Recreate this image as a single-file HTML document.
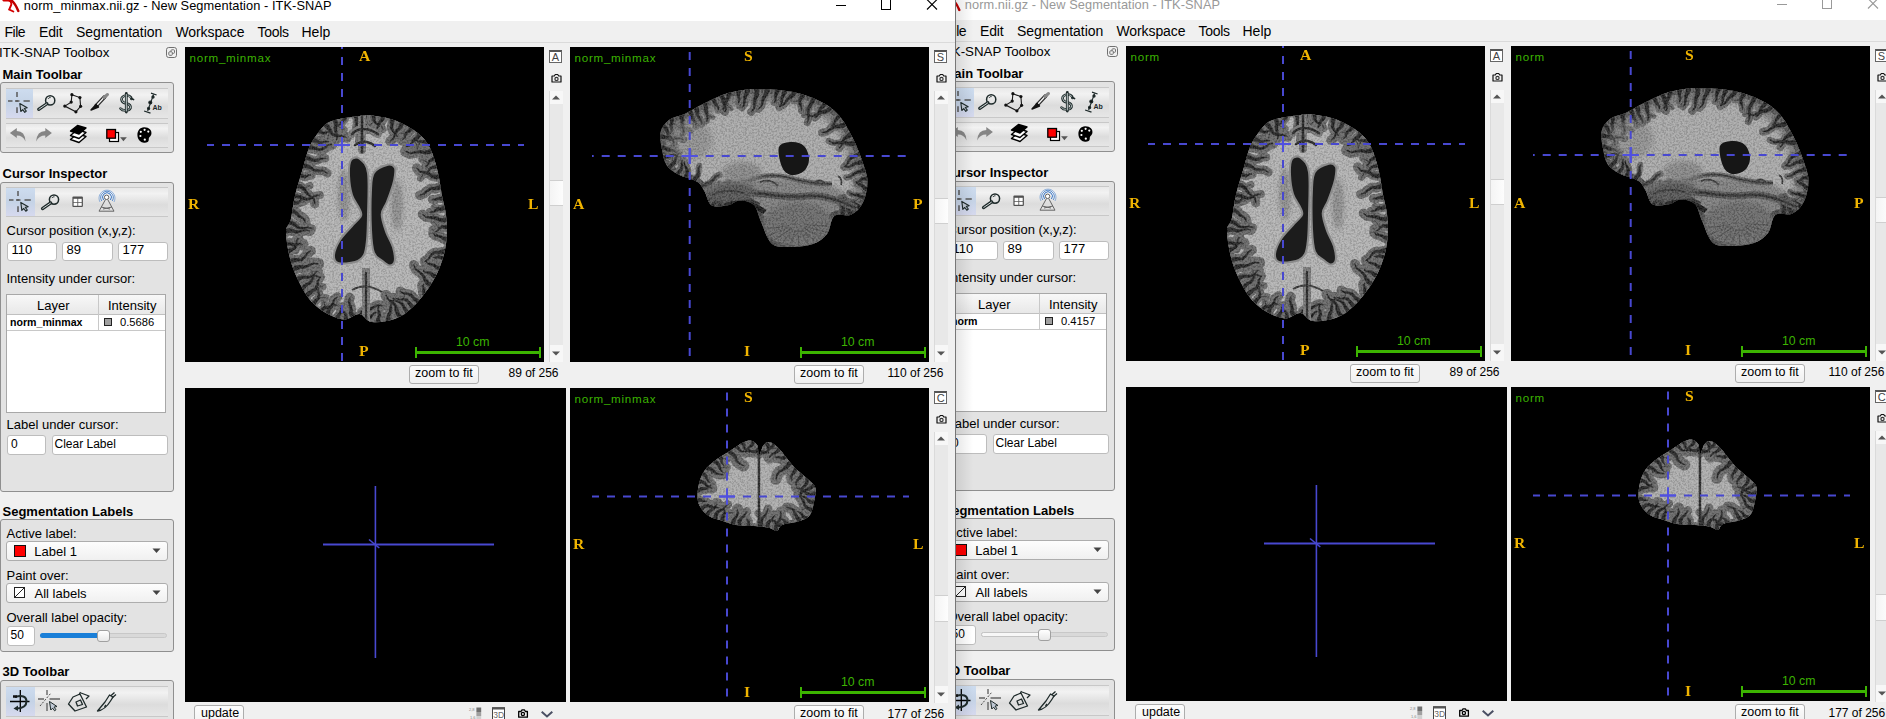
<!DOCTYPE html>
<html><head><meta charset="utf-8"><style>
html,body{margin:0;padding:0}
body{width:1886px;height:719px;overflow:hidden;position:relative;background:#f0f0f0;font-family:'Liberation Sans', sans-serif}
.t{position:absolute;white-space:pre}
.r{position:absolute}
.win{position:absolute;left:0;top:0;width:960px;height:730px}
</style></head><body>
<div style="position:absolute;left:955px;top:0;width:931px;height:719px;overflow:hidden">
<div class="win" style="left:-14px;top:-1px">
<div class="r" style="left:-20px;top:-5px;width:980px;height:26px;background:#fff"></div>
<div class="r" style="left:-20px;top:21px;width:980px;height:21px;background:#f0f0f0"></div>
<div class="r" style="left:-20px;top:42px;width:980px;height:1px;background:#dadada"></div>
<div class="r" style="left:-20px;top:43px;width:980px;height:687px;background:#f0f0f0"></div>
<div class="t" style="left:23.8px;top:0.16px;font-size:12.8px;line-height:12.8px;font-weight:400;color:#999;font-family:'Liberation Sans', sans-serif;letter-spacing:0.07px">norm.nii.gz - New Segmentation - ITK-SNAP</div>
<div class="r" style="left:836px;top:5px;width:10px;height:1px;background:#999"></div>
<div class="r" style="left:881px;top:-1px;width:10px;height:11px;border:1px solid #999;box-sizing:border-box"></div>
<svg class="r" style="left:926px;top:-1px" width="12" height="12" viewBox="0 0 12 12"><path d="M1 0.5L11 10.5M11 0.5L1 10.5" stroke="#999" stroke-width="1.1"/></svg>
<div class="t" style="left:4.5px;top:24.65px;font-size:14px;line-height:14px;font-weight:400;color:#000;font-family:'Liberation Sans', sans-serif;letter-spacing:-0.5px">File</div>
<div class="t" style="left:39px;top:24.65px;font-size:14px;line-height:14px;font-weight:400;color:#000;font-family:'Liberation Sans', sans-serif;letter-spacing:-0.2px">Edit</div>
<div class="t" style="left:76px;top:24.65px;font-size:14px;line-height:14px;font-weight:400;color:#000;font-family:'Liberation Sans', sans-serif;letter-spacing:0px">Segmentation</div>
<div class="t" style="left:175.5px;top:24.65px;font-size:14px;line-height:14px;font-weight:400;color:#000;font-family:'Liberation Sans', sans-serif;letter-spacing:-0.1px">Workspace</div>
<div class="t" style="left:257.5px;top:24.65px;font-size:14px;line-height:14px;font-weight:400;color:#000;font-family:'Liberation Sans', sans-serif;letter-spacing:-0.3px">Tools</div>
<div class="t" style="left:301.5px;top:24.65px;font-size:14px;line-height:14px;font-weight:400;color:#000;font-family:'Liberation Sans', sans-serif;letter-spacing:0px">Help</div>
<div class="t" style="left:-1px;top:45.74px;font-size:13.3px;line-height:13.3px;font-weight:400;color:#000;font-family:'Liberation Sans', sans-serif;">ITK-SNAP Toolbox</div>
<div class="t" style="left:2.5px;top:67.80px;font-size:13px;line-height:13px;font-weight:700;color:#000;font-family:'Liberation Sans', sans-serif;">Main Toolbar</div>
<div class="t" style="left:2.5px;top:166.80px;font-size:13px;line-height:13px;font-weight:700;color:#000;font-family:'Liberation Sans', sans-serif;">Cursor Inspector</div>
<div class="t" style="left:2.5px;top:504.50px;font-size:13px;line-height:13px;font-weight:700;color:#000;font-family:'Liberation Sans', sans-serif;">Segmentation Labels</div>
<div class="t" style="left:2.5px;top:665.20px;font-size:13px;line-height:13px;font-weight:700;color:#000;font-family:'Liberation Sans', sans-serif;">3D Toolbar</div>
<div class="r" style="left:0px;top:82px;width:174px;height:71px;background:#e3e3e3;border:1px solid #8f8f8f;border-radius:3px;box-sizing:border-box"></div>
<div class="r" style="left:0px;top:181.5px;width:174px;height:310.0px;background:#e3e3e3;border:1px solid #8f8f8f;border-radius:3px;box-sizing:border-box"></div>
<div class="r" style="left:0px;top:519px;width:174px;height:133px;background:#e3e3e3;border:1px solid #8f8f8f;border-radius:3px;box-sizing:border-box"></div>
<div class="r" style="left:0px;top:680px;width:174px;height:60px;background:#e3e3e3;border:1px solid #8f8f8f;border-radius:3px;box-sizing:border-box"></div>
<div class="r" style="left:6px;top:88px;width:162px;height:31px;background:linear-gradient(#e8e8e8,#f2f2f2 20%,#dcdcdc 60%,#e6e6e6);border-top:1px solid #c8c8c8;border-bottom:1px solid #c8c8c8;box-sizing:border-box"></div>
<div class="r" style="left:6px;top:123px;width:162px;height:25px;background:linear-gradient(#e8e8e8,#f2f2f2 20%,#dcdcdc 60%,#e6e6e6);border-top:1px solid #c8c8c8;border-bottom:1px solid #c8c8c8;box-sizing:border-box"></div>
<div class="r" style="left:6px;top:187px;width:162px;height:30px;background:linear-gradient(#e8e8e8,#f2f2f2 20%,#dcdcdc 60%,#e6e6e6);border-top:1px solid #c8c8c8;border-bottom:1px solid #c8c8c8;box-sizing:border-box"></div>
<div class="r" style="left:6px;top:686px;width:162px;height:31px;background:linear-gradient(#e8e8e8,#f2f2f2 20%,#dcdcdc 60%,#e6e6e6);border-top:1px solid #c8c8c8;border-bottom:1px solid #c8c8c8;box-sizing:border-box"></div>
<div class="r" style="left:6px;top:89px;width:27px;height:29px;background:linear-gradient(#cddcef,#c5d3e6 50%,#d6d9ee)"></div>
<div class="r" style="left:6px;top:188px;width:29px;height:28px;background:linear-gradient(#cddcef,#c5d3e6 50%,#d6d9ee)"></div>
<div class="r" style="left:6px;top:687px;width:29px;height:29px;background:linear-gradient(#cddcef,#c5d3e6 50%,#d6d9ee)"></div>
<div class="t" style="left:6.5px;top:224.00px;font-size:13px;line-height:13px;font-weight:400;color:#000;font-family:'Liberation Sans', sans-serif;">Cursor position (x,y,z):</div>
<div class="r" style="left:6.5px;top:241.5px;width:50.0px;height:19.5px;background:#fff;border:1px solid #bdbdbd;border-radius:3px;box-sizing:border-box"></div>
<div class="t" style="left:11.5px;top:243.00px;font-size:13px;line-height:13px;font-weight:400;color:#000;font-family:'Liberation Sans', sans-serif;">110</div>
<div class="r" style="left:61.5px;top:241.5px;width:51.0px;height:19.5px;background:#fff;border:1px solid #bdbdbd;border-radius:3px;box-sizing:border-box"></div>
<div class="t" style="left:66.5px;top:243.00px;font-size:13px;line-height:13px;font-weight:400;color:#000;font-family:'Liberation Sans', sans-serif;">89</div>
<div class="r" style="left:117.5px;top:241.5px;width:50.0px;height:19.5px;background:#fff;border:1px solid #bdbdbd;border-radius:3px;box-sizing:border-box"></div>
<div class="t" style="left:122.5px;top:243.00px;font-size:13px;line-height:13px;font-weight:400;color:#000;font-family:'Liberation Sans', sans-serif;">177</div>
<div class="t" style="left:6.5px;top:272.00px;font-size:13px;line-height:13px;font-weight:400;color:#000;font-family:'Liberation Sans', sans-serif;">Intensity under cursor:</div>
<div class="r" style="left:6px;top:294px;width:160px;height:119px;background:#fff;border:1px solid #a8a8a8;box-sizing:border-box"></div>
<div class="r" style="left:7px;top:295px;width:158px;height:20px;background:linear-gradient(#f8f8f8,#e8e8e8);border-bottom:1px solid #c0c0c0;box-sizing:border-box"></div>
<div class="r" style="left:7px;top:315px;width:158px;height:16px;border-bottom:1px solid #c8c8c8;box-sizing:border-box"></div>
<div class="r" style="left:98px;top:295px;width:1px;height:36px;background:#c8c8c8"></div>
<div class="t" style="left:37px;top:299.00px;font-size:13px;line-height:13px;font-weight:400;color:#000;font-family:'Liberation Sans', sans-serif;">Layer</div>
<div class="t" style="left:108px;top:299.00px;font-size:13px;line-height:13px;font-weight:400;color:#000;font-family:'Liberation Sans', sans-serif;">Intensity</div>
<div class="t" style="left:10px;top:316.53px;font-size:10.6px;line-height:10.6px;font-weight:700;color:#000;font-family:'Liberation Sans', sans-serif;">norm</div>
<div class="r" style="left:104px;top:318px;width:8px;height:8px;background:#a0a0a0;border:1px solid #222;box-sizing:border-box"></div>
<div class="t" style="left:120px;top:317.02px;font-size:11.2px;line-height:11.2px;font-weight:400;color:#000;font-family:'Liberation Sans', sans-serif;">0.4157</div>
<div class="t" style="left:6.5px;top:417.60px;font-size:13px;line-height:13px;font-weight:400;color:#000;font-family:'Liberation Sans', sans-serif;">Label under cursor:</div>
<div class="r" style="left:6.5px;top:435px;width:39.5px;height:19.5px;background:#fff;border:1px solid #bdbdbd;border-radius:3px;box-sizing:border-box"></div>
<div class="t" style="left:11px;top:437.84px;font-size:12px;line-height:12px;font-weight:400;color:#000;font-family:'Liberation Sans', sans-serif;">0</div>
<div class="r" style="left:51.5px;top:435px;width:116.0px;height:19.5px;background:#fff;border:1px solid #bdbdbd;border-radius:3px;box-sizing:border-box"></div>
<div class="t" style="left:54.5px;top:437.84px;font-size:12px;line-height:12px;font-weight:400;color:#000;font-family:'Liberation Sans', sans-serif;">Clear Label</div>
<div class="t" style="left:6.5px;top:526.70px;font-size:13px;line-height:13px;font-weight:400;color:#000;font-family:'Liberation Sans', sans-serif;">Active label:</div>
<div class="r" style="left:6px;top:541px;width:162px;height:19.5px;background:linear-gradient(#fdfdfd,#f0f0f0);border:1px solid #adadad;border-radius:3px;box-sizing:border-box"></div>
<div class="r" style="left:14px;top:545px;width:12px;height:12px;background:#f00;border:1px solid #111;box-sizing:border-box"></div>
<div class="t" style="left:34.3px;top:544.50px;font-size:13px;line-height:13px;font-weight:400;color:#000;font-family:'Liberation Sans', sans-serif;">Label 1</div>
<svg class="r" style="left:152px;top:548px" width="9" height="6"><path d="M0.5 0.5H8.5L4.5 5z" fill="#444"/></svg>
<div class="t" style="left:6.5px;top:568.70px;font-size:13px;line-height:13px;font-weight:400;color:#000;font-family:'Liberation Sans', sans-serif;">Paint over:</div>
<div class="r" style="left:6px;top:583px;width:162px;height:19.5px;background:linear-gradient(#fdfdfd,#f0f0f0);border:1px solid #adadad;border-radius:3px;box-sizing:border-box"></div>
<svg class="r" style="left:13px;top:586px" width="13" height="13"><rect x="1.5" y="1.5" width="10" height="10" fill="#fff" stroke="#222"/><path d="M1.5 11.5L11.5 1.5" stroke="#222"/></svg>
<div class="t" style="left:34.5px;top:586.50px;font-size:13px;line-height:13px;font-weight:400;color:#000;font-family:'Liberation Sans', sans-serif;">All labels</div>
<svg class="r" style="left:152px;top:590px" width="9" height="6"><path d="M0.5 0.5H8.5L4.5 5z" fill="#444"/></svg>
<div class="t" style="left:6.5px;top:611.00px;font-size:13px;line-height:13px;font-weight:400;color:#000;font-family:'Liberation Sans', sans-serif;">Overall label opacity:</div>
<div class="r" style="left:6.5px;top:626px;width:28.0px;height:19.5px;background:#fff;border:1px solid #bdbdbd;border-radius:3px;box-sizing:border-box"></div>
<div class="t" style="left:10.5px;top:629.34px;font-size:12px;line-height:12px;font-weight:400;color:#000;font-family:'Liberation Sans', sans-serif;">50</div>
<div class="r" style="left:40px;top:633px;width:127px;height:5px;background:#d9d9d9;border:1px solid #c8c8c8;border-radius:3px;box-sizing:border-box"></div>
<div class="r" style="left:40px;top:633px;width:63px;height:5px;background:#f7f7f7;border:1px solid #c4c4c4;box-sizing:border-box;border-radius:3px"></div>
<div class="r" style="left:97px;top:629.5px;width:12.5px;height:12.0px;background:linear-gradient(#fff,#e8e8e8);border:1px solid #a0a0a0;border-radius:3px;box-sizing:border-box"></div>
<div class="r" style="left:185px;top:47px;width:359px;height:315px;background:#000;overflow:hidden"></div>
<div class="r" style="left:570px;top:47px;width:359px;height:315px;background:#000;overflow:hidden"></div>
<div class="r" style="left:185px;top:388px;width:381px;height:314px;background:#000;overflow:hidden"></div>
<div class="r" style="left:570px;top:388px;width:359px;height:314px;background:#000;overflow:hidden"></div>
<svg class="r" style="left:0;top:0" width="960" height="730" viewBox="0 0 960 730"><defs><filter id="b1b" x="-5%" y="-5%" width="110%" height="110%"><feGaussianBlur stdDeviation="0.6"/></filter><filter id="b2b" x="-50%" y="-50%" width="200%" height="200%"><feGaussianBlur stdDeviation="2.5"/></filter><filter id="b3b" x="-20%" y="-20%" width="140%" height="140%"><feGaussianBlur stdDeviation="4"/></filter><filter id="nzb" x="0" y="0" width="100%" height="100%"><feTurbulence type="fractalNoise" baseFrequency="0.55" numOctaves="2" seed="7"/><feColorMatrix values="0 0 0 2.2 -0.85  0 0 0 2.2 -0.85  0 0 0 2.2 -0.85  0 0 0 0 0.13"/></filter><clipPath id="caxb"><path d="M359.5,116.0C352.1,116.9 337.4,118.7 330.5,121.5C323.6,124.3 321.6,128.6 318.0,133.0C314.4,137.4 311.5,142.2 309.0,148.0C306.5,153.8 305.3,160.1 303.0,168.0C300.7,175.9 297.1,187.0 295.0,195.7C292.9,204.4 292.2,213.9 290.7,220.0C289.2,226.1 286.0,225.2 286.0,232.0C286.0,238.8 288.4,252.4 290.7,261.0C293.0,269.6 296.7,277.2 300.0,283.8C303.3,290.4 306.3,295.8 310.6,300.7C314.9,305.6 320.4,309.9 326.0,313.0C331.6,316.1 338.4,319.3 344.0,319.5C349.6,319.7 354.9,313.6 359.5,314.0C364.1,314.4 365.9,321.2 371.8,322.0C377.7,322.8 387.8,321.5 394.7,319.0C401.6,316.5 406.9,312.7 413.0,306.8C419.1,300.9 426.6,291.4 431.4,283.8C436.2,276.2 439.4,268.6 442.0,261.0C444.6,253.4 446.0,245.7 446.7,238.0C447.4,230.3 446.8,222.1 446.0,215.0C445.2,207.9 443.4,203.0 442.0,195.7C440.6,188.4 439.6,178.9 437.6,171.0C435.6,163.1 433.3,154.3 430.0,148.0C426.7,141.7 423.4,137.6 417.7,133.0C412.0,128.4 403.1,123.5 396.0,120.7C388.9,117.9 381.1,116.8 375.0,116.0C368.9,115.2 366.9,115.1 359.5,116.0Z"/></clipPath><clipPath id="csagb"><path d="M660.6,132.0C661.8,127.2 664.9,123.1 669.0,120.0C673.1,116.9 679.7,116.2 685.5,113.5C691.3,110.8 696.9,107.0 704.0,103.6C711.1,100.2 719.3,95.4 728.0,93.0C736.7,90.6 745.8,89.2 756.4,89.0C767.0,88.8 781.2,89.8 791.8,91.8C802.4,93.8 812.1,97.3 820.0,101.3C827.9,105.2 833.5,109.2 839.0,115.5C844.5,121.8 849.3,131.1 853.3,139.0C857.3,146.9 860.4,155.6 862.8,162.7C865.2,169.8 867.5,175.0 867.5,181.7C867.5,188.4 865.5,197.5 862.8,203.0C860.0,208.5 855.7,212.6 851.0,214.8C846.3,217.0 838.4,212.8 834.4,216.0C830.4,219.2 830.6,229.3 827.0,234.0C823.4,238.7 818.9,241.9 813.0,244.0C807.1,246.1 798.6,246.7 791.8,246.7C785.0,246.7 777.1,248.2 772.0,244.0C766.9,239.8 764.0,228.2 761.0,221.8C758.0,215.4 757.5,208.8 754.0,205.3C750.5,201.8 744.1,200.6 739.8,200.6C735.5,200.6 732.7,204.5 728.0,205.3C723.3,206.1 715.4,207.7 711.5,205.3C707.6,202.9 706.8,194.9 704.4,191.0C702.0,187.1 701.3,184.4 697.0,181.7C692.7,179.0 683.5,177.4 678.4,174.6C673.3,171.8 669.3,169.3 666.5,165.0C663.7,160.7 662.8,154.1 661.8,148.6C660.8,143.1 659.4,136.8 660.6,132.0Z"/></clipPath><clipPath id="ccorb"><path d="M751.2,440.7C753.5,441.2 756.0,442.8 757.3,445.3C758.6,447.9 757.9,456.0 758.9,456.0C759.9,456.0 761.7,447.6 763.5,445.3C765.3,443.0 767.1,441.7 769.6,442.2C772.1,442.7 774.7,444.3 778.8,448.4C782.9,452.5 788.9,461.3 794.0,466.7C799.1,472.1 805.8,476.9 809.4,480.5C813.0,484.1 814.7,484.6 815.5,488.2C816.3,491.8 815.0,497.4 814.0,502.0C813.0,506.6 812.2,512.4 809.4,515.7C806.6,519.0 801.6,520.2 797.0,521.8C792.4,523.3 785.1,523.5 781.8,525.0C778.5,526.5 779.2,530.5 777.2,531.0C775.2,531.5 772.7,528.8 769.6,528.0C766.5,527.2 764.5,526.9 758.9,526.4C753.3,525.9 742.4,526.0 736.0,525.0C729.6,524.0 725.2,521.8 720.6,520.3C716.0,518.8 712.0,518.2 708.4,515.7C704.8,513.2 701.0,509.1 699.2,505.0C697.4,500.9 697.2,496.3 697.7,491.2C698.2,486.1 699.7,479.2 702.2,474.4C704.8,469.5 708.1,466.2 713.0,462.1C717.9,458.0 726.2,453.2 731.3,449.9C736.4,446.6 740.3,443.7 743.6,442.2C746.9,440.7 748.9,440.2 751.2,440.7Z"/></clipPath></defs><g filter="url(#b1b)"><g clip-path="url(#caxb)"><path d="M359.5,116.0C352.1,116.9 337.4,118.7 330.5,121.5C323.6,124.3 321.6,128.6 318.0,133.0C314.4,137.4 311.5,142.2 309.0,148.0C306.5,153.8 305.3,160.1 303.0,168.0C300.7,175.9 297.1,187.0 295.0,195.7C292.9,204.4 292.2,213.9 290.7,220.0C289.2,226.1 286.0,225.2 286.0,232.0C286.0,238.8 288.4,252.4 290.7,261.0C293.0,269.6 296.7,277.2 300.0,283.8C303.3,290.4 306.3,295.8 310.6,300.7C314.9,305.6 320.4,309.9 326.0,313.0C331.6,316.1 338.4,319.3 344.0,319.5C349.6,319.7 354.9,313.6 359.5,314.0C364.1,314.4 365.9,321.2 371.8,322.0C377.7,322.8 387.8,321.5 394.7,319.0C401.6,316.5 406.9,312.7 413.0,306.8C419.1,300.9 426.6,291.4 431.4,283.8C436.2,276.2 439.4,268.6 442.0,261.0C444.6,253.4 446.0,245.7 446.7,238.0C447.4,230.3 446.8,222.1 446.0,215.0C445.2,207.9 443.4,203.0 442.0,195.7C440.6,188.4 439.6,178.9 437.6,171.0C435.6,163.1 433.3,154.3 430.0,148.0C426.7,141.7 423.4,137.6 417.7,133.0C412.0,128.4 403.1,123.5 396.0,120.7C388.9,117.9 381.1,116.8 375.0,116.0C368.9,115.2 366.9,115.1 359.5,116.0Z" fill="#b6b6b6"/><g fill="#8e8e8e" filter="url(#b2b)"><ellipse cx="344" cy="195" rx="6" ry="26"/><ellipse cx="397" cy="205" rx="6" ry="26"/></g><path d="M359.5,116.0C352.1,116.9 337.4,118.7 330.5,121.5C323.6,124.3 321.6,128.6 318.0,133.0C314.4,137.4 311.5,142.2 309.0,148.0C306.5,153.8 305.3,160.1 303.0,168.0C300.7,175.9 297.1,187.0 295.0,195.7C292.9,204.4 292.2,213.9 290.7,220.0C289.2,226.1 286.0,225.2 286.0,232.0C286.0,238.8 288.4,252.4 290.7,261.0C293.0,269.6 296.7,277.2 300.0,283.8C303.3,290.4 306.3,295.8 310.6,300.7C314.9,305.6 320.4,309.9 326.0,313.0C331.6,316.1 338.4,319.3 344.0,319.5C349.6,319.7 354.9,313.6 359.5,314.0C364.1,314.4 365.9,321.2 371.8,322.0C377.7,322.8 387.8,321.5 394.7,319.0C401.6,316.5 406.9,312.7 413.0,306.8C419.1,300.9 426.6,291.4 431.4,283.8C436.2,276.2 439.4,268.6 442.0,261.0C444.6,253.4 446.0,245.7 446.7,238.0C447.4,230.3 446.8,222.1 446.0,215.0C445.2,207.9 443.4,203.0 442.0,195.7C440.6,188.4 439.6,178.9 437.6,171.0C435.6,163.1 433.3,154.3 430.0,148.0C426.7,141.7 423.4,137.6 417.7,133.0C412.0,128.4 403.1,123.5 396.0,120.7C388.9,117.9 381.1,116.8 375.0,116.0C368.9,115.2 366.9,115.1 359.5,116.0Z" fill="none" stroke="#808080" stroke-width="3"/><g stroke="#686868" stroke-linecap="round" stroke-linejoin="round" fill="none"><path d="M354.4,114.1L356.7,118.3L357.1,123.1L356.2,127.7L357.5,132.3L359.5,136.7L359.2,141.4" stroke-width="8.4"/><path d="M344.1,115.6L344.6,117.7L343.9,119.7L342.3,121.1L341.2,122.9L340.0,124.7L338.0,125.4" stroke-width="9.0"/><path d="M342.3,121.1L335.1,126.8" stroke-width="7.0"/><path d="M333.0,118.0L335.3,121.2L336.0,125.0L335.3,128.9L336.2,132.7L337.4,136.4L336.4,140.2" stroke-width="8.9"/><path d="M336.0,125.0L344.0,129.7" stroke-width="7.0"/><path d="M323.4,122.8L327.0,126.1L329.9,130.0L332.4,134.2L337.0,135.9L341.8,135.9L346.5,137.3" stroke-width="11.1"/><path d="M329.9,130.0L327.4,139.6" stroke-width="7.0"/><path d="M316.7,130.7L319.0,131.0L321.2,131.9L323.2,133.1L325.5,132.9L327.7,131.9L330.0,131.7" stroke-width="8.5"/><path d="M310.1,140.1L313.4,140.0L316.5,141.0L319.4,142.6L322.6,142.4L325.7,141.3L329.0,141.6" stroke-width="10.6"/><path d="M316.5,141.0L321.1,138.9" stroke-width="7.0"/><path d="M306.5,147.5L311.0,147.4L315.4,148.3L319.7,149.7L323.9,148.3L327.5,145.5L331.7,144.2" stroke-width="11.3"/><path d="M319.7,149.7L325.3,146.4" stroke-width="7.0"/><path d="M303.2,157.8L307.0,158.0L310.7,159.1L314.1,160.8L317.9,160.3L321.3,158.6L325.2,158.3" stroke-width="8.4"/><path d="M314.1,160.8L320.2,157.5" stroke-width="7.0"/><path d="M300.9,166.2L305.6,165.8L310.1,167.3L313.9,170.1L318.6,170.8L323.3,170.8L327.4,173.2" stroke-width="8.8"/><path d="M298.1,175.6L300.3,175.3L302.5,175.7L304.5,176.6L306.7,176.1L308.7,175.2L310.9,175.1" stroke-width="9.3"/><path d="M294.9,186.3L299.8,186.2L303.9,188.7L306.5,192.8L310.1,195.9L313.8,199.1L314.7,203.8" stroke-width="9.2"/><path d="M303.9,188.7L310.0,185.7" stroke-width="7.0"/><path d="M292.3,196.2L297.1,196.3L301.8,197.5L306.2,199.4L310.9,198.4L315.0,195.9L319.8,195.1" stroke-width="8.1"/><path d="M301.8,197.5L304.0,202.0" stroke-width="7.0"/><path d="M290.9,203.9L292.9,203.0L295.2,202.7L297.5,202.9L299.5,201.8L301.1,200.3L303.2,199.5" stroke-width="10.1"/><path d="M297.5,202.9L301.5,198.2" stroke-width="7.0"/><path d="M289.7,211.7L293.1,211.3L296.3,212.8L298.5,215.5L301.4,217.4L304.3,219.4L305.3,222.7" stroke-width="10.6"/><path d="M296.3,212.8L299.8,218.0" stroke-width="7.0"/><path d="M287.4,221.8L291.7,222.9L295.5,225.1L298.9,227.9L303.3,228.4L307.6,227.5L311.9,228.5" stroke-width="8.2"/><path d="M298.9,227.9L306.2,227.6" stroke-width="7.0"/><path d="M283.5,232.3L287.7,230.6L292.2,230.6L296.4,232.0L300.9,231.4L305.1,230.0L309.5,230.9" stroke-width="10.4"/><path d="M284.8,245.1L287.6,243.9L290.7,243.9L293.6,244.9L296.6,244.5L299.6,243.7L302.5,244.5" stroke-width="11.9"/><path d="M290.7,243.9L295.8,250.6" stroke-width="7.0"/><path d="M286.4,253.5L288.9,251.2L291.8,249.4L294.9,247.9L296.4,244.8L296.7,241.4L298.0,238.2" stroke-width="10.5"/><path d="M288.4,262.2L292.5,260.6L296.8,259.9L301.2,259.8L304.7,257.2L307.1,253.5L310.6,250.9" stroke-width="10.3"/><path d="M291.6,271.5L295.1,268.2L299.8,266.8L304.6,267.1L309.1,265.4L313.4,263.3L318.2,263.8" stroke-width="11.9"/><path d="M296.3,282.0L299.0,278.5L303.1,277.0L307.4,277.5L311.7,276.6L316.0,275.7L319.9,277.7" stroke-width="8.1"/><path d="M301.1,291.3L303.2,287.4L306.5,284.5L310.4,282.4L312.7,278.6L314.0,274.4L317.0,271.2" stroke-width="11.8"/><path d="M312.7,278.6L312.4,271.4" stroke-width="7.0"/><path d="M305.2,297.9L307.9,294.3L311.4,291.5L315.3,289.3L317.3,285.3L318.0,280.8L320.3,277.0" stroke-width="9.2"/><path d="M317.3,285.3L323.1,286.8" stroke-width="7.0"/><path d="M312.4,306.1L314.0,303.0L316.2,300.3L318.7,297.8L319.1,294.3L318.2,290.9L318.5,287.4" stroke-width="8.3"/><path d="M318.7,297.8L326.0,297.4" stroke-width="7.0"/><path d="M320.8,312.7L322.2,309.7L324.9,307.9L328.2,307.4L331.1,306.0L334.1,304.6L337.3,305.3" stroke-width="8.1"/><path d="M324.9,307.9L324.2,301.3" stroke-width="7.0"/><path d="M328.1,316.9L327.6,313.1L329.0,309.5L331.7,306.7L333.1,303.1L334.2,299.4L337.3,297.1" stroke-width="9.7"/><path d="M329.0,309.5L324.0,303.7" stroke-width="7.0"/><path d="M337.2,320.8L337.1,318.1L338.2,315.7L339.9,313.7L340.7,311.2L341.1,308.6L342.8,306.5" stroke-width="8.8"/><path d="M346.6,321.7L345.9,319.6L345.7,317.3L345.9,315.0L344.7,313.0L343.0,311.5L341.9,309.5" stroke-width="10.5"/><path d="M355.2,317.8L352.2,315.5L350.9,312.1L351.0,308.4L349.9,304.8L348.7,301.3L349.8,297.8" stroke-width="9.9"/><path d="M349.9,304.8L350.5,299.0" stroke-width="7.0"/><path d="M360.2,316.8L361.9,312.6L365.5,309.9L370.0,309.1L374.0,307.0L378.0,305.0L382.4,306.0" stroke-width="10.1"/><path d="M374.0,307.0L382.2,305.0" stroke-width="7.0"/><path d="M366.3,322.2L366.9,319.8L368.6,317.9L370.9,316.8L372.6,314.9L374.2,313.0L376.7,312.3" stroke-width="10.8"/><path d="M379.3,324.6L378.2,321.6L378.3,318.4L379.4,315.4L378.9,312.2L378.0,309.1L378.7,306.0" stroke-width="9.6"/><path d="M389.9,323.0L388.2,319.3L388.5,315.2L390.4,311.6L390.9,307.5L391.1,303.5L393.6,300.3" stroke-width="10.6"/><path d="M401.8,318.5L398.5,315.0L396.5,310.6L395.6,305.8L392.3,302.2L388.4,299.5L386.0,295.3" stroke-width="11.0"/><path d="M409.2,313.5L406.2,311.1L404.1,307.9L402.6,304.3L399.5,302.1L395.9,300.8L393.1,298.1" stroke-width="10.2"/><path d="M399.5,302.1L390.6,300.5" stroke-width="7.0"/><path d="M415.1,308.3L411.9,306.1L409.4,303.4L407.1,300.3L403.4,299.3L399.7,299.6L396.0,298.6" stroke-width="11.8"/><path d="M403.4,299.3L405.0,292.6" stroke-width="7.0"/><path d="M420.5,302.5L416.9,300.9L413.9,298.3L411.5,295.2L407.7,293.8L403.8,293.4L400.4,291.4" stroke-width="9.6"/><path d="M426.3,295.4L424.5,294.2L423.7,292.2L423.9,290.0L423.4,287.9L422.9,285.8L423.9,283.9" stroke-width="11.7"/><path d="M433.0,285.9L428.5,284.0L425.2,280.3L423.3,275.7L419.7,272.3L415.7,269.4L413.9,264.9" stroke-width="9.8"/><path d="M438.0,277.2L435.3,276.7L432.9,275.3L430.9,273.3L428.3,272.5L425.5,272.3L423.1,270.8" stroke-width="11.6"/><path d="M442.2,267.8L439.1,268.2L436.2,267.1L433.9,265.1L431.0,264.1L428.0,263.4L425.9,261.2" stroke-width="11.7"/><path d="M445.6,257.7L443.5,258.2L441.3,257.8L439.4,256.9L437.2,257.1L435.1,257.7L432.9,257.3" stroke-width="10.5"/><path d="M439.4,256.9L434.8,252.0" stroke-width="7.0"/><path d="M447.5,250.0L443.4,251.8L438.9,252.5L434.4,252.6L430.8,255.3L428.2,259.1L424.5,261.6" stroke-width="9.5"/><path d="M449.1,238.7L446.2,239.4L443.4,238.6L441.0,236.8L438.2,236.0L435.2,235.4L433.2,233.2" stroke-width="10.3"/><path d="M438.2,236.0L432.2,229.4" stroke-width="7.0"/><path d="M449.4,226.2L446.9,226.9L444.2,227.1L441.6,226.9L439.4,228.4L437.8,230.5L435.6,231.9" stroke-width="9.5"/><path d="M439.4,228.4L433.3,221.0" stroke-width="7.0"/><path d="M448.8,218.1L444.6,220.3L439.9,220.1L435.6,218.0L430.9,217.6L426.2,217.3L422.5,214.3" stroke-width="9.5"/><path d="M435.6,218.0L429.5,211.9" stroke-width="7.0"/><path d="M446.8,205.6L444.6,207.8L441.6,208.9L438.4,209.0L435.6,210.4L433.0,212.2L429.8,212.3" stroke-width="8.6"/><path d="M441.6,208.9L434.0,207.5" stroke-width="7.0"/><path d="M444.7,196.3L443.1,197.9L441.0,198.6L438.7,198.4L436.6,199.1L434.5,199.9L432.3,199.4" stroke-width="8.9"/><path d="M442.8,185.2L439.2,187.5L435.0,188.6L430.7,188.6L427.1,190.8L424.0,193.8L419.9,195.2" stroke-width="9.6"/><path d="M441.1,175.4L436.9,177.0L432.4,176.3L428.6,173.7L424.2,172.6L419.7,171.6L416.8,168.1" stroke-width="9.7"/><path d="M424.2,172.6L420.5,178.4" stroke-width="7.0"/><path d="M438.6,164.8L436.5,166.4L434.1,167.3L431.5,167.6L429.4,169.3L427.9,171.4L425.6,172.7" stroke-width="8.2"/><path d="M429.4,169.3L425.3,166.1" stroke-width="7.0"/><path d="M436.2,156.6L434.5,158.5L432.3,159.9L429.9,160.8L428.4,162.8L427.5,165.2L425.7,167.0" stroke-width="9.2"/><path d="M428.4,162.8L421.7,159.6" stroke-width="7.0"/><path d="M433.1,148.6L429.3,151.7L424.5,152.6L419.8,151.6L415.0,152.3L410.2,153.3L405.8,151.4" stroke-width="11.2"/><path d="M428.2,140.3L426.6,141.7L424.5,142.1L422.4,141.5L420.2,141.6L418.0,141.7L416.3,140.4" stroke-width="11.1"/><path d="M420.2,141.6L416.8,150.9" stroke-width="7.0"/><path d="M419.7,131.4L419.3,135.0L417.1,137.9L414.0,139.8L411.8,142.6L409.8,145.5L406.4,146.8" stroke-width="8.4"/><path d="M414.0,139.8L417.9,146.7" stroke-width="7.0"/><path d="M412.2,126.1L411.1,128.8L409.1,131.0L406.7,132.5L405.3,135.1L404.5,137.9L402.4,140.0" stroke-width="11.3"/><path d="M406.7,132.5L400.3,133.9" stroke-width="7.0"/><path d="M401.6,120.4L401.6,124.6L399.7,128.2L396.6,131.0L394.8,134.7L393.4,138.6L390.0,141.1" stroke-width="9.5"/><path d="M392.2,116.7L392.5,120.4L392.1,124.1L391.3,127.7L392.9,131.0L395.6,133.5L397.4,136.8" stroke-width="9.2"/><path d="M391.3,127.7L393.8,133.1" stroke-width="7.0"/><path d="M383.3,114.7L383.0,117.7L381.6,120.3L379.4,122.3L378.2,125.1L377.5,128.0L375.4,130.1" stroke-width="10.8"/><path d="M379.4,122.3L383.1,129.3" stroke-width="7.0"/><path d="M372.1,113.1L373.3,115.5L373.8,118.2L374.0,120.8L375.7,122.9L378.0,124.3L379.6,126.5" stroke-width="11.3"/><path d="M374.0,120.8L368.1,127.2" stroke-width="7.0"/><path d="M363.6,113.0L364.4,115.9L364.3,118.8L363.6,121.7L364.6,124.5L366.3,126.9L366.9,129.8" stroke-width="8.8"/><path d="M363.6,121.7L367.6,125.9" stroke-width="7.0"/></g><g fill="#222222" stroke="#222222" stroke-width="0.6" stroke-linejoin="round"><path d="M352.1,114.5L354.9,118.6L355.6,123.3L354.9,127.9L356.5,132.5L359.0,136.7L358.9,141.5L359.5,141.4L360.1,136.6L358.5,132.2L357.5,127.6L358.7,122.8L358.4,118.1L356.6,113.8Z"/><path d="M341.8,115.3L342.8,117.1L342.6,119.0L341.4,120.4L340.6,122.2L339.8,124.2L337.9,125.1L338.1,125.6L340.3,125.2L341.8,123.6L343.2,121.8L345.1,120.4L346.4,118.3L346.4,115.9Z"/><path d="M342.3,121.1L335.1,126.8"/><path d="M330.9,118.6L333.6,121.6L334.3,125.3L333.9,129.0L335.2,132.7L336.8,136.4L336.1,140.2L336.7,140.2L338.1,136.4L337.2,132.7L336.7,128.8L337.7,124.8L337.1,120.8L335.1,117.4Z"/><path d="M336.0,125.0L344.0,129.7"/><path d="M321.6,123.8L325.4,127.4L328.9,131.2L331.7,135.4L336.7,136.8L341.8,136.4L346.5,137.6L346.4,137.0L341.9,135.3L337.2,135.1L333.0,133.0L330.9,128.8L328.6,124.8L325.2,121.9Z"/><path d="M329.9,130.0L327.4,139.6"/><path d="M315.7,132.4L318.3,132.9L320.9,133.4L323.2,134.4L325.7,133.8L327.8,132.4L330.1,132.0L329.9,131.4L327.5,131.3L325.4,132.0L323.2,131.9L321.4,130.5L319.7,129.1L317.6,129.0Z"/><path d="M309.3,142.4L312.9,142.0L316.3,142.5L319.3,143.9L322.7,143.2L325.8,141.9L329.0,141.9L328.9,141.3L325.7,140.7L322.6,141.5L319.5,141.2L316.8,139.5L313.9,138.1L311.0,137.7Z"/><path d="M316.5,141.0L321.1,138.9"/><path d="M305.9,149.4L310.7,149.3L315.4,149.6L319.9,150.9L324.3,149.2L327.8,146.0L331.9,144.4L331.6,143.9L327.2,145.0L323.6,147.4L319.4,148.5L315.4,146.9L311.3,145.4L307.2,145.5Z"/><path d="M319.7,149.7L325.3,146.4"/><path d="M302.3,159.9L306.5,159.8L310.5,160.7L314.1,162.0L318.0,161.2L321.5,159.2L325.3,158.6L325.0,158.0L321.2,158.0L317.8,159.4L314.1,159.6L310.9,157.5L307.5,156.1L304.1,155.7Z"/><path d="M314.1,160.8L320.2,157.5"/><path d="M300.3,168.5L305.0,167.8L309.7,168.7L313.6,171.3L318.3,171.8L323.1,171.4L327.3,173.5L327.5,172.9L323.5,170.2L318.9,169.9L314.3,168.9L310.5,165.9L306.2,163.8L301.6,163.8Z"/><path d="M297.6,177.5L300.0,177.1L302.4,177.3L304.6,177.9L306.8,177.0L308.8,175.7L311.0,175.3L310.8,174.8L308.5,174.6L306.5,175.3L304.4,175.2L302.5,174.2L300.6,173.6L298.6,173.7Z"/><path d="M294.2,188.3L298.9,187.8L303.0,189.9L305.6,193.5L309.3,196.4L313.3,199.3L314.4,203.9L315.0,203.8L314.4,198.9L311.0,195.4L307.3,192.0L304.8,187.5L300.6,184.6L295.6,184.2Z"/><path d="M303.9,188.7L310.0,185.7"/><path d="M291.4,198.5L296.7,198.0L301.7,198.9L306.3,200.6L311.1,199.2L315.3,196.5L319.9,195.3L319.6,194.8L314.8,195.3L310.7,197.5L306.1,198.2L301.9,196.1L297.5,194.5L293.2,193.9Z"/><path d="M301.8,197.5L304.0,202.0"/><path d="M291.0,206.1L293.2,204.8L295.7,204.4L297.9,204.1L299.9,202.6L301.4,200.8L303.4,199.7L303.1,199.2L300.8,199.7L299.1,201.0L297.0,201.7L294.7,201.1L292.6,201.2L290.7,201.8Z"/><path d="M297.5,202.9L301.5,198.2"/><path d="M289.2,213.8L292.5,212.8L295.5,214.0L297.6,216.5L300.7,218.0L303.8,219.7L305.0,222.8L305.6,222.6L304.8,219.1L302.1,216.9L299.4,214.5L297.1,211.5L293.8,209.8L290.1,209.7Z"/><path d="M296.3,212.8L299.8,218.0"/><path d="M286.2,223.5L290.9,224.5L294.9,226.7L298.6,229.1L303.2,229.2L307.6,228.1L312.0,228.7L311.9,228.2L307.6,226.9L303.4,227.5L299.1,226.8L296.1,223.5L292.5,221.4L288.5,220.2Z"/><path d="M298.9,227.9L306.2,227.6"/><path d="M283.6,234.6L287.7,232.6L292.2,232.3L296.4,233.3L300.9,232.3L305.1,230.6L309.5,231.2L309.5,230.6L305.1,229.3L300.9,230.5L296.4,230.7L292.1,228.9L287.6,228.6L283.4,230.0Z"/><path d="M285.0,247.4L287.7,245.7L290.7,245.3L293.6,246.2L296.6,245.4L299.5,244.3L302.5,244.8L302.6,244.2L299.6,243.0L296.7,243.6L293.6,243.5L290.7,242.4L287.5,242.0L284.7,242.8Z"/><path d="M290.7,243.9L295.8,250.6"/><path d="M287.2,255.5L290.0,252.8L292.8,250.4L295.9,248.5L297.2,245.2L297.3,241.5L298.3,238.2L297.7,238.2L296.1,241.3L295.5,244.5L293.9,247.2L290.8,248.4L287.8,249.5L285.5,251.5Z"/><path d="M288.5,264.6L292.9,262.5L297.3,261.3L301.8,260.9L305.3,257.9L307.5,253.9L310.8,251.0L310.3,250.7L306.6,253.1L304.1,256.4L300.6,258.8L296.3,258.6L292.1,258.6L288.4,259.8Z"/><path d="M292.4,273.4L295.8,270.1L300.2,268.4L304.9,268.3L309.3,266.4L313.5,263.9L318.3,264.1L318.2,263.5L313.4,262.7L309.0,264.5L304.3,265.8L299.3,265.2L294.5,266.3L290.8,269.6Z"/><path d="M297.6,284.0L299.7,280.2L303.4,278.4L307.5,278.7L311.6,277.5L315.8,276.3L319.8,277.9L320.0,277.4L316.2,275.1L311.8,275.7L307.4,276.3L302.8,275.7L298.3,276.9L295.0,280.0Z"/><path d="M302.6,293.1L304.4,288.7L307.6,285.5L311.4,283.2L313.5,279.2L314.5,274.8L317.2,271.3L316.7,271.1L313.4,274.1L311.9,278.1L309.4,281.6L305.5,283.6L302.1,286.2L299.5,289.5Z"/><path d="M312.7,278.6L312.4,271.4"/><path d="M306.4,299.7L309.2,295.9L312.5,292.5L316.4,290.0L318.2,285.7L318.6,281.0L320.6,277.0L320.0,276.9L317.4,280.6L316.4,284.8L314.2,288.6L310.3,290.5L306.5,292.7L304.0,296.0Z"/><path d="M317.3,285.3L323.1,286.8"/><path d="M314.1,307.9L315.5,304.1L317.6,300.9L319.9,298.1L320.0,294.3L318.8,290.8L318.8,287.3L318.2,287.5L317.6,290.9L318.1,294.2L317.4,297.4L314.8,299.6L312.5,301.9L310.7,304.4Z"/><path d="M318.7,297.8L326.0,297.4"/><path d="M322.3,314.3L323.2,311.2L325.6,309.2L328.6,308.7L331.3,307.0L334.1,305.1L337.3,305.6L337.4,305.0L334.1,304.0L331.0,305.0L327.8,306.2L324.2,306.6L321.1,308.3L319.2,311.2Z"/><path d="M324.9,307.9L324.2,301.3"/><path d="M330.0,317.4L329.4,313.7L330.4,310.1L332.7,307.3L333.9,303.7L334.7,299.8L337.5,297.3L337.1,296.9L333.8,299.1L332.3,302.6L330.7,306.1L327.7,308.9L325.8,312.5L326.1,316.5Z"/><path d="M329.0,309.5L324.0,303.7"/><path d="M339.1,321.4L339.1,318.9L339.7,316.3L341.0,314.2L341.5,311.6L341.6,308.9L343.1,306.7L342.5,306.4L340.5,308.3L339.9,310.8L338.8,313.2L336.7,315.1L335.2,317.4L335.3,320.2Z"/><path d="M348.5,321.8L347.7,319.4L347.2,316.9L347.1,314.5L345.5,312.5L343.4,311.1L342.1,309.3L341.7,309.8L342.5,312.0L343.9,313.5L344.6,315.5L344.2,317.7L344.0,319.8L344.6,321.7Z"/><path d="M357.0,316.7L354.1,314.7L352.4,311.6L352.2,308.2L351.0,304.8L349.3,301.4L350.1,297.9L349.5,297.7L348.0,301.3L348.9,304.9L349.8,308.6L349.3,312.6L350.4,316.4L353.4,318.9Z"/><path d="M349.9,304.8L350.5,299.0"/><path d="M361.7,318.1L362.9,313.9L366.4,311.4L370.4,310.3L374.2,308.0L378.0,305.6L382.4,306.2L382.5,305.7L378.0,304.4L373.8,306.1L369.6,307.9L364.7,308.4L360.8,311.3L358.8,315.5Z"/><path d="M374.0,307.0L382.2,305.0"/><path d="M368.0,323.5L368.2,320.9L369.6,318.9L371.7,317.8L373.1,315.6L374.5,313.5L376.8,312.5L376.6,312.0L373.9,312.4L372.2,314.2L370.1,315.8L367.6,316.9L365.6,318.7L364.5,321.0Z"/><path d="M381.8,324.6L380.2,321.6L379.8,318.4L380.8,315.4L379.9,312.2L378.6,309.1L379.0,306.0L378.4,306.0L377.3,309.1L378.0,312.2L378.0,315.4L376.9,318.4L376.2,321.6L376.9,324.6Z"/><path d="M392.0,322.9L390.2,319.4L389.9,315.4L391.6,311.9L391.8,307.9L391.6,303.7L393.9,300.4L393.4,300.1L390.6,303.2L390.0,307.2L389.3,311.3L387.2,315.0L386.2,319.2L387.7,323.2Z"/><path d="M403.9,317.6L400.2,314.1L397.9,309.8L396.6,305.2L393.2,301.6L388.8,299.1L386.2,295.1L385.8,295.5L387.9,299.9L391.5,302.9L394.6,306.5L395.1,311.4L396.8,315.9L399.7,319.4Z"/><path d="M411.0,312.4L407.5,310.1L405.2,306.9L403.4,303.4L400.0,301.4L396.2,300.3L393.2,297.9L393.0,298.4L395.5,301.3L399.0,302.8L401.8,305.2L403.0,308.8L404.9,312.1L407.3,314.6Z"/><path d="M399.5,302.1L390.6,300.5"/><path d="M417.1,306.9L413.1,304.9L410.2,302.1L407.6,299.3L403.7,298.4L399.7,298.9L396.0,298.3L396.0,298.9L399.6,300.2L403.2,300.2L406.6,301.4L408.5,304.6L410.7,307.4L413.1,309.7Z"/><path d="M403.4,299.3L405.0,292.6"/><path d="M422.1,300.8L418.0,299.5L414.6,297.2L412.0,294.1L408.1,293.0L404.0,292.8L400.5,291.1L400.3,291.7L403.6,293.9L407.4,294.6L410.9,296.2L413.1,299.5L415.8,302.3L418.9,304.2Z"/><path d="M427.9,294.2L426.4,293.3L425.2,291.8L425.1,289.9L424.4,288.0L423.5,286.0L424.2,284.1L423.6,283.8L422.4,285.7L422.4,287.8L422.6,290.1L422.2,292.6L422.7,295.1L424.7,296.5Z"/><path d="M434.4,284.5L429.9,282.6L426.4,279.2L424.2,275.0L420.4,271.8L416.2,269.1L414.1,264.7L413.6,265.0L415.2,269.8L419.1,272.8L422.4,276.4L424.1,281.3L427.1,285.3L431.6,287.4Z"/><path d="M439.2,275.1L436.2,275.0L433.7,273.7L431.5,272.0L428.6,271.6L425.7,271.7L423.2,270.5L423.0,271.1L425.3,272.8L427.9,273.4L430.4,274.6L432.1,276.9L434.4,278.4L436.9,279.2Z"/><path d="M442.7,265.7L439.7,266.4L436.9,265.6L434.5,263.9L431.5,263.4L428.4,262.9L426.1,260.9L425.7,261.4L427.7,263.9L430.6,264.9L433.4,266.3L435.6,268.6L438.5,270.0L441.7,270.0Z"/><path d="M446.0,255.5L443.7,256.5L441.5,256.2L439.4,255.8L437.2,256.2L435.1,257.1L432.9,257.0L433.0,257.6L435.1,258.3L437.2,258.0L439.3,258.0L441.2,259.4L443.3,259.8L445.3,259.9Z"/><path d="M439.4,256.9L434.8,252.0"/><path d="M447.4,247.6L443.0,249.9L438.3,251.0L433.8,251.6L430.2,254.6L427.8,258.7L424.3,261.5L424.8,261.8L428.7,259.5L431.4,256.1L435.0,253.6L439.5,254.1L443.8,253.7L447.6,252.4Z"/><path d="M449.4,236.3L446.6,237.6L443.8,237.2L441.5,235.8L438.6,235.1L435.6,234.9L433.4,233.0L433.0,233.4L434.9,235.9L437.7,236.9L440.6,237.9L442.9,240.1L445.9,241.2L448.9,241.1Z"/><path d="M438.2,236.0L432.2,229.4"/><path d="M449.5,224.1L446.6,225.0L443.8,225.5L441.1,225.9L438.9,227.7L437.4,230.0L435.3,231.7L435.8,232.1L438.2,230.9L439.9,229.1L442.1,228.0L444.7,228.7L447.1,228.9L449.3,228.3Z"/><path d="M439.4,228.4L433.3,221.0"/><path d="M448.6,216.0L444.6,218.5L440.1,218.6L435.9,216.7L431.3,216.6L426.4,216.8L422.7,214.1L422.3,214.6L425.9,217.8L430.6,218.5L435.3,219.4L439.7,221.6L444.6,222.1L449.1,220.1Z"/><path d="M435.6,218.0L429.5,211.9"/><path d="M446.0,203.8L443.9,206.3L441.1,207.5L438.0,207.7L435.3,209.5L432.8,211.6L429.7,212.0L429.9,212.6L433.1,212.8L435.9,211.4L438.9,210.3L442.2,210.4L445.3,209.4L447.7,207.4Z"/><path d="M441.6,208.9L434.0,207.5"/><path d="M443.6,194.1L442.5,196.3L440.5,197.1L438.5,197.3L436.5,198.1L434.5,199.3L432.3,199.1L432.2,199.7L434.5,200.6L436.6,200.1L438.9,199.6L441.4,200.2L443.7,199.5L445.7,198.5Z"/><path d="M442.3,182.8L438.6,185.7L434.5,187.1L430.2,187.4L426.6,190.0L423.7,193.3L419.8,195.0L420.1,195.5L424.3,194.4L427.5,191.7L431.2,189.7L435.6,190.0L439.7,189.4L443.3,187.6Z"/><path d="M441.1,173.0L437.1,175.0L432.8,174.7L429.1,172.6L424.7,171.7L420.1,171.1L417.0,167.9L416.6,168.3L419.3,172.1L423.7,173.4L428.1,174.9L432.0,177.9L436.6,179.1L441.2,177.9Z"/><path d="M424.2,172.6L420.5,178.4"/><path d="M437.8,162.5L435.9,164.9L433.4,165.9L430.9,166.7L428.9,168.5L427.5,170.9L425.4,172.5L425.8,172.9L428.3,171.9L430.0,170.1L432.1,168.6L434.7,168.6L437.2,167.9L439.3,167.2Z"/><path d="M429.4,169.3L425.3,166.1"/><path d="M435.1,154.6L433.4,156.9L431.4,158.7L429.1,160.0L427.7,162.3L427.0,164.9L425.5,166.9L426.0,167.2L428.0,165.5L429.1,163.4L430.7,161.6L433.2,161.0L435.6,160.1L437.3,158.7Z"/><path d="M428.4,162.8L421.7,159.6"/><path d="M432.4,146.7L428.8,149.7L424.4,151.1L419.8,150.4L415.1,151.5L410.4,152.7L405.9,151.1L405.7,151.7L410.1,154.0L414.9,153.2L419.8,152.7L424.7,154.1L429.8,153.7L433.7,150.4Z"/><path d="M427.4,138.1L426.2,139.7L424.4,140.6L422.5,140.3L420.4,140.7L418.3,141.1L416.4,140.1L416.1,140.6L417.8,142.3L420.0,142.5L422.3,142.7L424.6,143.6L427.0,143.8L429.1,142.6Z"/><path d="M420.2,141.6L416.8,150.9"/><path d="M418.0,130.5L417.6,133.9L415.8,136.8L413.1,138.8L411.3,141.9L409.5,145.0L406.2,146.5L406.5,147.0L410.1,146.1L412.3,143.3L415.0,140.7L418.4,139.0L421.0,136.1L421.4,132.3Z"/><path d="M414.0,139.8L417.9,146.7"/><path d="M410.3,124.5L409.8,127.7L407.8,129.9L405.7,131.9L404.5,134.6L403.9,137.6L402.2,139.8L402.7,140.1L405.0,138.2L406.1,135.6L407.6,133.2L410.5,132.0L412.4,129.9L414.0,127.7Z"/><path d="M406.7,132.5L400.3,133.9"/><path d="M399.7,119.7L399.9,123.8L398.3,127.5L395.4,130.2L394.0,134.1L392.9,138.2L389.8,140.9L390.2,141.3L393.9,139.1L395.6,135.4L397.8,131.8L401.0,129.0L403.3,125.3L403.5,121.1Z"/><path d="M389.8,116.1L390.5,120.3L390.6,124.3L390.1,128.1L392.1,131.5L395.2,133.9L397.2,137.0L397.6,136.5L396.1,133.1L393.7,130.6L392.5,127.3L393.5,123.9L394.5,120.6L394.6,117.4Z"/><path d="M391.3,127.7L393.8,133.1"/><path d="M381.2,113.7L381.4,116.9L380.1,119.5L378.4,121.7L377.5,124.6L377.0,127.6L375.2,129.9L375.7,130.3L378.0,128.3L379.0,125.5L380.3,122.9L383.1,121.1L384.6,118.5L385.4,115.7Z"/><path d="M379.4,122.3L383.1,129.3"/><path d="M370.0,113.4L371.7,116.0L372.2,118.8L373.0,121.5L375.0,123.5L377.6,124.8L379.4,126.7L379.7,126.2L378.4,123.9L376.4,122.3L375.1,120.2L375.4,117.5L374.9,115.1L374.3,112.9Z"/><path d="M374.0,120.8L368.1,127.2"/><path d="M361.1,112.8L362.5,115.9L362.8,119.0L362.5,122.0L363.8,124.8L365.8,127.2L366.7,129.9L367.2,129.6L366.9,126.7L365.5,124.2L364.7,121.5L365.7,118.7L366.3,115.9L366.1,113.3Z"/><path d="M363.6,121.7L367.6,125.9"/></g><g stroke="#7a7a7a" stroke-width="8" fill="none" stroke-linecap="round"><path d="M362,114V150"/><path d="M352,134Q362,124 378,134"/></g><g stroke="#262626" stroke-width="2.5" fill="none" stroke-linecap="round"><path d="M362,114V152"/><path d="M352,134Q362,124 378,134"/><path d="M355,145Q365,138 375,146"/></g><path d="M366,268V322" stroke="#7a7a7a" stroke-width="8"/><path d="M366,272V322" stroke="#2a2a2a" stroke-width="2.2"/><path d="M352,290Q366,282 382,292" stroke="#3a3a3a" stroke-width="2" fill="none"/><rect x="280" y="110" width="175" height="220" filter="url(#nzb)"/><path d="M351.0,160.0C352.8,157.3 357.2,156.8 360.0,159.0C362.8,161.2 366.7,163.7 368.0,173.0C369.3,182.3 368.2,203.8 368.0,215.0C367.8,226.2 367.7,233.3 367.0,240.0C366.3,246.7 366.0,251.3 364.0,255.0C362.0,258.7 359.3,260.7 355.0,262.0C350.7,263.3 341.5,264.2 338.0,263.0C334.5,261.8 333.7,258.8 334.0,255.0C334.3,251.2 337.0,244.8 340.0,240.0C343.0,235.2 348.5,230.0 352.0,226.0C355.5,222.0 359.8,219.0 361.0,216.0C362.2,213.0 360.5,211.5 359.0,208.0C357.5,204.5 353.7,200.5 352.0,195.0C350.3,189.5 349.2,180.8 349.0,175.0C348.8,169.2 349.2,162.7 351.0,160.0Z" fill="#1c1c1c" stroke="#8a8a8a" stroke-width="2"/><path d="M374.0,172.6C376.8,168.4 384.4,165.7 387.8,164.8C391.2,163.9 393.5,165.7 394.7,167.4C395.9,169.1 395.3,172.1 395.0,175.0C394.7,177.9 394.4,180.2 393.0,184.7C391.6,189.2 388.8,197.1 386.9,202.0C385.0,206.9 381.8,209.4 381.7,214.3C381.6,219.2 384.1,226.1 386.0,231.6C387.9,237.1 391.6,242.4 393.0,247.3C394.4,252.2 395.3,258.2 394.7,261.2C394.1,264.2 391.5,265.5 389.5,265.5C387.5,265.5 385.1,263.2 382.5,261.0C379.9,258.8 375.8,257.7 373.9,252.5C372.0,247.3 371.5,240.4 371.0,230.0C370.5,219.6 370.5,199.6 371.0,190.0C371.5,180.4 371.2,176.8 374.0,172.6Z" fill="#1c1c1c" stroke="#8a8a8a" stroke-width="2"/></g></g><g filter="url(#b1b)"><g clip-path="url(#csagb)"><path d="M660.6,132.0C661.8,127.2 664.9,123.1 669.0,120.0C673.1,116.9 679.7,116.2 685.5,113.5C691.3,110.8 696.9,107.0 704.0,103.6C711.1,100.2 719.3,95.4 728.0,93.0C736.7,90.6 745.8,89.2 756.4,89.0C767.0,88.8 781.2,89.8 791.8,91.8C802.4,93.8 812.1,97.3 820.0,101.3C827.9,105.2 833.5,109.2 839.0,115.5C844.5,121.8 849.3,131.1 853.3,139.0C857.3,146.9 860.4,155.6 862.8,162.7C865.2,169.8 867.5,175.0 867.5,181.7C867.5,188.4 865.5,197.5 862.8,203.0C860.0,208.5 855.7,212.6 851.0,214.8C846.3,217.0 838.4,212.8 834.4,216.0C830.4,219.2 830.6,229.3 827.0,234.0C823.4,238.7 818.9,241.9 813.0,244.0C807.1,246.1 798.6,246.7 791.8,246.7C785.0,246.7 777.1,248.2 772.0,244.0C766.9,239.8 764.0,228.2 761.0,221.8C758.0,215.4 757.5,208.8 754.0,205.3C750.5,201.8 744.1,200.6 739.8,200.6C735.5,200.6 732.7,204.5 728.0,205.3C723.3,206.1 715.4,207.7 711.5,205.3C707.6,202.9 706.8,194.9 704.4,191.0C702.0,187.1 701.3,184.4 697.0,181.7C692.7,179.0 683.5,177.4 678.4,174.6C673.3,171.8 669.3,169.3 666.5,165.0C663.7,160.7 662.8,154.1 661.8,148.6C660.8,143.1 659.4,136.8 660.6,132.0Z" fill="#acacac"/><path d="M655,150 Q662,118 700,104 Q740,86 790,90 Q835,98 855,135 Q868,165 866,200" stroke="#3c3c3c" stroke-width="26" fill="none" opacity="0.45" filter="url(#b2b)"/><path d="M660.6,132.0C661.8,127.2 664.9,123.1 669.0,120.0C673.1,116.9 679.7,116.2 685.5,113.5C691.3,110.8 696.9,107.0 704.0,103.6C711.1,100.2 719.3,95.4 728.0,93.0C736.7,90.6 745.8,89.2 756.4,89.0C767.0,88.8 781.2,89.8 791.8,91.8C802.4,93.8 812.1,97.3 820.0,101.3C827.9,105.2 833.5,109.2 839.0,115.5C844.5,121.8 849.3,131.1 853.3,139.0C857.3,146.9 860.4,155.6 862.8,162.7C865.2,169.8 867.5,175.0 867.5,181.7C867.5,188.4 865.5,197.5 862.8,203.0C860.0,208.5 855.7,212.6 851.0,214.8C846.3,217.0 838.4,212.8 834.4,216.0C830.4,219.2 830.6,229.3 827.0,234.0C823.4,238.7 818.9,241.9 813.0,244.0C807.1,246.1 798.6,246.7 791.8,246.7C785.0,246.7 777.1,248.2 772.0,244.0C766.9,239.8 764.0,228.2 761.0,221.8C758.0,215.4 757.5,208.8 754.0,205.3C750.5,201.8 744.1,200.6 739.8,200.6C735.5,200.6 732.7,204.5 728.0,205.3C723.3,206.1 715.4,207.7 711.5,205.3C707.6,202.9 706.8,194.9 704.4,191.0C702.0,187.1 701.3,184.4 697.0,181.7C692.7,179.0 683.5,177.4 678.4,174.6C673.3,171.8 669.3,169.3 666.5,165.0C663.7,160.7 662.8,154.1 661.8,148.6C660.8,143.1 659.4,136.8 660.6,132.0Z" fill="none" stroke="#505050" stroke-width="9"/><g stroke="#666666" stroke-linecap="round" stroke-linejoin="round" fill="none"><path d="M661.2,124.6L664.9,127.0L667.2,130.8L668.5,135.1L671.3,138.6L673.9,142.2L674.2,146.7" stroke-width="6.9"/><path d="M671.3,138.6L676.4,138.7" stroke-width="4.9"/><path d="M670.2,116.4L671.7,119.1L671.7,122.1L671.0,125.1L671.4,128.2L671.6,131.3L670.2,134.0" stroke-width="6.2"/><path d="M671.7,122.1L679.6,128.0" stroke-width="4.9"/><path d="M678.6,113.4L681.5,116.4L682.4,120.4L682.1,124.5L683.1,128.6L683.5,132.7L681.6,136.3" stroke-width="5.8"/><path d="M683.1,128.6L691.4,130.7" stroke-width="4.9"/><path d="M687.7,109.6L690.3,111.6L691.6,114.6L692.3,117.9L694.1,120.6L695.9,123.4L696.0,126.7" stroke-width="6.7"/><path d="M694.6,105.7L696.5,108.5L697.2,111.8L697.4,115.1L699.1,118.0L701.0,120.8L701.4,124.1" stroke-width="7.0"/><path d="M702.9,101.4L705.2,104.1L705.9,107.6L705.7,111.2L706.8,114.6L707.7,118.0L706.6,121.4" stroke-width="6.0"/><path d="M706.8,114.6L712.8,117.4" stroke-width="4.9"/><path d="M711.1,97.3L713.1,98.7L714.3,101.0L715.1,103.4L716.6,105.4L718.1,107.4L718.4,110.0" stroke-width="7.3"/><path d="M718.6,93.7L721.5,95.7L722.9,98.9L723.3,102.3L724.8,105.4L725.9,108.7L725.0,112.0" stroke-width="7.8"/><path d="M723.3,102.3L723.4,111.5" stroke-width="4.9"/><path d="M728.3,90.3L729.2,93.8L728.2,97.2L726.4,100.2L725.7,103.7L724.7,107.1L722.0,109.4" stroke-width="6.0"/><path d="M725.7,103.7L731.2,108.8" stroke-width="4.9"/><path d="M736.9,88.4L738.4,90.5L738.6,93.0L738.3,95.6L738.9,98.1L739.3,100.6L738.3,103.0" stroke-width="6.6"/><path d="M746.5,87.0L747.3,90.6L746.4,94.1L744.8,97.4L744.6,101.0L744.2,104.6L742.0,107.5" stroke-width="7.5"/><path d="M744.6,101.0L738.6,106.7" stroke-width="4.9"/><path d="M755.2,86.5L757.0,90.7L756.5,95.2L754.8,99.4L754.7,104.0L754.1,108.5L751.2,112.0" stroke-width="7.9"/><path d="M766.7,86.6L767.2,90.8L765.7,94.7L763.4,98.2L762.5,102.2L761.4,106.3L758.4,109.2" stroke-width="7.4"/><path d="M776.7,87.3L777.3,89.9L776.7,92.6L775.6,95.2L775.6,97.9L775.5,100.7L774.0,103.0" stroke-width="6.0"/><path d="M776.7,92.6L773.3,96.5" stroke-width="4.9"/><path d="M784.5,88.1L784.8,91.4L783.7,94.6L782.0,97.5L781.7,100.8L781.3,104.2L779.4,106.9" stroke-width="7.9"/><path d="M783.7,94.6L777.9,99.8" stroke-width="4.9"/><path d="M794.5,89.8L793.7,93.6L791.2,96.5L788.0,98.8L785.7,101.9L783.2,104.9L779.5,106.1" stroke-width="8.3"/><path d="M803.5,92.1L802.7,95.3L801.2,98.2L799.7,101.1L800.3,104.3L801.4,107.4L801.6,110.7" stroke-width="6.8"/><path d="M799.7,101.1L792.9,101.5" stroke-width="4.9"/><path d="M813.7,95.7L813.0,100.4L810.7,104.6L808.3,108.7L808.2,113.5L808.6,118.2L807.3,122.8" stroke-width="6.9"/><path d="M808.2,113.5L803.5,115.7" stroke-width="4.9"/><path d="M825.1,101.2L824.3,104.5L822.3,107.2L819.9,109.5L818.7,112.7L817.4,115.8L814.9,118.1" stroke-width="7.0"/><path d="M832.1,105.7L829.5,109.5L825.3,111.5L820.8,112.4L816.7,114.6L812.4,116.3L807.8,115.4" stroke-width="6.6"/><path d="M840.1,113.0L839.5,115.6L837.8,117.7L835.8,119.6L834.8,122.0L833.8,124.5L831.7,126.3" stroke-width="7.5"/><path d="M847.1,122.5L843.4,125.2L838.9,126.3L834.3,126.8L830.4,129.3L826.6,131.9L822.0,132.6" stroke-width="7.8"/><path d="M852.6,132.1L850.3,134.9L847.3,136.8L844.3,138.8L842.7,142.0L841.6,145.4L839.4,148.2" stroke-width="7.7"/><path d="M847.3,136.8L846.7,141.9" stroke-width="4.9"/><path d="M857.4,141.7L852.9,143.7L847.9,143.5L843.2,142.2L838.2,142.8L833.3,143.1L828.8,141.0" stroke-width="6.4"/><path d="M861.6,151.9L858.6,154.5L855.0,156.0L851.3,157.5L849.0,160.7L847.1,164.2L844.1,166.9" stroke-width="7.7"/><path d="M864.4,159.8L861.8,162.1L858.5,163.1L855.0,163.5L852.0,165.2L849.0,166.9L845.5,167.0" stroke-width="7.0"/><path d="M867.1,167.5L864.2,170.3L860.4,171.6L856.5,172.3L853.2,174.6L850.0,176.8L846.0,177.4" stroke-width="6.1"/><path d="M869.8,177.9L867.3,178.7L864.8,178.8L862.2,178.9L860.1,180.3L858.3,182.1L856.0,183.3" stroke-width="5.7"/><path d="M869.3,189.7L866.6,189.3L864.4,187.8L862.5,185.8L860.0,184.7L857.5,183.5L856.0,181.2" stroke-width="6.6"/><path d="M862.5,185.8L860.9,179.1" stroke-width="4.9"/><path d="M867.6,197.4L864.3,197.8L861.2,196.7L858.3,195.1L855.1,194.8L851.8,194.4L849.1,192.5" stroke-width="5.7"/><path d="M861.2,196.7L853.4,202.5" stroke-width="4.9"/><path d="M862.6,208.2L859.4,207.3L856.8,205.4L854.3,203.3L851.1,202.6L847.9,202.3L845.0,200.8" stroke-width="8.0"/><path d="M853.9,216.1L850.7,214.2L848.8,210.9L847.7,207.2L845.5,204.1L843.6,200.8L843.7,197.0" stroke-width="5.8"/><path d="M847.7,207.2L848.8,201.5" stroke-width="4.9"/><path d="M843.0,217.6L842.3,214.5L842.7,211.3L843.2,208.1L842.1,205.2L840.6,202.3L840.2,199.1" stroke-width="7.6"/><path d="M731.6,206.8L730.5,204.7L730.6,202.3L731.3,199.9L731.2,197.5L731.4,195.1L732.8,193.1" stroke-width="7.5"/><path d="M722.8,208.7L720.0,205.2L719.3,200.9L719.7,196.5L718.6,192.2L717.8,187.8L719.6,183.8" stroke-width="6.1"/><path d="M719.7,196.5L711.1,191.4" stroke-width="4.9"/><path d="M711.8,208.2L712.3,205.7L713.9,203.7L715.8,202.1L716.9,199.8L718.0,197.5L720.1,196.1" stroke-width="7.7"/><path d="M705.3,200.4L709.4,197.5L714.1,195.9L718.9,194.3L722.0,190.4L724.6,186.1L728.4,182.9" stroke-width="7.6"/><path d="M700.9,189.9L703.3,186.5L706.8,184.4L710.6,182.8L713.3,179.7L715.9,176.5L719.6,174.8" stroke-width="6.7"/><path d="M693.3,182.6L694.4,179.7L696.3,177.3L698.2,174.9L698.6,171.8L698.5,168.7L699.3,165.7" stroke-width="5.9"/><path d="M686.4,180.3L686.1,177.1L686.7,174.0L687.4,170.9L686.2,167.9L684.7,165.1L684.2,161.9" stroke-width="8.3"/><path d="M676.2,176.2L677.6,173.6L679.6,171.3L681.6,169.0L681.9,166.0L681.7,163.0L682.3,160.1" stroke-width="8.4"/><path d="M681.9,166.0L681.5,160.3" stroke-width="4.9"/><path d="M668.0,170.6L669.4,167.4L671.9,164.9L674.5,162.7L675.7,159.4L676.7,156.0L678.8,153.3" stroke-width="6.9"/><path d="M671.9,164.9L672.4,155.7" stroke-width="4.9"/><path d="M661.6,160.0L663.5,157.7L666.2,156.8L669.1,156.6L671.8,155.6L674.6,154.8L677.3,155.8" stroke-width="7.0"/><path d="M659.2,148.5L662.4,147.6L665.7,148.4L668.6,149.9L671.9,150.3L675.1,151.1L677.5,153.4" stroke-width="6.7"/><path d="M668.6,149.9L672.6,144.9" stroke-width="4.9"/><path d="M657.7,137.3L662.1,136.5L666.4,137.6L670.6,139.1L675.0,138.7L679.4,138.2L683.7,139.6" stroke-width="7.3"/></g><g fill="#222222" stroke="#222222" stroke-width="0.6" stroke-linejoin="round"><path d="M659.2,126.4L663.5,128.1L665.8,131.7L667.2,135.8L670.4,139.0L673.2,142.4L673.9,146.7L674.5,146.6L674.5,142.0L672.3,138.2L669.8,134.4L668.6,129.9L666.4,125.9L663.2,122.9Z"/><path d="M671.3,138.6L676.4,138.7"/><path d="M668.1,116.8L669.5,119.3L670.2,122.2L669.6,125.1L670.5,128.1L671.1,131.1L670.0,133.9L670.5,134.1L672.2,131.4L672.4,128.3L672.4,125.2L673.2,122.1L673.9,118.8L672.3,115.9Z"/><path d="M671.7,122.1L679.6,128.0"/><path d="M676.4,114.6L679.3,117.1L680.6,120.7L680.8,124.6L682.1,128.5L682.9,132.5L681.3,136.2L681.8,136.4L684.1,132.8L684.0,128.7L683.4,124.5L684.2,120.0L683.7,115.6L680.9,112.2Z"/><path d="M683.1,128.6L691.4,130.7"/><path d="M685.9,110.8L688.5,112.7L690.2,115.4L691.1,118.4L693.1,120.9L695.2,123.6L695.7,126.7L696.3,126.6L696.5,123.2L695.2,120.2L693.5,117.4L693.0,113.9L692.0,110.6L689.5,108.3Z"/><path d="M692.2,106.5L694.5,109.2L695.4,112.4L696.3,115.5L698.3,118.3L700.3,121.0L701.2,124.2L701.7,123.9L701.6,120.5L700.0,117.6L698.6,114.7L698.9,111.2L698.5,107.8L697.0,105.0Z"/><path d="M700.8,102.3L703.3,104.7L704.2,108.0L704.2,111.4L705.9,114.6L707.0,118.0L706.3,121.4L706.9,121.5L708.3,118.1L707.8,114.5L707.2,111.0L707.5,107.2L707.0,103.5L705.0,100.4Z"/><path d="M706.8,114.6L712.8,117.4"/><path d="M708.9,99.0L711.6,99.8L713.0,101.7L713.7,104.1L715.7,105.8L717.5,107.7L718.2,110.1L718.7,109.9L718.7,107.2L717.6,105.0L716.4,102.7L715.6,100.2L714.7,97.6L713.2,95.6Z"/><path d="M717.0,95.0L719.7,96.7L721.2,99.6L722.1,102.6L723.8,105.5L725.2,108.7L724.7,112.0L725.3,112.1L726.6,108.7L725.8,105.3L724.5,102.0L724.6,98.2L723.2,94.7L720.3,92.4Z"/><path d="M723.3,102.3L723.4,111.5"/><path d="M725.6,90.2L727.2,93.5L726.6,96.7L725.1,99.7L724.9,103.2L724.2,106.7L721.8,109.2L722.2,109.6L725.2,107.5L726.6,104.2L727.7,100.8L729.8,97.6L731.2,94.1L731.0,90.4Z"/><path d="M725.7,103.7L731.2,108.8"/><path d="M734.4,89.2L736.4,90.9L736.8,93.3L736.9,95.7L737.8,98.0L738.6,100.5L738.0,103.0L738.6,103.1L739.9,100.7L739.9,98.2L739.7,95.5L740.4,92.8L740.3,90.1L739.4,87.6Z"/><path d="M744.3,86.9L745.1,90.3L744.7,93.8L743.5,97.0L743.7,100.7L743.6,104.3L741.8,107.4L742.3,107.7L744.8,104.8L745.4,101.3L746.2,97.7L748.1,94.4L749.6,90.9L748.8,87.2Z"/><path d="M744.6,101.0L738.6,106.7"/><path d="M752.6,86.8L754.9,90.7L754.6,95.0L753.4,99.1L753.7,103.7L753.5,108.2L750.9,111.8L751.4,112.1L754.7,108.8L755.6,104.3L756.3,99.8L758.4,95.4L759.2,90.7L757.8,86.2Z"/><path d="M764.5,86.3L765.0,90.2L764.0,94.1L762.1,97.6L761.6,101.8L760.8,105.9L758.1,109.0L758.6,109.4L761.9,106.6L763.3,102.7L764.7,98.7L767.3,95.2L769.3,91.3L768.8,87.0Z"/><path d="M774.5,87.1L775.2,89.7L775.0,92.4L774.4,94.9L774.6,97.7L774.9,100.5L773.8,102.9L774.3,103.1L776.1,100.9L776.5,98.2L776.8,95.4L778.5,92.9L779.5,90.2L778.9,87.4Z"/><path d="M776.7,92.6L773.3,96.5"/><path d="M782.3,87.7L782.6,90.9L782.2,94.2L780.7,97.1L780.8,100.5L780.7,103.9L779.2,106.8L779.7,107.1L781.9,104.4L782.6,101.1L783.3,97.9L785.1,95.0L787.0,91.9L786.7,88.5Z"/><path d="M783.7,94.6L777.9,99.8"/><path d="M792.4,88.7L791.9,92.4L789.8,95.4L787.1,97.8L785.2,101.2L782.9,104.3L779.4,105.8L779.7,106.4L783.6,105.5L786.3,102.7L788.9,99.7L792.5,97.7L795.5,94.8L796.5,90.9Z"/><path d="M801.6,91.0L800.7,94.5L799.5,97.8L798.5,101.1L799.2,104.5L800.7,107.6L801.3,110.8L801.8,110.5L802.0,107.2L801.3,104.2L801.0,101.2L802.9,98.5L804.6,96.0L805.3,93.2Z"/><path d="M799.7,101.1L792.9,101.5"/><path d="M811.3,94.5L811.0,99.7L809.1,104.2L807.0,108.5L807.1,113.4L808.0,118.2L807.0,122.8L807.6,122.8L809.3,118.3L809.3,113.6L809.5,109.0L812.3,105.1L814.9,101.1L816.1,96.9Z"/><path d="M808.2,113.5L803.5,115.7"/><path d="M823.1,100.1L822.6,103.4L821.0,106.4L818.8,108.8L817.8,112.1L816.9,115.4L814.7,117.9L815.2,118.2L818.0,116.2L819.6,113.3L821.0,110.2L823.6,107.9L826.1,105.5L827.0,102.2Z"/><path d="M830.7,104.1L828.5,108.0L824.7,110.1L820.3,111.0L816.5,113.6L812.4,115.6L807.9,115.1L807.8,115.7L812.4,117.0L816.9,115.6L821.2,113.7L826.0,113.0L830.5,111.1L833.4,107.3Z"/><path d="M838.0,111.7L837.9,114.7L836.3,116.8L834.8,118.9L834.0,121.5L833.2,124.1L831.5,126.1L832.0,126.4L834.3,124.9L835.6,122.6L836.9,120.3L839.3,118.7L841.1,116.6L842.3,114.3Z"/><path d="M846.3,120.1L842.7,123.2L838.3,124.6L833.9,125.6L830.0,128.3L826.4,131.3L821.9,132.3L822.2,132.9L826.9,132.5L830.8,130.3L834.8,128.1L839.6,128.1L844.2,127.3L848.0,124.8Z"/><path d="M851.1,130.0L848.8,133.1L845.9,135.5L843.2,137.9L841.8,141.5L841.0,145.1L839.1,148.1L839.6,148.3L842.1,145.7L843.5,142.5L845.3,139.6L848.7,138.1L851.8,136.6L854.0,134.2Z"/><path d="M847.3,136.8L846.7,141.9"/><path d="M857.1,139.6L852.7,141.5L847.9,141.9L843.2,140.8L838.4,141.7L833.4,142.5L828.9,140.7L828.8,141.3L833.2,143.8L838.1,143.9L843.1,143.6L847.9,145.0L853.0,146.0L857.7,143.8Z"/><path d="M860.6,149.6L857.7,152.9L854.0,154.8L850.4,156.6L848.3,160.1L846.6,163.9L843.9,166.7L844.4,167.0L847.6,164.5L849.7,161.3L852.2,158.5L855.9,157.3L859.5,156.0L862.6,154.2Z"/><path d="M863.4,157.6L860.9,160.0L857.9,161.5L854.6,162.3L851.7,164.2L848.8,166.3L845.4,166.7L845.6,167.3L849.2,167.5L852.3,166.2L855.4,164.6L859.1,164.6L862.7,164.2L865.5,161.9Z"/><path d="M866.1,165.5L863.3,168.3L859.7,170.0L856.0,171.2L852.9,173.7L849.7,176.3L845.9,177.1L846.1,177.7L850.2,177.4L853.6,175.4L857.0,173.4L861.2,173.1L865.2,172.2L868.1,169.5Z"/><path d="M869.7,175.8L867.0,176.6L864.3,177.2L861.6,177.5L859.6,179.5L857.9,181.6L855.8,183.1L856.2,183.5L858.7,182.6L860.6,181.2L862.8,180.2L865.2,180.3L867.7,180.8L869.8,180.1Z"/><path d="M870.2,187.7L867.5,187.7L865.4,186.2L863.3,184.7L860.6,183.8L857.9,183.0L856.2,181.0L855.8,181.4L857.1,183.9L859.3,185.5L861.7,186.9L863.4,189.4L865.7,191.0L868.4,191.8Z"/><path d="M862.5,185.8L860.9,179.1"/><path d="M868.0,194.7L864.7,195.9L861.6,195.3L858.8,193.7L855.4,193.9L852.0,193.8L849.3,192.2L849.0,192.7L851.6,194.9L854.8,195.7L857.9,196.6L860.8,198.2L863.9,199.7L867.2,200.0Z"/><path d="M861.2,196.7L853.4,202.5"/><path d="M864.0,206.0L860.6,205.3L857.5,203.9L854.8,202.0L851.4,201.7L848.0,201.7L845.0,200.5L844.9,201.1L847.7,202.9L850.8,203.5L853.8,204.5L856.1,206.8L858.3,209.3L861.1,210.5Z"/><path d="M855.8,214.4L852.4,212.9L850.1,210.1L849.0,206.6L846.4,203.8L844.2,200.7L844.0,197.0L843.4,197.1L842.9,201.0L844.6,204.4L846.4,207.8L847.5,211.6L848.9,215.4L852.1,217.8Z"/><path d="M847.7,207.2L848.8,201.5"/><path d="M845.7,217.8L844.1,214.5L844.5,211.1L844.6,207.9L843.1,204.9L841.2,202.1L840.5,199.0L840.0,199.3L840.0,202.5L841.1,205.4L841.9,208.4L840.9,211.5L840.5,214.5L840.3,217.4Z"/><path d="M734.0,206.4L732.7,204.5L732.4,202.3L732.6,200.1L732.2,197.8L731.9,195.3L733.0,193.3L732.5,193.0L730.8,194.9L730.2,197.2L730.0,199.7L728.8,202.2L728.2,204.8L729.2,207.3Z"/><path d="M725.0,207.7L722.1,204.6L721.1,200.6L721.1,196.4L719.5,192.2L718.5,187.9L719.9,183.8L719.3,183.7L717.2,187.7L717.6,192.2L718.2,196.6L717.5,201.2L718.0,205.8L720.6,209.6Z"/><path d="M719.7,196.5L711.1,191.4"/><path d="M713.8,209.3L714.0,206.7L715.3,204.7L717.0,202.9L717.7,200.4L718.5,197.9L720.3,196.3L719.9,195.8L717.6,197.1L716.1,199.1L714.6,201.2L712.5,202.8L710.6,204.7L709.7,207.0Z"/><path d="M706.1,202.7L710.4,199.5L715.0,197.2L719.7,195.3L722.7,191.0L725.1,186.5L728.7,183.1L728.2,182.8L724.1,185.7L721.3,189.8L718.0,193.3L713.2,194.5L708.4,195.5L704.6,198.2Z"/><path d="M702.2,191.6L704.6,188.2L707.9,185.9L711.5,183.9L713.9,180.5L716.3,177.0L719.8,175.1L719.5,174.6L715.5,176.1L712.6,178.8L709.7,181.6L705.7,183.0L701.9,184.8L699.5,188.1Z"/><path d="M694.9,183.9L696.0,180.7L697.9,178.0L699.6,175.3L699.5,172.0L699.1,168.7L699.6,165.7L699.0,165.8L697.8,168.7L697.7,171.7L696.9,174.5L694.7,176.6L692.8,178.8L691.6,181.3Z"/><path d="M688.8,180.8L688.1,177.3L688.2,173.9L688.7,170.6L687.3,167.6L685.3,164.8L684.4,161.8L683.9,162.1L684.2,165.3L685.2,168.2L686.0,171.1L685.2,174.1L684.2,177.0L684.1,179.8Z"/><path d="M677.9,177.9L679.1,174.6L681.0,172.0L682.8,169.4L682.8,166.1L682.3,163.0L682.6,160.0L682.0,160.1L681.0,163.0L681.0,165.9L680.3,168.7L678.2,170.6L676.1,172.5L674.5,174.5Z"/><path d="M681.9,166.0L681.5,160.3"/><path d="M669.8,172.2L670.9,168.6L673.3,165.9L675.6,163.3L676.5,159.8L677.3,156.3L679.1,153.4L678.6,153.2L676.1,155.7L674.9,159.0L673.4,162.0L670.4,164.0L667.9,166.3L666.2,169.1Z"/><path d="M671.9,164.9L672.4,155.7"/><path d="M662.9,161.8L664.4,159.7L666.7,158.3L669.3,157.9L671.8,156.5L674.5,155.5L677.2,156.1L677.4,155.5L674.6,154.2L671.7,154.6L668.8,155.3L665.7,155.2L662.5,155.8L660.4,158.1Z"/><path d="M659.2,151.0L662.2,149.9L665.3,149.9L668.2,151.2L671.5,151.2L674.8,151.6L677.3,153.6L677.7,153.1L675.4,150.5L672.3,149.5L669.0,148.6L666.0,146.9L662.7,145.4L659.3,146.0Z"/><path d="M668.6,149.9L672.6,144.9"/><path d="M657.4,139.6L661.8,138.6L666.2,139.1L670.4,140.4L674.9,139.8L679.4,138.8L683.6,139.9L683.7,139.3L679.5,137.6L675.1,137.7L670.7,137.9L666.6,136.1L662.3,134.5L657.9,134.9Z"/></g><ellipse cx="798" cy="224" rx="36" ry="22" fill="#8a8a8a" filter="url(#b2b)"/><g stroke="#6a6a6a" stroke-width="1.2" fill="none"><path d="M805.0,224.6L830.8,226.4"/><path d="M804.4,226.2L828.6,232.9"/><path d="M803.3,227.7L823.9,238.7"/><path d="M801.7,228.8L817.1,243.4"/><path d="M799.7,229.6L808.7,246.5"/><path d="M797.6,230.0L799.4,247.9"/><path d="M795.3,229.9L789.9,247.5"/><path d="M793.2,229.3L781.0,245.2"/><path d="M791.4,228.3L773.4,241.2"/><path d="M790.1,227.0L767.5,236.0"/><path d="M789.2,225.4L764.0,229.7"/></g><path d="M702,192 Q720,186 735,190 T765,194 Q790,198 808,196 T856,208" stroke="#6a6a6a" stroke-width="7" fill="none"/><path d="M702,192 Q720,186 735,190 T765,194 Q790,198 808,196 T856,208" stroke="#303030" stroke-width="2.4" fill="none"/><path d="M748,180 Q770,172 790,178 T832,184" stroke="#6e6e6e" stroke-width="5" fill="none"/><path d="M748,180 Q770,172 790,178 T832,184" stroke="#383838" stroke-width="1.8" fill="none"/><ellipse cx="742" cy="172" rx="20" ry="10" fill="#8a8a8a" filter="url(#b2b)"/><ellipse cx="728" cy="192" rx="28" ry="11" fill="#6a6a6a" filter="url(#b2b)"/><ellipse cx="690" cy="140" rx="22" ry="20" fill="#7a7a7a" opacity="0.5" filter="url(#b2b)"/><g stroke="#3a3a3a" stroke-width="1.8" fill="none"><path d="M712,195Q725,188 745,193"/><path d="M760,182Q770,178 778,186"/><path d="M735,202Q750,198 760,204"/><path d="M815,182q6,-4 10,2"/><path d="M838,176q5,3 3,9"/></g><ellipse cx="775" cy="212" rx="85" ry="34" fill="#303030" opacity="0.35" filter="url(#b2b)"/><path d="M725,206 Q745,198 765,212" stroke="#1a1a1a" stroke-width="5" fill="none"/><rect x="655" y="85" width="220" height="170" filter="url(#nzb)"/><path d="M779.0,147.0C780.7,142.8 787.8,142.2 792.0,142.0C796.2,141.8 801.2,143.2 804.0,146.0C806.8,148.8 809.0,154.8 809.0,159.0C809.0,163.2 807.0,168.3 804.0,171.0C801.0,173.7 794.7,175.7 791.0,175.0C787.3,174.3 784.0,171.7 782.0,167.0C780.0,162.3 777.3,151.2 779.0,147.0Z" fill="#141414"/></g></g><g filter="url(#b1b)"><g clip-path="url(#ccorb)"><path d="M751.2,440.7C753.5,441.2 756.0,442.8 757.3,445.3C758.6,447.9 757.9,456.0 758.9,456.0C759.9,456.0 761.7,447.6 763.5,445.3C765.3,443.0 767.1,441.7 769.6,442.2C772.1,442.7 774.7,444.3 778.8,448.4C782.9,452.5 788.9,461.3 794.0,466.7C799.1,472.1 805.8,476.9 809.4,480.5C813.0,484.1 814.7,484.6 815.5,488.2C816.3,491.8 815.0,497.4 814.0,502.0C813.0,506.6 812.2,512.4 809.4,515.7C806.6,519.0 801.6,520.2 797.0,521.8C792.4,523.3 785.1,523.5 781.8,525.0C778.5,526.5 779.2,530.5 777.2,531.0C775.2,531.5 772.7,528.8 769.6,528.0C766.5,527.2 764.5,526.9 758.9,526.4C753.3,525.9 742.4,526.0 736.0,525.0C729.6,524.0 725.2,521.8 720.6,520.3C716.0,518.8 712.0,518.2 708.4,515.7C704.8,513.2 701.0,509.1 699.2,505.0C697.4,500.9 697.2,496.3 697.7,491.2C698.2,486.1 699.7,479.2 702.2,474.4C704.8,469.5 708.1,466.2 713.0,462.1C717.9,458.0 726.2,453.2 731.3,449.9C736.4,446.6 740.3,443.7 743.6,442.2C746.9,440.7 748.9,440.2 751.2,440.7Z" fill="#b0b0b0"/><path d="M751.2,440.7C753.5,441.2 756.0,442.8 757.3,445.3C758.6,447.9 757.9,456.0 758.9,456.0C759.9,456.0 761.7,447.6 763.5,445.3C765.3,443.0 767.1,441.7 769.6,442.2C772.1,442.7 774.7,444.3 778.8,448.4C782.9,452.5 788.9,461.3 794.0,466.7C799.1,472.1 805.8,476.9 809.4,480.5C813.0,484.1 814.7,484.6 815.5,488.2C816.3,491.8 815.0,497.4 814.0,502.0C813.0,506.6 812.2,512.4 809.4,515.7C806.6,519.0 801.6,520.2 797.0,521.8C792.4,523.3 785.1,523.5 781.8,525.0C778.5,526.5 779.2,530.5 777.2,531.0C775.2,531.5 772.7,528.8 769.6,528.0C766.5,527.2 764.5,526.9 758.9,526.4C753.3,525.9 742.4,526.0 736.0,525.0C729.6,524.0 725.2,521.8 720.6,520.3C716.0,518.8 712.0,518.2 708.4,515.7C704.8,513.2 701.0,509.1 699.2,505.0C697.4,500.9 697.2,496.3 697.7,491.2C698.2,486.1 699.7,479.2 702.2,474.4C704.8,469.5 708.1,466.2 713.0,462.1C717.9,458.0 726.2,453.2 731.3,449.9C736.4,446.6 740.3,443.7 743.6,442.2C746.9,440.7 748.9,440.2 751.2,440.7Z" fill="none" stroke="#666666" stroke-width="6"/><g stroke="#686868" stroke-linecap="round" stroke-linejoin="round" fill="none"><path d="M754.7,439.4L753.2,441.5L752.5,444.1L750.8,446.1L748.5,447.5L747.0,449.6L745.7,451.9" stroke-width="11.3"/><path d="M748.5,447.5L749.3,453.2" stroke-width="7.0"/><path d="M760.5,449.0L758.0,449.9L755.8,451.5L753.1,451.8L750.5,451.0L747.8,451.2L745.1,451.6" stroke-width="11.7"/><path d="M753.1,451.8L746.2,448.0" stroke-width="7.0"/><path d="M758.1,452.2L760.0,452.8L761.9,452.3L764.0,452.1L766.0,452.2L767.6,451.1L768.8,449.4" stroke-width="10.3"/><path d="M764.1,441.1L765.6,442.9L767.4,444.3L768.1,446.5L767.9,448.7L768.3,451.0L768.7,453.2" stroke-width="10.3"/><path d="M767.9,448.7L777.8,448.7" stroke-width="7.0"/><path d="M775.0,441.9L773.8,443.5L773.3,445.4L772.0,446.9L770.2,447.9L769.0,449.4L767.9,451.1" stroke-width="8.5"/><path d="M781.1,447.2L779.0,448.9L777.7,451.2L775.5,452.8L773.0,453.6L771.1,455.4L769.4,457.6" stroke-width="11.8"/><path d="M787.8,455.3L785.7,456.5L783.9,458.0L781.6,458.3L779.4,457.5L777.0,457.2L774.7,457.0" stroke-width="11.5"/><path d="M792.9,461.7L789.1,463.6L786.6,467.1L783.2,469.7L779.4,471.5L777.1,475.1L775.9,479.2" stroke-width="11.2"/><path d="M797.7,466.8L795.6,468.6L794.8,471.1L793.3,473.3L791.6,475.3L791.3,478.0L791.9,480.6" stroke-width="10.4"/><path d="M803.7,472.2L801.7,474.0L800.8,476.5L799.2,478.6L797.2,480.3L796.3,482.8L796.1,485.4" stroke-width="8.4"/><path d="M809.0,476.7L807.1,479.7L806.6,483.1L804.8,486.1L802.2,488.4L800.9,491.6L800.2,495.1" stroke-width="11.8"/><path d="M817.1,485.2L813.3,485.7L810.4,488.1L806.9,489.7L803.3,491.0L801.1,494.1L800.1,497.8" stroke-width="9.3"/><path d="M818.0,494.2L814.0,493.9L810.2,494.7L806.4,493.5L803.5,490.7L799.9,489.1L796.2,487.7" stroke-width="10.5"/><path d="M803.5,490.7L797.8,486.5" stroke-width="7.0"/><path d="M816.2,503.5L813.6,502.2L810.7,501.9L808.2,500.4L806.3,498.1L803.7,496.7L800.9,495.7" stroke-width="11.0"/><path d="M814.3,511.7L810.9,509.4L807.1,508.1L804.5,505.0L803.5,501.1L801.3,497.7L798.9,494.4" stroke-width="11.5"/><path d="M807.1,508.1L801.7,509.5" stroke-width="7.0"/><path d="M808.2,520.0L806.5,518.4L804.3,517.6L802.7,516.0L801.6,513.9L799.8,512.5L797.8,511.5" stroke-width="8.2"/><path d="M804.3,517.6L795.4,517.2" stroke-width="7.0"/><path d="M799.3,523.7L799.0,519.9L796.7,516.9L794.9,513.5L793.6,509.9L790.3,508.0L786.5,507.4" stroke-width="9.9"/><path d="M788.0,526.1L787.4,524.4L786.0,523.2L784.9,521.8L784.0,520.2L782.4,519.4L780.6,519.1" stroke-width="9.4"/><path d="M782.8,527.3L780.8,525.5L778.3,524.7L776.2,523.2L774.4,521.3L771.9,520.5L769.3,520.3" stroke-width="10.4"/><path d="M774.3,533.0L776.0,529.6L776.2,525.8L777.7,522.3L780.1,519.4L780.8,515.6L780.7,511.8" stroke-width="10.1"/><path d="M767.0,530.0L767.6,527.2L767.5,524.4L768.9,522.0L771.1,520.4L772.8,518.1L774.4,515.8" stroke-width="11.3"/><path d="M760.2,529.0L761.1,525.4L760.9,521.6L762.4,518.1L765.2,515.6L766.8,512.1L768.1,508.6" stroke-width="8.4"/><path d="M762.4,518.1L757.9,513.1" stroke-width="7.0"/><path d="M749.6,528.5L749.4,526.7L748.5,525.3L748.2,523.6L748.4,521.8L747.8,520.2L746.9,518.7" stroke-width="9.0"/><path d="M739.0,527.9L739.6,524.8L739.3,521.7L740.7,518.8L743.2,516.9L745.0,514.3L746.6,511.6" stroke-width="9.0"/><path d="M731.5,526.6L733.2,524.0L733.6,520.8L735.0,518.0L737.0,515.6L737.7,512.6L737.6,509.4" stroke-width="11.7"/><path d="M720.6,523.0L722.2,520.7L722.4,518.0L723.3,515.4L724.7,513.0L724.4,510.3L723.3,507.8" stroke-width="11.0"/><path d="M724.7,513.0L733.9,512.7" stroke-width="7.0"/><path d="M713.8,520.9L715.5,517.5L716.2,513.9L718.7,511.1L722.2,509.6L725.0,507.1L727.7,504.6" stroke-width="8.8"/><path d="M704.9,516.1L707.3,514.4L708.8,511.9L711.1,510.1L713.8,508.9L715.7,506.6L716.9,503.9" stroke-width="12.0"/><path d="M711.1,510.1L712.0,504.0" stroke-width="7.0"/><path d="M699.1,509.9L702.3,508.3L705.2,506.1L708.7,505.7L712.0,507.1L715.6,507.5L719.2,507.8" stroke-width="11.6"/><path d="M705.2,506.1L710.5,507.0" stroke-width="7.0"/><path d="M695.6,501.8L697.5,501.2L699.2,500.2L701.1,500.2L702.9,501.1L704.8,501.5L706.8,501.8" stroke-width="8.3"/><path d="M695.2,491.0L698.2,490.7L700.7,489.2L703.6,488.5L706.6,488.4L709.1,486.9L711.2,484.8" stroke-width="10.8"/><path d="M697.2,480.5L699.8,481.6L702.7,481.9L705.1,483.4L706.8,485.7L709.3,487.1L712.0,488.3" stroke-width="10.7"/><path d="M700.5,472.3L702.4,473.9L704.6,474.8L706.2,476.7L706.9,479.1L708.4,481.0L710.0,482.8" stroke-width="10.2"/><path d="M705.2,465.9L707.7,468.2L711.0,469.1L713.8,471.0L716.2,473.4L719.5,474.3L722.9,474.2" stroke-width="10.3"/><path d="M711.0,469.1L711.9,474.3" stroke-width="7.0"/><path d="M712.5,459.3L714.5,461.4L717.1,462.8L718.8,465.2L719.5,468.1L721.2,470.5L723.1,472.7" stroke-width="12.0"/><path d="M719.5,468.1L727.3,467.2" stroke-width="7.0"/><path d="M718.6,455.0L719.4,456.8L720.8,458.2L721.5,460.0L721.6,462.0L722.5,463.7L723.7,465.3" stroke-width="10.2"/><path d="M720.8,458.2L727.5,459.3" stroke-width="7.0"/><path d="M728.1,449.0L730.1,452.3L733.4,454.5L735.7,457.7L737.1,461.3L740.1,463.8L743.5,465.7" stroke-width="11.6"/><path d="M734.8,444.6L735.7,446.5L737.6,447.7L739.1,449.2L740.4,451.0L742.5,451.6L744.7,451.6" stroke-width="11.3"/><path d="M740.6,440.9L741.7,442.6L743.3,443.7L744.2,445.5L744.4,447.4L745.3,449.2L746.5,450.8" stroke-width="10.0"/><path d="M744.2,445.5L743.5,452.2" stroke-width="7.0"/></g><g fill="#222222" stroke="#222222" stroke-width="0.6" stroke-linejoin="round"><path d="M753.0,438.3L751.8,440.6L751.2,443.1L749.9,445.4L747.9,446.9L746.5,449.1L745.5,451.7L745.9,452.2L747.4,450.1L749.2,448.1L751.7,446.9L753.9,445.1L754.5,442.5L756.4,440.4Z"/><path d="M748.5,447.5L749.3,453.2"/><path d="M759.8,447.1L757.4,447.8L755.6,450.1L753.0,450.5L750.6,450.0L747.9,450.6L745.2,451.3L745.1,451.9L747.7,451.8L750.5,452.0L753.2,453.1L756.0,452.8L758.6,451.9L761.3,450.8Z"/><path d="M753.1,451.8L746.2,448.0"/><path d="M757.5,454.3L759.8,454.6L762.1,453.9L764.3,453.4L766.4,453.1L768.0,451.6L769.0,449.6L768.6,449.2L767.3,450.6L765.5,451.3L763.6,450.8L761.8,450.6L760.1,451.0L758.6,450.0Z"/><path d="M762.7,442.4L764.0,443.8L765.9,444.9L766.9,446.7L766.9,448.8L767.7,450.9L768.4,453.1L769.0,453.3L768.9,451.0L768.8,448.7L769.4,446.2L768.8,443.7L767.1,442.0L765.6,439.8Z"/><path d="M767.9,448.7L777.8,448.7"/><path d="M773.2,440.7L772.4,442.4L772.2,444.5L771.0,446.0L769.6,447.2L768.6,449.0L767.7,450.9L768.1,451.4L769.4,449.9L770.8,448.5L773.0,447.8L774.4,446.3L775.3,444.6L776.9,443.1Z"/><path d="M779.5,445.4L777.9,447.5L776.8,450.0L774.9,451.9L772.5,452.9L770.7,455.0L769.3,457.3L769.6,457.8L771.4,455.9L773.5,454.3L776.2,453.6L778.6,452.3L780.2,450.2L782.7,449.1Z"/><path d="M786.7,453.5L785.1,454.8L783.7,456.6L781.6,456.9L779.6,456.6L777.3,456.6L774.8,456.8L774.5,457.2L776.8,457.8L779.2,458.3L781.6,459.6L784.2,459.4L786.4,458.2L788.9,457.1Z"/><path d="M791.8,459.7L788.0,462.0L785.5,465.7L782.4,468.8L778.7,470.9L776.6,474.8L775.6,479.0L776.1,479.3L777.6,475.4L780.1,472.1L784.1,470.5L787.7,468.4L790.2,465.2L794.0,463.7Z"/><path d="M796.1,465.2L794.2,467.4L793.5,470.3L792.1,472.8L790.6,475.1L790.7,477.9L791.6,480.6L792.2,480.6L791.9,478.1L792.5,475.6L794.6,473.8L796.1,471.8L797.0,469.7L799.2,468.5Z"/><path d="M802.1,470.6L800.4,472.9L799.6,475.6L798.1,477.9L796.3,479.8L795.7,482.5L795.8,485.3L796.4,485.5L796.8,483.0L798.1,480.7L800.3,479.2L802.0,477.3L803.1,475.1L805.3,473.8Z"/><path d="M807.0,475.6L805.6,478.8L805.3,482.4L803.6,485.5L801.3,487.9L800.4,491.4L799.9,494.9L800.5,495.2L801.4,491.9L803.0,488.9L805.9,486.7L807.9,483.8L808.7,480.5L811.0,477.8Z"/><path d="M816.8,482.9L812.8,484.0L809.6,486.7L806.2,488.8L802.6,490.3L800.6,493.8L799.9,497.7L800.4,497.9L801.6,494.4L804.0,491.6L807.7,490.7L811.1,489.5L813.9,487.3L817.5,487.5Z"/><path d="M818.0,492.2L814.3,492.0L810.6,493.2L806.9,492.3L804.0,489.9L800.3,488.6L796.4,487.5L795.9,487.9L799.5,489.6L803.0,491.5L805.9,494.6L809.7,496.3L813.8,495.9L818.0,496.2Z"/><path d="M803.5,490.7L797.8,486.5"/><path d="M817.1,501.5L814.4,500.5L811.5,500.4L808.9,499.3L806.8,497.4L804.1,496.3L801.1,495.5L800.7,496.0L803.3,497.2L805.8,498.8L807.5,501.5L809.8,503.4L812.8,503.9L815.4,505.5Z"/><path d="M815.6,509.6L812.0,508.1L808.2,507.1L805.5,504.4L804.4,500.6L801.9,497.5L799.2,494.4L798.6,494.5L800.7,497.9L802.6,501.5L803.6,505.6L806.0,509.1L809.9,510.7L813.0,513.8Z"/><path d="M807.1,508.1L801.7,509.5"/><path d="M809.4,518.5L807.9,516.9L805.3,516.5L803.5,515.1L802.4,513.2L800.2,512.1L798.0,511.3L797.5,511.7L799.4,513.0L800.9,514.6L801.9,516.8L803.4,518.6L805.1,520.0L806.9,521.5Z"/><path d="M804.3,517.6L795.4,517.2"/><path d="M801.6,523.4L801.0,519.2L797.9,516.2L795.8,512.7L794.1,509.2L790.5,507.4L786.6,507.1L786.4,507.7L790.0,508.5L793.0,510.6L794.0,514.2L795.5,517.6L797.1,520.5L797.1,523.9Z"/><path d="M789.8,525.3L789.2,523.3L787.3,522.1L785.6,520.9L784.5,519.4L782.7,518.8L780.7,518.8L780.5,519.4L782.1,519.9L783.5,520.9L784.1,522.6L784.7,524.3L785.6,525.4L786.2,526.8Z"/><path d="M784.1,525.8L782.0,523.9L779.2,523.3L776.8,522.2L774.8,520.5L772.1,519.9L769.4,520.0L769.2,520.6L771.7,521.0L774.1,522.0L775.6,524.3L777.4,526.1L779.7,527.0L781.5,528.8Z"/><path d="M776.2,533.9L777.8,530.4L777.7,526.4L778.8,522.8L781.0,519.7L781.3,515.8L781.0,511.9L780.4,511.8L780.2,515.5L779.1,519.1L776.5,521.9L774.6,525.3L774.3,528.9L772.4,532.2Z"/><path d="M769.4,530.4L769.3,527.8L769.0,525.2L769.9,522.7L771.8,521.0L773.2,518.6L774.6,516.1L774.3,515.6L772.4,517.6L770.5,519.7L767.8,521.2L766.0,523.7L765.9,526.7L764.6,529.6Z"/><path d="M762.4,529.5L762.7,525.8L762.3,522.2L763.4,518.7L765.9,516.0L767.3,512.5L768.3,508.8L767.9,508.4L766.3,511.7L764.4,515.1L761.4,517.6L759.4,521.0L759.5,524.9L758.0,528.6Z"/><path d="M762.4,518.1L757.9,513.1"/><path d="M751.9,528.0L751.1,526.4L749.9,525.0L749.3,523.3L749.4,521.6L748.4,520.1L747.2,518.6L746.6,518.8L747.2,520.4L747.4,522.1L747.1,523.8L747.0,525.6L747.6,527.1L747.3,528.9Z"/><path d="M741.0,528.1L741.2,525.2L740.9,522.4L741.8,519.5L743.9,517.5L745.4,514.8L746.8,511.9L746.5,511.4L744.5,513.8L742.5,516.3L739.6,518.2L737.7,520.9L738.0,524.3L737.0,527.6Z"/><path d="M733.2,527.6L735.0,524.9L735.1,521.5L736.3,518.5L737.9,515.9L738.3,512.7L737.9,509.5L737.3,509.3L737.1,512.4L736.2,515.4L733.7,517.5L732.0,520.1L731.3,523.0L729.7,525.6Z"/><path d="M722.5,524.1L723.9,521.5L724.0,518.5L724.7,515.6L725.6,513.0L725.0,510.2L723.6,507.7L723.0,507.9L723.7,510.4L723.7,513.0L722.0,515.2L720.9,517.5L720.5,519.9L718.8,521.8Z"/><path d="M724.7,513.0L733.9,512.7"/><path d="M715.9,521.8L717.1,518.5L717.6,515.0L719.6,512.1L722.7,510.4L725.2,507.7L727.8,504.8L727.6,504.3L724.7,506.6L721.7,508.9L717.8,510.1L714.9,512.8L713.8,516.5L711.8,520.0Z"/><path d="M706.3,517.9L708.5,516.0L709.8,513.0L712.0,511.0L714.5,509.6L716.1,507.0L717.2,504.1L716.7,503.7L715.2,506.1L713.1,508.2L710.3,509.1L707.9,510.8L706.0,512.9L703.5,514.3Z"/><path d="M711.1,510.1L712.0,504.0"/><path d="M700.3,512.0L702.9,510.0L705.3,507.5L708.7,506.9L711.8,507.9L715.3,508.0L719.0,508.1L719.3,507.6L715.9,506.9L712.2,506.2L708.8,504.6L705.0,504.7L701.8,506.6L698.0,507.8Z"/><path d="M705.2,506.1L710.5,507.0"/><path d="M696.2,503.6L697.8,503.0L699.2,501.8L701.0,501.4L702.6,501.9L704.6,502.0L706.6,502.0L707.0,501.6L705.1,500.9L703.1,500.3L701.3,499.0L699.1,498.5L697.1,499.3L694.9,499.9Z"/><path d="M695.5,493.4L698.5,492.4L701.1,490.6L704.0,489.6L707.0,489.3L709.4,487.4L711.3,485.0L711.0,484.5L708.8,486.4L706.2,487.6L703.2,487.3L700.3,487.7L697.8,489.1L694.9,488.6Z"/><path d="M696.3,482.7L698.9,483.5L702.0,483.1L704.3,484.6L706.3,486.4L708.9,487.6L711.7,488.5L712.2,488.1L709.7,486.7L707.4,485.0L705.9,482.3L703.4,480.7L700.7,479.8L698.1,478.2Z"/><path d="M699.1,474.1L701.0,475.3L703.6,475.8L705.2,477.4L706.0,479.6L707.8,481.3L709.8,482.9L710.3,482.7L708.9,480.7L707.8,478.6L707.2,476.0L705.7,473.9L703.7,472.4L701.9,470.5Z"/><path d="M703.9,467.4L706.6,469.7L710.1,470.6L713.3,472.2L715.9,474.2L719.3,474.8L722.8,474.5L723.0,474.0L719.7,473.7L716.5,472.6L714.4,469.8L711.9,467.7L708.8,466.7L706.5,464.4Z"/><path d="M711.0,469.1L711.9,474.3"/><path d="M711.0,460.9L713.0,462.8L715.7,463.9L717.8,465.9L718.6,468.6L720.7,470.7L722.9,472.8L723.4,472.6L721.7,470.2L720.4,467.6L719.8,464.6L718.5,461.8L716.1,460.0L714.0,457.7Z"/><path d="M719.5,468.1L727.3,467.2"/><path d="M716.5,456.0L717.7,457.5L719.2,458.9L720.4,460.4L720.7,462.3L721.9,463.9L723.4,465.4L723.9,465.2L723.1,463.5L722.5,461.6L722.6,459.6L722.4,457.5L721.1,456.0L720.7,453.9Z"/><path d="M720.8,458.2L727.5,459.3"/><path d="M726.1,450.3L728.7,453.4L732.0,455.6L734.8,458.4L736.4,462.0L739.6,464.3L743.3,465.9L743.7,465.4L740.5,463.4L737.8,460.7L736.6,456.9L734.7,453.4L731.5,451.3L730.0,447.7Z"/><path d="M732.7,445.7L734.4,447.6L736.6,448.7L738.4,450.3L740.0,451.8L742.3,452.3L744.6,451.9L744.7,451.3L742.7,451.0L740.8,450.2L739.8,448.2L738.6,446.6L737.1,445.5L736.8,443.5Z"/><path d="M739.0,442.1L740.1,443.6L742.0,444.4L742.9,446.1L743.6,447.8L744.7,449.4L746.2,450.8L746.8,450.7L745.9,449.0L745.1,447.1L745.4,444.9L744.5,443.1L743.3,441.5L742.2,439.7Z"/><path d="M744.2,445.5L743.5,452.2"/></g><path d="M758.9,452 L759,527" stroke="#2a2a2a" stroke-width="2.5"/><rect x="690" y="435" width="130" height="100" filter="url(#nzb)"/></g></g><g stroke="#4848d0" stroke-width="2" fill="none"><path d="M342,144.9H524M342,144.9H207M342,144.9V362M342,144.9V47" stroke-dasharray="8 8"/><path d="M334,144.9H350M342,136.9V152.9" stroke="#5050e0"/><path d="M689.7,155.9H909M689.7,155.9H592M689.7,155.9V362M689.7,155.9V47" stroke-dasharray="8 8"/><path d="M681.7,155.9H697.7M689.7,147.9V163.9" stroke="#5050e0"/><path d="M727,496.4H909M727,496.4H592M727,496.4V702M727,496.4V388" stroke-dasharray="8 8"/><path d="M719,496.4H735M727,488.4V504.4" stroke="#5050e0"/></g><g stroke="#4848d0" stroke-width="1.6"><path d="M375.4,486V658"/><path d="M323,544.6H494" stroke-width="2"/><path d="M369,539.5L379.3,548"/></g></svg>
<div class="t" style="left:189.5px;top:52.18px;font-size:11.6px;line-height:11.6px;font-weight:400;color:#3cb400;font-family:'Liberation Sans', sans-serif;letter-spacing:0.75px">norm</div>
<div class="t" style="left:574.5px;top:52.18px;font-size:11.6px;line-height:11.6px;font-weight:400;color:#3cb400;font-family:'Liberation Sans', sans-serif;letter-spacing:0.75px">norm</div>
<div class="t" style="left:574.5px;top:393.18px;font-size:11.6px;line-height:11.6px;font-weight:400;color:#3cb400;font-family:'Liberation Sans', sans-serif;letter-spacing:0.75px">norm</div>
<div class="t" style="left:358.5px;top:49.87px;font-size:14px;line-height:14px;font-weight:700;color:#f0b400;font-family:'Liberation Serif', serif;transform:scaleX(1.12);transform-origin:0 0">A</div>
<div class="t" style="left:358.5px;top:345.28px;font-size:14px;line-height:14px;font-weight:700;color:#f0b400;font-family:'Liberation Serif', serif;transform:scaleX(1.12);transform-origin:0 0">P</div>
<div class="t" style="left:188.0px;top:197.58px;font-size:14px;line-height:14px;font-weight:700;color:#f0b400;font-family:'Liberation Serif', serif;transform:scaleX(1.12);transform-origin:0 0">R</div>
<div class="t" style="left:528.0px;top:197.58px;font-size:14px;line-height:14px;font-weight:700;color:#f0b400;font-family:'Liberation Serif', serif;transform:scaleX(1.12);transform-origin:0 0">L</div>
<div class="t" style="left:743.5px;top:49.87px;font-size:14px;line-height:14px;font-weight:700;color:#f0b400;font-family:'Liberation Serif', serif;transform:scaleX(1.12);transform-origin:0 0">S</div>
<div class="t" style="left:744.0px;top:345.28px;font-size:14px;line-height:14px;font-weight:700;color:#f0b400;font-family:'Liberation Serif', serif;transform:scaleX(1.12);transform-origin:0 0">I</div>
<div class="t" style="left:573.0px;top:197.58px;font-size:14px;line-height:14px;font-weight:700;color:#f0b400;font-family:'Liberation Serif', serif;transform:scaleX(1.12);transform-origin:0 0">A</div>
<div class="t" style="left:913.0px;top:197.58px;font-size:14px;line-height:14px;font-weight:700;color:#f0b400;font-family:'Liberation Serif', serif;transform:scaleX(1.12);transform-origin:0 0">P</div>
<div class="t" style="left:743.5px;top:390.88px;font-size:14px;line-height:14px;font-weight:700;color:#f0b400;font-family:'Liberation Serif', serif;transform:scaleX(1.12);transform-origin:0 0">S</div>
<div class="t" style="left:744.0px;top:685.57px;font-size:14px;line-height:14px;font-weight:700;color:#f0b400;font-family:'Liberation Serif', serif;transform:scaleX(1.12);transform-origin:0 0">I</div>
<div class="t" style="left:573.0px;top:537.57px;font-size:14px;line-height:14px;font-weight:700;color:#f0b400;font-family:'Liberation Serif', serif;transform:scaleX(1.12);transform-origin:0 0">R</div>
<div class="t" style="left:913.0px;top:537.57px;font-size:14px;line-height:14px;font-weight:700;color:#f0b400;font-family:'Liberation Serif', serif;transform:scaleX(1.12);transform-origin:0 0">L</div>
<div class="r" style="left:415px;top:351.0px;width:125.5px;height:2.6000000000000227px;background:#3cb400"></div>
<div class="r" style="left:415px;top:346.8px;width:2px;height:11.0px;background:#3cb400"></div>
<div class="r" style="left:538.5px;top:346.8px;width:2.0px;height:11.0px;background:#3cb400"></div>
<div class="t" style="left:456px;top:336.39px;font-size:12.3px;line-height:12.3px;font-weight:400;color:#3cb400;font-family:'Liberation Sans', sans-serif;">10 cm</div>
<div class="r" style="left:800px;top:351.0px;width:125.5px;height:2.6000000000000227px;background:#3cb400"></div>
<div class="r" style="left:800px;top:346.8px;width:2px;height:11.0px;background:#3cb400"></div>
<div class="r" style="left:923.5px;top:346.8px;width:2.0px;height:11.0px;background:#3cb400"></div>
<div class="t" style="left:841px;top:336.39px;font-size:12.3px;line-height:12.3px;font-weight:400;color:#3cb400;font-family:'Liberation Sans', sans-serif;">10 cm</div>
<div class="r" style="left:800px;top:691.0px;width:125.5px;height:2.599999999999909px;background:#3cb400"></div>
<div class="r" style="left:800px;top:686.8px;width:2px;height:11.0px;background:#3cb400"></div>
<div class="r" style="left:923.5px;top:686.8px;width:2.0px;height:11.0px;background:#3cb400"></div>
<div class="t" style="left:841px;top:676.39px;font-size:12.3px;line-height:12.3px;font-weight:400;color:#3cb400;font-family:'Liberation Sans', sans-serif;">10 cm</div>
<div class="r" style="left:549px;top:50px;width:13px;height:13px;background:#fff;border:1px solid #666;border-top:2px solid #555;border-right:1.5px solid #666;border-bottom:1.5px solid #666;box-sizing:border-box"></div>
<div class="t" style="left:551.7px;top:51.69px;font-size:11px;line-height:11px;font-weight:400;color:#444;font-family:'Liberation Sans', sans-serif;">A</div>
<svg class="r" style="left:550.5px;top:73px" width="11" height="10" viewBox="0 0 11 10"><path d="M1 3h2.3l1-1.5h2.4l1 1.5H10v6H1z" fill="none" stroke="#111" stroke-width="1.2" stroke-linejoin="round"/><circle cx="5.5" cy="5.9" r="1.6" fill="none" stroke="#333" stroke-width="1.2"/></svg>
<div class="r" style="left:549px;top:91px;width:14px;height:271px;background:#e8e8e8;border-left:1px solid #dadada;box-sizing:border-box"></div>
<div class="r" style="left:550px;top:91px;width:13px;height:13px;background:#f7f7f7"></div>
<svg class="r" style="left:552px;top:95px" width="8" height="5"><path d="M0 4.5L4 0.5L8 4.5z" fill="#555"/></svg>
<div class="r" style="left:550px;top:345px;width:13px;height:17px;background:#f7f7f7"></div>
<svg class="r" style="left:552px;top:351px" width="8" height="5"><path d="M0 0.5L4 4.5L8 0.5z" fill="#555"/></svg>
<div class="r" style="left:550px;top:179.7px;width:13px;height:26.30000000000001px;background:linear-gradient(90deg,#f4f4f4,#fdfdfd);border-top:1px solid #cfcfcf;border-bottom:1px solid #cfcfcf;box-sizing:border-box"></div>
<div class="r" style="left:934px;top:50px;width:13px;height:13px;background:#fff;border:1px solid #666;border-top:2px solid #555;border-right:1.5px solid #666;border-bottom:1.5px solid #666;box-sizing:border-box"></div>
<div class="t" style="left:936.7px;top:51.69px;font-size:11px;line-height:11px;font-weight:400;color:#444;font-family:'Liberation Sans', sans-serif;">S</div>
<svg class="r" style="left:935.5px;top:73px" width="11" height="10" viewBox="0 0 11 10"><path d="M1 3h2.3l1-1.5h2.4l1 1.5H10v6H1z" fill="none" stroke="#111" stroke-width="1.2" stroke-linejoin="round"/><circle cx="5.5" cy="5.9" r="1.6" fill="none" stroke="#333" stroke-width="1.2"/></svg>
<div class="r" style="left:934px;top:91px;width:14px;height:271px;background:#e8e8e8;border-left:1px solid #dadada;box-sizing:border-box"></div>
<div class="r" style="left:935px;top:91px;width:13px;height:13px;background:#f7f7f7"></div>
<svg class="r" style="left:937px;top:95px" width="8" height="5"><path d="M0 4.5L4 0.5L8 4.5z" fill="#555"/></svg>
<div class="r" style="left:935px;top:345px;width:13px;height:17px;background:#f7f7f7"></div>
<svg class="r" style="left:937px;top:351px" width="8" height="5"><path d="M0 0.5L4 4.5L8 0.5z" fill="#555"/></svg>
<div class="r" style="left:935px;top:197.5px;width:13px;height:26.69999999999999px;background:linear-gradient(90deg,#f4f4f4,#fdfdfd);border-top:1px solid #cfcfcf;border-bottom:1px solid #cfcfcf;box-sizing:border-box"></div>
<div class="r" style="left:934px;top:391px;width:13px;height:13px;background:#fff;border:1px solid #666;border-top:2px solid #555;border-right:1.5px solid #666;border-bottom:1.5px solid #666;box-sizing:border-box"></div>
<div class="t" style="left:936.7px;top:392.69px;font-size:11px;line-height:11px;font-weight:400;color:#444;font-family:'Liberation Sans', sans-serif;">C</div>
<svg class="r" style="left:935.5px;top:414px" width="11" height="10" viewBox="0 0 11 10"><path d="M1 3h2.3l1-1.5h2.4l1 1.5H10v6H1z" fill="none" stroke="#111" stroke-width="1.2" stroke-linejoin="round"/><circle cx="5.5" cy="5.9" r="1.6" fill="none" stroke="#333" stroke-width="1.2"/></svg>
<div class="r" style="left:934px;top:432px;width:14px;height:271px;background:#e8e8e8;border-left:1px solid #dadada;box-sizing:border-box"></div>
<div class="r" style="left:935px;top:432px;width:13px;height:13px;background:#f7f7f7"></div>
<svg class="r" style="left:937px;top:436px" width="8" height="5"><path d="M0 4.5L4 0.5L8 4.5z" fill="#555"/></svg>
<div class="r" style="left:935px;top:686px;width:13px;height:17px;background:#f7f7f7"></div>
<svg class="r" style="left:937px;top:692px" width="8" height="5"><path d="M0 0.5L4 4.5L8 0.5z" fill="#555"/></svg>
<div class="r" style="left:935px;top:595.4px;width:13px;height:26.600000000000023px;background:linear-gradient(90deg,#f4f4f4,#fdfdfd);border-top:1px solid #cfcfcf;border-bottom:1px solid #cfcfcf;box-sizing:border-box"></div>
<div class="r" style="left:408.5px;top:364.5px;width:70.0px;height:19.5px;background:linear-gradient(#fdfdfd,#efefef);border:1px solid #adadad;border-radius:3px;box-sizing:border-box"></div>
<div class="t" style="left:415.0px;top:366.92px;font-size:12.5px;line-height:12.5px;font-weight:400;color:#000;font-family:'Liberation Sans', sans-serif;">zoom to fit</div>
<div class="t" style="left:508.5px;top:367.34px;font-size:12px;line-height:12px;font-weight:400;color:#000;font-family:'Liberation Sans', sans-serif;">89 of 256</div>
<div class="r" style="left:793.5px;top:364.5px;width:70.0px;height:19.5px;background:linear-gradient(#fdfdfd,#efefef);border:1px solid #adadad;border-radius:3px;box-sizing:border-box"></div>
<div class="t" style="left:800.0px;top:366.92px;font-size:12.5px;line-height:12.5px;font-weight:400;color:#000;font-family:'Liberation Sans', sans-serif;">zoom to fit</div>
<div class="t" style="left:887.5px;top:367.34px;font-size:12px;line-height:12px;font-weight:400;color:#000;font-family:'Liberation Sans', sans-serif;">110 of 256</div>
<div class="r" style="left:793.5px;top:704.8px;width:70.0px;height:19.5px;background:linear-gradient(#fdfdfd,#efefef);border:1px solid #adadad;border-radius:3px;box-sizing:border-box"></div>
<div class="t" style="left:800.0px;top:707.22px;font-size:12.5px;line-height:12.5px;font-weight:400;color:#000;font-family:'Liberation Sans', sans-serif;">zoom to fit</div>
<div class="t" style="left:887.5px;top:707.64px;font-size:12px;line-height:12px;font-weight:400;color:#000;font-family:'Liberation Sans', sans-serif;">177 of 256</div>
<div class="r" style="left:194px;top:704.5px;width:50px;height:25.5px;background:linear-gradient(#fdfdfd,#efefef);border:1px solid #adadad;border-radius:3px;box-sizing:border-box"></div>
<div class="t" style="left:201px;top:707.42px;font-size:12.5px;line-height:12.5px;font-weight:400;color:#000;font-family:'Liberation Sans', sans-serif;">update</div>
<svg class="r" style="left:0;top:0" width="960" height="730" viewBox="0 0 960 730"><g fill="none" stroke="#d40000" stroke-linecap="round"><path d="M3.5,0.3H11" stroke-width="2.2"/><path d="M9,0.5Q12,2 11.2,5L9.2,9.5L13.3,11.5" stroke-width="1.9"/><path d="M12,0.8Q15.5,4 18.3,11" stroke-width="2.4" stroke="#c00000"/></g><g fill="none" stroke="#707070" stroke-width="1"><rect x="166.5" y="47.5" width="10" height="10" rx="2.2"/><rect x="171" y="49.8" width="3.5" height="3.5" rx="0.8"/><rect x="168.8" y="51.8" width="3.5" height="3.5" rx="0.8" fill="#f0f0f0"/></g><g transform="translate(17,101)"><g stroke="#5a5a5a" stroke-width="1.5"><path d="M-9,0H-4.5M-2,0H2.5M6.5,0H12.8"/><path d="M0,-9V-4M0,6.3V12"/></g><circle cx="0" cy="0" r="1" fill="#5a5a5a"/><path d="M2.8,2.5L3.8,10.5L5.7,8.6L7.8,11.3L9.3,10.1L7.3,7.5L10.2,6.8Z" fill="#bfc8d4" stroke="#1e2a2a" stroke-width="1.1" stroke-linejoin="round"/></g><g transform="translate(50.2,100.4)" fill="none" stroke="#1e2a2a"><circle cx="0" cy="0" r="4.6" stroke-width="1.5"/><path d="M-2.2,-1.5A2.5,2.5 0 0 1 0.5,-2.8" stroke-width="0.9"/><path d="M-3.3,3.3L-11.5,9" stroke-width="3.2" stroke-linecap="round"/><path d="M-3.6,3.6L-11.2,8.8" stroke="#d0d6d6" stroke-width="1.0" stroke-linecap="round"/></g><g stroke="#1a1a1a" fill="none" stroke-width="1.1"><path d="M71.9,94.7L79.9,97.6L80.6,106.3L75.9,111.8L64.8,106.1L71.2,102.1Z"/></g><g fill="#111"><circle cx="71.9" cy="94.7" r="1.6"/><circle cx="79.9" cy="97.6" r="1.6"/><circle cx="80.6" cy="106.3" r="1.6"/><circle cx="75.9" cy="111.8" r="1.6"/><circle cx="64.8" cy="106.1" r="1.6"/><circle cx="71.2" cy="102.1" r="1.6"/></g><g stroke-linecap="round"><path d="M96.5,105.5L104.5,97" stroke="#2a2a2a" stroke-width="4"/><path d="M97.5,104.5L103.5,98" stroke="#f2f2f2" stroke-width="1.4"/><path d="M104,97.5L107.5,94.5" stroke="#888" stroke-width="3"/><path d="M91,110L96,104.5L98.5,107Z" fill="#111" stroke="#111" stroke-width="1.4" stroke-linejoin="round"/></g><g fill="none" stroke-linecap="round"><path d="M131.5,99Q131,95.5 126.5,95.5Q121.5,96 121.5,99.5Q122,103 126.5,103.5Q131,104.5 130.5,108Q129.5,110.5 125.5,110.5Q122,110.5 120.5,108.5" stroke="#1e2a2a" stroke-width="2.6"/><path d="M131.5,99Q131,95.5 126.5,95.5Q121.5,96 121.5,99.5Q122,103 126.5,103.5Q131,104.5 130.5,108Q129.5,110.5 125.5,110.5Q122,110.5 120.5,108.5" stroke="#cfdcdc" stroke-width="0.8"/><path d="M126.3,93.5V112" stroke="#1e2a2a" stroke-width="2.8"/><path d="M126.3,94.5V111" stroke="#d8e2e2" stroke-width="0.9"/><path d="M131,98.5L133.5,99.5" stroke="#1e2a2a" stroke-width="1.8"/></g><g stroke="#1e2a2a" stroke-width="1.1" fill="#111"><path d="M153.6,94.5L147.6,111" fill="none"/><path d="M151,93.2L156.6,95M144.1,111L150.5,113.2" fill="none" stroke-width="1.3"/><circle cx="153" cy="97" r="1.1"/><circle cx="150.3" cy="102.5" r="1.5"/><circle cx="148.6" cy="108.5" r="1.1"/></g><text x="152.5" y="110" font-family="Liberation Sans" font-weight="700" font-size="7" fill="#1e2a2a">Ab</text><g fill="#858585"><path d="M9.9,133.1L16.8,128V131Q25,131 25.5,141.4Q23,135.5 16.8,135.5V138Z"/><path d="M51.9,133.1L45.3,128V131Q37,131 36.1,141.4Q39,135.5 45.3,135.5V138Z"/></g><g stroke="#000" stroke-width="1.4" stroke-linejoin="round"><path d="M70.5,139.5L79,142.5L86,136.5L77.5,133.5Z" fill="#fff"/><path d="M70.5,135.5L79,138.5L86,132.5L77.5,129.5Z" fill="#fff"/><path d="M70.5,131L79,134L86,128L77.5,125.5Z" fill="#000"/></g><rect x="109.5" y="132.5" width="9" height="9" fill="#fff" stroke="#000" stroke-width="1.2"/><rect x="106.8" y="129.5" width="8.7" height="8.7" fill="#f00" stroke="#000" stroke-width="1.3"/><path d="M120.1,137.3H126.8L123.4,141.2Z" fill="#555"/><path d="M144,127.2C149,127 152,130 151.4,134C151,136.5 148.5,137 148.8,139.5C149,142 146,143.3 143,142.6C139.5,141.8 137.4,138.5 137.4,135C137.4,130.5 140,127.3 144,127.2Z" fill="#000"/><g fill="#fff"><circle cx="144.6" cy="129.8" r="1.1"/><circle cx="148.3" cy="131.6" r="1.1"/><circle cx="140.8" cy="131.8" r="1.1"/><circle cx="140.4" cy="136" r="1.1"/><circle cx="144.8" cy="139.7" r="1.1"/></g><g transform="translate(18,199.9)"><g stroke="#5a5a5a" stroke-width="1.5"><path d="M-9,0H-4.5M-2,0H2.5M6.5,0H12.8"/><path d="M0,-9V-4M0,6.3V12"/></g><circle cx="0" cy="0" r="1" fill="#5a5a5a"/><path d="M2.8,2.5L3.8,10.5L5.7,8.6L7.8,11.3L9.3,10.1L7.3,7.5L10.2,6.8Z" fill="#bfc8d4" stroke="#1e2a2a" stroke-width="1.1" stroke-linejoin="round"/></g><g transform="translate(54,199.6)" fill="none" stroke="#1e2a2a"><circle cx="0" cy="0" r="4.6" stroke-width="1.5"/><path d="M-2.2,-1.5A2.5,2.5 0 0 1 0.5,-2.8" stroke-width="0.9"/><path d="M-3.3,3.3L-11.5,9" stroke-width="3.2" stroke-linecap="round"/><path d="M-3.6,3.6L-11.2,8.8" stroke="#d0d6d6" stroke-width="1.0" stroke-linecap="round"/></g><rect x="72.4" y="196.4" width="10.5" height="10.5" rx="1" fill="#505050"/><g fill="#fff"><rect x="73.6" y="198.8" width="3.8" height="3.3"/><rect x="78.2" y="198.8" width="3.5" height="3.3"/><rect x="73.6" y="202.8" width="3.8" height="3"/><rect x="78.2" y="202.8" width="3.5" height="3"/></g><g fill="none" stroke="#3a78c8" stroke-width="1"><path d="M100,202A8,8 0 1 1 114,202" opacity="0.5"/><path d="M101.8,201A6.2,6.2 0 1 1 112.2,201" opacity="0.8"/><path d="M103.6,200A4.4,4.4 0 1 1 110.4,200"/></g><circle cx="106.6" cy="197.3" r="2.2" fill="#fff" stroke="#555" stroke-width="0.9"/><path d="M105.5,199.5L99,211.2H114L107.7,199.5M101,207L110,209M112,207L103,209" fill="none" stroke="#666" stroke-width="1"/><g stroke="#000" stroke-width="1.3"><path d="M20.3,690V712M10,701.5H29.5"/></g><path d="M15,697Q26,694 26.5,701Q26.5,708 17,708.5" fill="none" stroke="#1e2a2a" stroke-width="2"/><path d="M13,696.5h4" stroke="#111" stroke-width="2.5"/><path d="M13.5,708.5L18,705.5V711Z" fill="#1e2a2a"/><g stroke="#666" stroke-width="1.4"><path d="M38,699H44M49.5,699H60M47,690V695M47,703V711"/></g><path d="M40,706L51,693" stroke="#222" stroke-width="0.8" stroke-dasharray="2 1.5"/><path d="M49.5,701.5L50.8,710L52.6,708.2L54.6,710.8L56,709.7L54,707.1L57,706.5Z" fill="#bfc8d4" stroke="#1e2a2a" stroke-width="1" stroke-linejoin="round"/><g fill="none" stroke="#1e2a2a" stroke-width="1.3" stroke-linejoin="round"><path d="M73,697L80,694L86.5,707L75,711L68.5,704Z"/><path d="M76,702L80.5,700L82.5,704.5L77.5,706Z"/><path d="M79,695L80.5,692M81,693L89,696L86,699"/></g><g fill="none" stroke="#1e2a2a" stroke-width="1.3" stroke-linejoin="round"><path d="M97.5,711Q105,710 110.5,701L113,697L109.5,695L105,702Z"/><path d="M110.5,696L114.5,692.5M112,698L116,694.5"/><path d="M104.5,707L106,705"/></g><g><rect x="476.4" y="707.5" width="4.8" height="4.5" fill="#707070"/><rect x="476.4" y="712" width="4.8" height="4" fill="#a0a0a0"/><rect x="476.4" y="716" width="4.8" height="4" fill="#d0d0d0"/><text x="469" y="711" font-family="Liberation Sans" font-size="4" fill="#888">2,8</text><text x="470" y="719" font-family="Liberation Sans" font-size="4" fill="#888">1,6</text></g><rect x="492.5" y="707.7" width="12" height="13" fill="#fff" stroke="#444" stroke-width="1"/><rect x="492.5" y="707.5" width="12" height="2" fill="#555"/><text x="493.3" y="717.5" font-family="Liberation Sans" font-size="8.5" fill="#666">3D</text><g fill="none" stroke="#000" stroke-width="1.3"><path d="M518.7,711.5h2.3l1-1.6h2.4l1,1.6h2v5.7h-8.7z" stroke-linejoin="round"/><circle cx="522.9" cy="714" r="1.6"/></g><path d="M541.7,711.8L547,716.5L552.3,711.8" fill="none" stroke="#4a4f63" stroke-width="2"/></svg>
</div>
<div class="r" style="left:0;top:0;width:18px;height:719px;background:linear-gradient(90deg,rgba(0,0,0,0.10),rgba(0,0,0,0))"></div>
</div>
<div style="position:absolute;left:0;top:0;width:955px;height:719px;overflow:hidden">
<div class="win">
<div class="r" style="left:-20px;top:-5px;width:980px;height:26px;background:#fff"></div>
<div class="r" style="left:-20px;top:21px;width:980px;height:21px;background:#f0f0f0"></div>
<div class="r" style="left:-20px;top:42px;width:980px;height:1px;background:#dadada"></div>
<div class="r" style="left:-20px;top:43px;width:980px;height:687px;background:#f0f0f0"></div>
<div class="t" style="left:23.8px;top:0.16px;font-size:12.8px;line-height:12.8px;font-weight:400;color:#000;font-family:'Liberation Sans', sans-serif;letter-spacing:0.07px">norm_minmax.nii.gz - New Segmentation - ITK-SNAP</div>
<div class="r" style="left:836px;top:5px;width:10px;height:1px;background:#000"></div>
<div class="r" style="left:881px;top:-1px;width:10px;height:11px;border:1px solid #000;box-sizing:border-box"></div>
<svg class="r" style="left:926px;top:-1px" width="12" height="12" viewBox="0 0 12 12"><path d="M1 0.5L11 10.5M11 0.5L1 10.5" stroke="#000" stroke-width="1.1"/></svg>
<div class="t" style="left:4.5px;top:24.65px;font-size:14px;line-height:14px;font-weight:400;color:#000;font-family:'Liberation Sans', sans-serif;letter-spacing:-0.5px">File</div>
<div class="t" style="left:39px;top:24.65px;font-size:14px;line-height:14px;font-weight:400;color:#000;font-family:'Liberation Sans', sans-serif;letter-spacing:-0.2px">Edit</div>
<div class="t" style="left:76px;top:24.65px;font-size:14px;line-height:14px;font-weight:400;color:#000;font-family:'Liberation Sans', sans-serif;letter-spacing:0px">Segmentation</div>
<div class="t" style="left:175.5px;top:24.65px;font-size:14px;line-height:14px;font-weight:400;color:#000;font-family:'Liberation Sans', sans-serif;letter-spacing:-0.1px">Workspace</div>
<div class="t" style="left:257.5px;top:24.65px;font-size:14px;line-height:14px;font-weight:400;color:#000;font-family:'Liberation Sans', sans-serif;letter-spacing:-0.3px">Tools</div>
<div class="t" style="left:301.5px;top:24.65px;font-size:14px;line-height:14px;font-weight:400;color:#000;font-family:'Liberation Sans', sans-serif;letter-spacing:0px">Help</div>
<div class="t" style="left:-1px;top:45.74px;font-size:13.3px;line-height:13.3px;font-weight:400;color:#000;font-family:'Liberation Sans', sans-serif;">ITK-SNAP Toolbox</div>
<div class="t" style="left:2.5px;top:67.80px;font-size:13px;line-height:13px;font-weight:700;color:#000;font-family:'Liberation Sans', sans-serif;">Main Toolbar</div>
<div class="t" style="left:2.5px;top:166.80px;font-size:13px;line-height:13px;font-weight:700;color:#000;font-family:'Liberation Sans', sans-serif;">Cursor Inspector</div>
<div class="t" style="left:2.5px;top:504.50px;font-size:13px;line-height:13px;font-weight:700;color:#000;font-family:'Liberation Sans', sans-serif;">Segmentation Labels</div>
<div class="t" style="left:2.5px;top:665.20px;font-size:13px;line-height:13px;font-weight:700;color:#000;font-family:'Liberation Sans', sans-serif;">3D Toolbar</div>
<div class="r" style="left:0px;top:82px;width:174px;height:71px;background:#e3e3e3;border:1px solid #8f8f8f;border-radius:3px;box-sizing:border-box"></div>
<div class="r" style="left:0px;top:181.5px;width:174px;height:310.0px;background:#e3e3e3;border:1px solid #8f8f8f;border-radius:3px;box-sizing:border-box"></div>
<div class="r" style="left:0px;top:519px;width:174px;height:133px;background:#e3e3e3;border:1px solid #8f8f8f;border-radius:3px;box-sizing:border-box"></div>
<div class="r" style="left:0px;top:680px;width:174px;height:60px;background:#e3e3e3;border:1px solid #8f8f8f;border-radius:3px;box-sizing:border-box"></div>
<div class="r" style="left:6px;top:88px;width:162px;height:31px;background:linear-gradient(#e8e8e8,#f2f2f2 20%,#dcdcdc 60%,#e6e6e6);border-top:1px solid #c8c8c8;border-bottom:1px solid #c8c8c8;box-sizing:border-box"></div>
<div class="r" style="left:6px;top:123px;width:162px;height:25px;background:linear-gradient(#e8e8e8,#f2f2f2 20%,#dcdcdc 60%,#e6e6e6);border-top:1px solid #c8c8c8;border-bottom:1px solid #c8c8c8;box-sizing:border-box"></div>
<div class="r" style="left:6px;top:187px;width:162px;height:30px;background:linear-gradient(#e8e8e8,#f2f2f2 20%,#dcdcdc 60%,#e6e6e6);border-top:1px solid #c8c8c8;border-bottom:1px solid #c8c8c8;box-sizing:border-box"></div>
<div class="r" style="left:6px;top:686px;width:162px;height:31px;background:linear-gradient(#e8e8e8,#f2f2f2 20%,#dcdcdc 60%,#e6e6e6);border-top:1px solid #c8c8c8;border-bottom:1px solid #c8c8c8;box-sizing:border-box"></div>
<div class="r" style="left:6px;top:89px;width:27px;height:29px;background:linear-gradient(#cddcef,#c5d3e6 50%,#d6d9ee)"></div>
<div class="r" style="left:6px;top:188px;width:29px;height:28px;background:linear-gradient(#cddcef,#c5d3e6 50%,#d6d9ee)"></div>
<div class="r" style="left:6px;top:687px;width:29px;height:29px;background:linear-gradient(#cddcef,#c5d3e6 50%,#d6d9ee)"></div>
<div class="t" style="left:6.5px;top:224.00px;font-size:13px;line-height:13px;font-weight:400;color:#000;font-family:'Liberation Sans', sans-serif;">Cursor position (x,y,z):</div>
<div class="r" style="left:6.5px;top:241.5px;width:50.0px;height:19.5px;background:#fff;border:1px solid #bdbdbd;border-radius:3px;box-sizing:border-box"></div>
<div class="t" style="left:11.5px;top:243.00px;font-size:13px;line-height:13px;font-weight:400;color:#000;font-family:'Liberation Sans', sans-serif;">110</div>
<div class="r" style="left:61.5px;top:241.5px;width:51.0px;height:19.5px;background:#fff;border:1px solid #bdbdbd;border-radius:3px;box-sizing:border-box"></div>
<div class="t" style="left:66.5px;top:243.00px;font-size:13px;line-height:13px;font-weight:400;color:#000;font-family:'Liberation Sans', sans-serif;">89</div>
<div class="r" style="left:117.5px;top:241.5px;width:50.0px;height:19.5px;background:#fff;border:1px solid #bdbdbd;border-radius:3px;box-sizing:border-box"></div>
<div class="t" style="left:122.5px;top:243.00px;font-size:13px;line-height:13px;font-weight:400;color:#000;font-family:'Liberation Sans', sans-serif;">177</div>
<div class="t" style="left:6.5px;top:272.00px;font-size:13px;line-height:13px;font-weight:400;color:#000;font-family:'Liberation Sans', sans-serif;">Intensity under cursor:</div>
<div class="r" style="left:6px;top:294px;width:160px;height:119px;background:#fff;border:1px solid #a8a8a8;box-sizing:border-box"></div>
<div class="r" style="left:7px;top:295px;width:158px;height:20px;background:linear-gradient(#f8f8f8,#e8e8e8);border-bottom:1px solid #c0c0c0;box-sizing:border-box"></div>
<div class="r" style="left:7px;top:315px;width:158px;height:16px;border-bottom:1px solid #c8c8c8;box-sizing:border-box"></div>
<div class="r" style="left:98px;top:295px;width:1px;height:36px;background:#c8c8c8"></div>
<div class="t" style="left:37px;top:299.00px;font-size:13px;line-height:13px;font-weight:400;color:#000;font-family:'Liberation Sans', sans-serif;">Layer</div>
<div class="t" style="left:108px;top:299.00px;font-size:13px;line-height:13px;font-weight:400;color:#000;font-family:'Liberation Sans', sans-serif;">Intensity</div>
<div class="t" style="left:10px;top:316.53px;font-size:10.6px;line-height:10.6px;font-weight:700;color:#000;font-family:'Liberation Sans', sans-serif;">norm_minmax</div>
<div class="r" style="left:104px;top:318px;width:8px;height:8px;background:#a0a0a0;border:1px solid #222;box-sizing:border-box"></div>
<div class="t" style="left:120px;top:317.02px;font-size:11.2px;line-height:11.2px;font-weight:400;color:#000;font-family:'Liberation Sans', sans-serif;">0.5686</div>
<div class="t" style="left:6.5px;top:417.60px;font-size:13px;line-height:13px;font-weight:400;color:#000;font-family:'Liberation Sans', sans-serif;">Label under cursor:</div>
<div class="r" style="left:6.5px;top:435px;width:39.5px;height:19.5px;background:#fff;border:1px solid #bdbdbd;border-radius:3px;box-sizing:border-box"></div>
<div class="t" style="left:11px;top:437.84px;font-size:12px;line-height:12px;font-weight:400;color:#000;font-family:'Liberation Sans', sans-serif;">0</div>
<div class="r" style="left:51.5px;top:435px;width:116.0px;height:19.5px;background:#fff;border:1px solid #bdbdbd;border-radius:3px;box-sizing:border-box"></div>
<div class="t" style="left:54.5px;top:437.84px;font-size:12px;line-height:12px;font-weight:400;color:#000;font-family:'Liberation Sans', sans-serif;">Clear Label</div>
<div class="t" style="left:6.5px;top:526.70px;font-size:13px;line-height:13px;font-weight:400;color:#000;font-family:'Liberation Sans', sans-serif;">Active label:</div>
<div class="r" style="left:6px;top:541px;width:162px;height:19.5px;background:linear-gradient(#fdfdfd,#f0f0f0);border:1px solid #adadad;border-radius:3px;box-sizing:border-box"></div>
<div class="r" style="left:14px;top:545px;width:12px;height:12px;background:#f00;border:1px solid #111;box-sizing:border-box"></div>
<div class="t" style="left:34.3px;top:544.50px;font-size:13px;line-height:13px;font-weight:400;color:#000;font-family:'Liberation Sans', sans-serif;">Label 1</div>
<svg class="r" style="left:152px;top:548px" width="9" height="6"><path d="M0.5 0.5H8.5L4.5 5z" fill="#444"/></svg>
<div class="t" style="left:6.5px;top:568.70px;font-size:13px;line-height:13px;font-weight:400;color:#000;font-family:'Liberation Sans', sans-serif;">Paint over:</div>
<div class="r" style="left:6px;top:583px;width:162px;height:19.5px;background:linear-gradient(#fdfdfd,#f0f0f0);border:1px solid #adadad;border-radius:3px;box-sizing:border-box"></div>
<svg class="r" style="left:13px;top:586px" width="13" height="13"><rect x="1.5" y="1.5" width="10" height="10" fill="#fff" stroke="#222"/><path d="M1.5 11.5L11.5 1.5" stroke="#222"/></svg>
<div class="t" style="left:34.5px;top:586.50px;font-size:13px;line-height:13px;font-weight:400;color:#000;font-family:'Liberation Sans', sans-serif;">All labels</div>
<svg class="r" style="left:152px;top:590px" width="9" height="6"><path d="M0.5 0.5H8.5L4.5 5z" fill="#444"/></svg>
<div class="t" style="left:6.5px;top:611.00px;font-size:13px;line-height:13px;font-weight:400;color:#000;font-family:'Liberation Sans', sans-serif;">Overall label opacity:</div>
<div class="r" style="left:6.5px;top:626px;width:28.0px;height:19.5px;background:#fff;border:1px solid #bdbdbd;border-radius:3px;box-sizing:border-box"></div>
<div class="t" style="left:10.5px;top:629.34px;font-size:12px;line-height:12px;font-weight:400;color:#000;font-family:'Liberation Sans', sans-serif;">50</div>
<div class="r" style="left:40px;top:633px;width:127px;height:5px;background:#d9d9d9;border:1px solid #c8c8c8;border-radius:3px;box-sizing:border-box"></div>
<div class="r" style="left:40px;top:633px;width:63px;height:5px;background:#1a7fd8;border-radius:3px"></div>
<div class="r" style="left:97px;top:629.5px;width:12.5px;height:12.0px;background:linear-gradient(#fff,#e8e8e8);border:1px solid #a0a0a0;border-radius:3px;box-sizing:border-box"></div>
<div class="r" style="left:185px;top:47px;width:359px;height:315px;background:#000;overflow:hidden"></div>
<div class="r" style="left:570px;top:47px;width:359px;height:315px;background:#000;overflow:hidden"></div>
<div class="r" style="left:185px;top:388px;width:381px;height:314px;background:#000;overflow:hidden"></div>
<div class="r" style="left:570px;top:388px;width:359px;height:314px;background:#000;overflow:hidden"></div>
<svg class="r" style="left:0;top:0" width="960" height="730" viewBox="0 0 960 730"><defs><filter id="b1a" x="-5%" y="-5%" width="110%" height="110%"><feGaussianBlur stdDeviation="0.6"/></filter><filter id="b2a" x="-50%" y="-50%" width="200%" height="200%"><feGaussianBlur stdDeviation="2.5"/></filter><filter id="b3a" x="-20%" y="-20%" width="140%" height="140%"><feGaussianBlur stdDeviation="4"/></filter><filter id="nza" x="0" y="0" width="100%" height="100%"><feTurbulence type="fractalNoise" baseFrequency="0.55" numOctaves="2" seed="7"/><feColorMatrix values="0 0 0 2.2 -0.85  0 0 0 2.2 -0.85  0 0 0 2.2 -0.85  0 0 0 0 0.13"/></filter><clipPath id="caxa"><path d="M359.5,116.0C352.1,116.9 337.4,118.7 330.5,121.5C323.6,124.3 321.6,128.6 318.0,133.0C314.4,137.4 311.5,142.2 309.0,148.0C306.5,153.8 305.3,160.1 303.0,168.0C300.7,175.9 297.1,187.0 295.0,195.7C292.9,204.4 292.2,213.9 290.7,220.0C289.2,226.1 286.0,225.2 286.0,232.0C286.0,238.8 288.4,252.4 290.7,261.0C293.0,269.6 296.7,277.2 300.0,283.8C303.3,290.4 306.3,295.8 310.6,300.7C314.9,305.6 320.4,309.9 326.0,313.0C331.6,316.1 338.4,319.3 344.0,319.5C349.6,319.7 354.9,313.6 359.5,314.0C364.1,314.4 365.9,321.2 371.8,322.0C377.7,322.8 387.8,321.5 394.7,319.0C401.6,316.5 406.9,312.7 413.0,306.8C419.1,300.9 426.6,291.4 431.4,283.8C436.2,276.2 439.4,268.6 442.0,261.0C444.6,253.4 446.0,245.7 446.7,238.0C447.4,230.3 446.8,222.1 446.0,215.0C445.2,207.9 443.4,203.0 442.0,195.7C440.6,188.4 439.6,178.9 437.6,171.0C435.6,163.1 433.3,154.3 430.0,148.0C426.7,141.7 423.4,137.6 417.7,133.0C412.0,128.4 403.1,123.5 396.0,120.7C388.9,117.9 381.1,116.8 375.0,116.0C368.9,115.2 366.9,115.1 359.5,116.0Z"/></clipPath><clipPath id="csaga"><path d="M660.6,132.0C661.8,127.2 664.9,123.1 669.0,120.0C673.1,116.9 679.7,116.2 685.5,113.5C691.3,110.8 696.9,107.0 704.0,103.6C711.1,100.2 719.3,95.4 728.0,93.0C736.7,90.6 745.8,89.2 756.4,89.0C767.0,88.8 781.2,89.8 791.8,91.8C802.4,93.8 812.1,97.3 820.0,101.3C827.9,105.2 833.5,109.2 839.0,115.5C844.5,121.8 849.3,131.1 853.3,139.0C857.3,146.9 860.4,155.6 862.8,162.7C865.2,169.8 867.5,175.0 867.5,181.7C867.5,188.4 865.5,197.5 862.8,203.0C860.0,208.5 855.7,212.6 851.0,214.8C846.3,217.0 838.4,212.8 834.4,216.0C830.4,219.2 830.6,229.3 827.0,234.0C823.4,238.7 818.9,241.9 813.0,244.0C807.1,246.1 798.6,246.7 791.8,246.7C785.0,246.7 777.1,248.2 772.0,244.0C766.9,239.8 764.0,228.2 761.0,221.8C758.0,215.4 757.5,208.8 754.0,205.3C750.5,201.8 744.1,200.6 739.8,200.6C735.5,200.6 732.7,204.5 728.0,205.3C723.3,206.1 715.4,207.7 711.5,205.3C707.6,202.9 706.8,194.9 704.4,191.0C702.0,187.1 701.3,184.4 697.0,181.7C692.7,179.0 683.5,177.4 678.4,174.6C673.3,171.8 669.3,169.3 666.5,165.0C663.7,160.7 662.8,154.1 661.8,148.6C660.8,143.1 659.4,136.8 660.6,132.0Z"/></clipPath><clipPath id="ccora"><path d="M751.2,440.7C753.5,441.2 756.0,442.8 757.3,445.3C758.6,447.9 757.9,456.0 758.9,456.0C759.9,456.0 761.7,447.6 763.5,445.3C765.3,443.0 767.1,441.7 769.6,442.2C772.1,442.7 774.7,444.3 778.8,448.4C782.9,452.5 788.9,461.3 794.0,466.7C799.1,472.1 805.8,476.9 809.4,480.5C813.0,484.1 814.7,484.6 815.5,488.2C816.3,491.8 815.0,497.4 814.0,502.0C813.0,506.6 812.2,512.4 809.4,515.7C806.6,519.0 801.6,520.2 797.0,521.8C792.4,523.3 785.1,523.5 781.8,525.0C778.5,526.5 779.2,530.5 777.2,531.0C775.2,531.5 772.7,528.8 769.6,528.0C766.5,527.2 764.5,526.9 758.9,526.4C753.3,525.9 742.4,526.0 736.0,525.0C729.6,524.0 725.2,521.8 720.6,520.3C716.0,518.8 712.0,518.2 708.4,515.7C704.8,513.2 701.0,509.1 699.2,505.0C697.4,500.9 697.2,496.3 697.7,491.2C698.2,486.1 699.7,479.2 702.2,474.4C704.8,469.5 708.1,466.2 713.0,462.1C717.9,458.0 726.2,453.2 731.3,449.9C736.4,446.6 740.3,443.7 743.6,442.2C746.9,440.7 748.9,440.2 751.2,440.7Z"/></clipPath></defs><g filter="url(#b1a)"><g clip-path="url(#caxa)"><path d="M359.5,116.0C352.1,116.9 337.4,118.7 330.5,121.5C323.6,124.3 321.6,128.6 318.0,133.0C314.4,137.4 311.5,142.2 309.0,148.0C306.5,153.8 305.3,160.1 303.0,168.0C300.7,175.9 297.1,187.0 295.0,195.7C292.9,204.4 292.2,213.9 290.7,220.0C289.2,226.1 286.0,225.2 286.0,232.0C286.0,238.8 288.4,252.4 290.7,261.0C293.0,269.6 296.7,277.2 300.0,283.8C303.3,290.4 306.3,295.8 310.6,300.7C314.9,305.6 320.4,309.9 326.0,313.0C331.6,316.1 338.4,319.3 344.0,319.5C349.6,319.7 354.9,313.6 359.5,314.0C364.1,314.4 365.9,321.2 371.8,322.0C377.7,322.8 387.8,321.5 394.7,319.0C401.6,316.5 406.9,312.7 413.0,306.8C419.1,300.9 426.6,291.4 431.4,283.8C436.2,276.2 439.4,268.6 442.0,261.0C444.6,253.4 446.0,245.7 446.7,238.0C447.4,230.3 446.8,222.1 446.0,215.0C445.2,207.9 443.4,203.0 442.0,195.7C440.6,188.4 439.6,178.9 437.6,171.0C435.6,163.1 433.3,154.3 430.0,148.0C426.7,141.7 423.4,137.6 417.7,133.0C412.0,128.4 403.1,123.5 396.0,120.7C388.9,117.9 381.1,116.8 375.0,116.0C368.9,115.2 366.9,115.1 359.5,116.0Z" fill="#b6b6b6"/><g fill="#8e8e8e" filter="url(#b2a)"><ellipse cx="344" cy="195" rx="6" ry="26"/><ellipse cx="397" cy="205" rx="6" ry="26"/></g><path d="M359.5,116.0C352.1,116.9 337.4,118.7 330.5,121.5C323.6,124.3 321.6,128.6 318.0,133.0C314.4,137.4 311.5,142.2 309.0,148.0C306.5,153.8 305.3,160.1 303.0,168.0C300.7,175.9 297.1,187.0 295.0,195.7C292.9,204.4 292.2,213.9 290.7,220.0C289.2,226.1 286.0,225.2 286.0,232.0C286.0,238.8 288.4,252.4 290.7,261.0C293.0,269.6 296.7,277.2 300.0,283.8C303.3,290.4 306.3,295.8 310.6,300.7C314.9,305.6 320.4,309.9 326.0,313.0C331.6,316.1 338.4,319.3 344.0,319.5C349.6,319.7 354.9,313.6 359.5,314.0C364.1,314.4 365.9,321.2 371.8,322.0C377.7,322.8 387.8,321.5 394.7,319.0C401.6,316.5 406.9,312.7 413.0,306.8C419.1,300.9 426.6,291.4 431.4,283.8C436.2,276.2 439.4,268.6 442.0,261.0C444.6,253.4 446.0,245.7 446.7,238.0C447.4,230.3 446.8,222.1 446.0,215.0C445.2,207.9 443.4,203.0 442.0,195.7C440.6,188.4 439.6,178.9 437.6,171.0C435.6,163.1 433.3,154.3 430.0,148.0C426.7,141.7 423.4,137.6 417.7,133.0C412.0,128.4 403.1,123.5 396.0,120.7C388.9,117.9 381.1,116.8 375.0,116.0C368.9,115.2 366.9,115.1 359.5,116.0Z" fill="none" stroke="#808080" stroke-width="3"/><g stroke="#686868" stroke-linecap="round" stroke-linejoin="round" fill="none"><path d="M354.4,114.1L356.7,118.3L357.1,123.1L356.2,127.7L357.5,132.3L359.5,136.7L359.2,141.4" stroke-width="8.4"/><path d="M344.1,115.6L344.6,117.7L343.9,119.7L342.3,121.1L341.2,122.9L340.0,124.7L338.0,125.4" stroke-width="9.0"/><path d="M342.3,121.1L335.1,126.8" stroke-width="7.0"/><path d="M333.0,118.0L335.3,121.2L336.0,125.0L335.3,128.9L336.2,132.7L337.4,136.4L336.4,140.2" stroke-width="8.9"/><path d="M336.0,125.0L344.0,129.7" stroke-width="7.0"/><path d="M323.4,122.8L327.0,126.1L329.9,130.0L332.4,134.2L337.0,135.9L341.8,135.9L346.5,137.3" stroke-width="11.1"/><path d="M329.9,130.0L327.4,139.6" stroke-width="7.0"/><path d="M316.7,130.7L319.0,131.0L321.2,131.9L323.2,133.1L325.5,132.9L327.7,131.9L330.0,131.7" stroke-width="8.5"/><path d="M310.1,140.1L313.4,140.0L316.5,141.0L319.4,142.6L322.6,142.4L325.7,141.3L329.0,141.6" stroke-width="10.6"/><path d="M316.5,141.0L321.1,138.9" stroke-width="7.0"/><path d="M306.5,147.5L311.0,147.4L315.4,148.3L319.7,149.7L323.9,148.3L327.5,145.5L331.7,144.2" stroke-width="11.3"/><path d="M319.7,149.7L325.3,146.4" stroke-width="7.0"/><path d="M303.2,157.8L307.0,158.0L310.7,159.1L314.1,160.8L317.9,160.3L321.3,158.6L325.2,158.3" stroke-width="8.4"/><path d="M314.1,160.8L320.2,157.5" stroke-width="7.0"/><path d="M300.9,166.2L305.6,165.8L310.1,167.3L313.9,170.1L318.6,170.8L323.3,170.8L327.4,173.2" stroke-width="8.8"/><path d="M298.1,175.6L300.3,175.3L302.5,175.7L304.5,176.6L306.7,176.1L308.7,175.2L310.9,175.1" stroke-width="9.3"/><path d="M294.9,186.3L299.8,186.2L303.9,188.7L306.5,192.8L310.1,195.9L313.8,199.1L314.7,203.8" stroke-width="9.2"/><path d="M303.9,188.7L310.0,185.7" stroke-width="7.0"/><path d="M292.3,196.2L297.1,196.3L301.8,197.5L306.2,199.4L310.9,198.4L315.0,195.9L319.8,195.1" stroke-width="8.1"/><path d="M301.8,197.5L304.0,202.0" stroke-width="7.0"/><path d="M290.9,203.9L292.9,203.0L295.2,202.7L297.5,202.9L299.5,201.8L301.1,200.3L303.2,199.5" stroke-width="10.1"/><path d="M297.5,202.9L301.5,198.2" stroke-width="7.0"/><path d="M289.7,211.7L293.1,211.3L296.3,212.8L298.5,215.5L301.4,217.4L304.3,219.4L305.3,222.7" stroke-width="10.6"/><path d="M296.3,212.8L299.8,218.0" stroke-width="7.0"/><path d="M287.4,221.8L291.7,222.9L295.5,225.1L298.9,227.9L303.3,228.4L307.6,227.5L311.9,228.5" stroke-width="8.2"/><path d="M298.9,227.9L306.2,227.6" stroke-width="7.0"/><path d="M283.5,232.3L287.7,230.6L292.2,230.6L296.4,232.0L300.9,231.4L305.1,230.0L309.5,230.9" stroke-width="10.4"/><path d="M284.8,245.1L287.6,243.9L290.7,243.9L293.6,244.9L296.6,244.5L299.6,243.7L302.5,244.5" stroke-width="11.9"/><path d="M290.7,243.9L295.8,250.6" stroke-width="7.0"/><path d="M286.4,253.5L288.9,251.2L291.8,249.4L294.9,247.9L296.4,244.8L296.7,241.4L298.0,238.2" stroke-width="10.5"/><path d="M288.4,262.2L292.5,260.6L296.8,259.9L301.2,259.8L304.7,257.2L307.1,253.5L310.6,250.9" stroke-width="10.3"/><path d="M291.6,271.5L295.1,268.2L299.8,266.8L304.6,267.1L309.1,265.4L313.4,263.3L318.2,263.8" stroke-width="11.9"/><path d="M296.3,282.0L299.0,278.5L303.1,277.0L307.4,277.5L311.7,276.6L316.0,275.7L319.9,277.7" stroke-width="8.1"/><path d="M301.1,291.3L303.2,287.4L306.5,284.5L310.4,282.4L312.7,278.6L314.0,274.4L317.0,271.2" stroke-width="11.8"/><path d="M312.7,278.6L312.4,271.4" stroke-width="7.0"/><path d="M305.2,297.9L307.9,294.3L311.4,291.5L315.3,289.3L317.3,285.3L318.0,280.8L320.3,277.0" stroke-width="9.2"/><path d="M317.3,285.3L323.1,286.8" stroke-width="7.0"/><path d="M312.4,306.1L314.0,303.0L316.2,300.3L318.7,297.8L319.1,294.3L318.2,290.9L318.5,287.4" stroke-width="8.3"/><path d="M318.7,297.8L326.0,297.4" stroke-width="7.0"/><path d="M320.8,312.7L322.2,309.7L324.9,307.9L328.2,307.4L331.1,306.0L334.1,304.6L337.3,305.3" stroke-width="8.1"/><path d="M324.9,307.9L324.2,301.3" stroke-width="7.0"/><path d="M328.1,316.9L327.6,313.1L329.0,309.5L331.7,306.7L333.1,303.1L334.2,299.4L337.3,297.1" stroke-width="9.7"/><path d="M329.0,309.5L324.0,303.7" stroke-width="7.0"/><path d="M337.2,320.8L337.1,318.1L338.2,315.7L339.9,313.7L340.7,311.2L341.1,308.6L342.8,306.5" stroke-width="8.8"/><path d="M346.6,321.7L345.9,319.6L345.7,317.3L345.9,315.0L344.7,313.0L343.0,311.5L341.9,309.5" stroke-width="10.5"/><path d="M355.2,317.8L352.2,315.5L350.9,312.1L351.0,308.4L349.9,304.8L348.7,301.3L349.8,297.8" stroke-width="9.9"/><path d="M349.9,304.8L350.5,299.0" stroke-width="7.0"/><path d="M360.2,316.8L361.9,312.6L365.5,309.9L370.0,309.1L374.0,307.0L378.0,305.0L382.4,306.0" stroke-width="10.1"/><path d="M374.0,307.0L382.2,305.0" stroke-width="7.0"/><path d="M366.3,322.2L366.9,319.8L368.6,317.9L370.9,316.8L372.6,314.9L374.2,313.0L376.7,312.3" stroke-width="10.8"/><path d="M379.3,324.6L378.2,321.6L378.3,318.4L379.4,315.4L378.9,312.2L378.0,309.1L378.7,306.0" stroke-width="9.6"/><path d="M389.9,323.0L388.2,319.3L388.5,315.2L390.4,311.6L390.9,307.5L391.1,303.5L393.6,300.3" stroke-width="10.6"/><path d="M401.8,318.5L398.5,315.0L396.5,310.6L395.6,305.8L392.3,302.2L388.4,299.5L386.0,295.3" stroke-width="11.0"/><path d="M409.2,313.5L406.2,311.1L404.1,307.9L402.6,304.3L399.5,302.1L395.9,300.8L393.1,298.1" stroke-width="10.2"/><path d="M399.5,302.1L390.6,300.5" stroke-width="7.0"/><path d="M415.1,308.3L411.9,306.1L409.4,303.4L407.1,300.3L403.4,299.3L399.7,299.6L396.0,298.6" stroke-width="11.8"/><path d="M403.4,299.3L405.0,292.6" stroke-width="7.0"/><path d="M420.5,302.5L416.9,300.9L413.9,298.3L411.5,295.2L407.7,293.8L403.8,293.4L400.4,291.4" stroke-width="9.6"/><path d="M426.3,295.4L424.5,294.2L423.7,292.2L423.9,290.0L423.4,287.9L422.9,285.8L423.9,283.9" stroke-width="11.7"/><path d="M433.0,285.9L428.5,284.0L425.2,280.3L423.3,275.7L419.7,272.3L415.7,269.4L413.9,264.9" stroke-width="9.8"/><path d="M438.0,277.2L435.3,276.7L432.9,275.3L430.9,273.3L428.3,272.5L425.5,272.3L423.1,270.8" stroke-width="11.6"/><path d="M442.2,267.8L439.1,268.2L436.2,267.1L433.9,265.1L431.0,264.1L428.0,263.4L425.9,261.2" stroke-width="11.7"/><path d="M445.6,257.7L443.5,258.2L441.3,257.8L439.4,256.9L437.2,257.1L435.1,257.7L432.9,257.3" stroke-width="10.5"/><path d="M439.4,256.9L434.8,252.0" stroke-width="7.0"/><path d="M447.5,250.0L443.4,251.8L438.9,252.5L434.4,252.6L430.8,255.3L428.2,259.1L424.5,261.6" stroke-width="9.5"/><path d="M449.1,238.7L446.2,239.4L443.4,238.6L441.0,236.8L438.2,236.0L435.2,235.4L433.2,233.2" stroke-width="10.3"/><path d="M438.2,236.0L432.2,229.4" stroke-width="7.0"/><path d="M449.4,226.2L446.9,226.9L444.2,227.1L441.6,226.9L439.4,228.4L437.8,230.5L435.6,231.9" stroke-width="9.5"/><path d="M439.4,228.4L433.3,221.0" stroke-width="7.0"/><path d="M448.8,218.1L444.6,220.3L439.9,220.1L435.6,218.0L430.9,217.6L426.2,217.3L422.5,214.3" stroke-width="9.5"/><path d="M435.6,218.0L429.5,211.9" stroke-width="7.0"/><path d="M446.8,205.6L444.6,207.8L441.6,208.9L438.4,209.0L435.6,210.4L433.0,212.2L429.8,212.3" stroke-width="8.6"/><path d="M441.6,208.9L434.0,207.5" stroke-width="7.0"/><path d="M444.7,196.3L443.1,197.9L441.0,198.6L438.7,198.4L436.6,199.1L434.5,199.9L432.3,199.4" stroke-width="8.9"/><path d="M442.8,185.2L439.2,187.5L435.0,188.6L430.7,188.6L427.1,190.8L424.0,193.8L419.9,195.2" stroke-width="9.6"/><path d="M441.1,175.4L436.9,177.0L432.4,176.3L428.6,173.7L424.2,172.6L419.7,171.6L416.8,168.1" stroke-width="9.7"/><path d="M424.2,172.6L420.5,178.4" stroke-width="7.0"/><path d="M438.6,164.8L436.5,166.4L434.1,167.3L431.5,167.6L429.4,169.3L427.9,171.4L425.6,172.7" stroke-width="8.2"/><path d="M429.4,169.3L425.3,166.1" stroke-width="7.0"/><path d="M436.2,156.6L434.5,158.5L432.3,159.9L429.9,160.8L428.4,162.8L427.5,165.2L425.7,167.0" stroke-width="9.2"/><path d="M428.4,162.8L421.7,159.6" stroke-width="7.0"/><path d="M433.1,148.6L429.3,151.7L424.5,152.6L419.8,151.6L415.0,152.3L410.2,153.3L405.8,151.4" stroke-width="11.2"/><path d="M428.2,140.3L426.6,141.7L424.5,142.1L422.4,141.5L420.2,141.6L418.0,141.7L416.3,140.4" stroke-width="11.1"/><path d="M420.2,141.6L416.8,150.9" stroke-width="7.0"/><path d="M419.7,131.4L419.3,135.0L417.1,137.9L414.0,139.8L411.8,142.6L409.8,145.5L406.4,146.8" stroke-width="8.4"/><path d="M414.0,139.8L417.9,146.7" stroke-width="7.0"/><path d="M412.2,126.1L411.1,128.8L409.1,131.0L406.7,132.5L405.3,135.1L404.5,137.9L402.4,140.0" stroke-width="11.3"/><path d="M406.7,132.5L400.3,133.9" stroke-width="7.0"/><path d="M401.6,120.4L401.6,124.6L399.7,128.2L396.6,131.0L394.8,134.7L393.4,138.6L390.0,141.1" stroke-width="9.5"/><path d="M392.2,116.7L392.5,120.4L392.1,124.1L391.3,127.7L392.9,131.0L395.6,133.5L397.4,136.8" stroke-width="9.2"/><path d="M391.3,127.7L393.8,133.1" stroke-width="7.0"/><path d="M383.3,114.7L383.0,117.7L381.6,120.3L379.4,122.3L378.2,125.1L377.5,128.0L375.4,130.1" stroke-width="10.8"/><path d="M379.4,122.3L383.1,129.3" stroke-width="7.0"/><path d="M372.1,113.1L373.3,115.5L373.8,118.2L374.0,120.8L375.7,122.9L378.0,124.3L379.6,126.5" stroke-width="11.3"/><path d="M374.0,120.8L368.1,127.2" stroke-width="7.0"/><path d="M363.6,113.0L364.4,115.9L364.3,118.8L363.6,121.7L364.6,124.5L366.3,126.9L366.9,129.8" stroke-width="8.8"/><path d="M363.6,121.7L367.6,125.9" stroke-width="7.0"/></g><g fill="#222222" stroke="#222222" stroke-width="0.6" stroke-linejoin="round"><path d="M352.1,114.5L354.9,118.6L355.6,123.3L354.9,127.9L356.5,132.5L359.0,136.7L358.9,141.5L359.5,141.4L360.1,136.6L358.5,132.2L357.5,127.6L358.7,122.8L358.4,118.1L356.6,113.8Z"/><path d="M341.8,115.3L342.8,117.1L342.6,119.0L341.4,120.4L340.6,122.2L339.8,124.2L337.9,125.1L338.1,125.6L340.3,125.2L341.8,123.6L343.2,121.8L345.1,120.4L346.4,118.3L346.4,115.9Z"/><path d="M342.3,121.1L335.1,126.8"/><path d="M330.9,118.6L333.6,121.6L334.3,125.3L333.9,129.0L335.2,132.7L336.8,136.4L336.1,140.2L336.7,140.2L338.1,136.4L337.2,132.7L336.7,128.8L337.7,124.8L337.1,120.8L335.1,117.4Z"/><path d="M336.0,125.0L344.0,129.7"/><path d="M321.6,123.8L325.4,127.4L328.9,131.2L331.7,135.4L336.7,136.8L341.8,136.4L346.5,137.6L346.4,137.0L341.9,135.3L337.2,135.1L333.0,133.0L330.9,128.8L328.6,124.8L325.2,121.9Z"/><path d="M329.9,130.0L327.4,139.6"/><path d="M315.7,132.4L318.3,132.9L320.9,133.4L323.2,134.4L325.7,133.8L327.8,132.4L330.1,132.0L329.9,131.4L327.5,131.3L325.4,132.0L323.2,131.9L321.4,130.5L319.7,129.1L317.6,129.0Z"/><path d="M309.3,142.4L312.9,142.0L316.3,142.5L319.3,143.9L322.7,143.2L325.8,141.9L329.0,141.9L328.9,141.3L325.7,140.7L322.6,141.5L319.5,141.2L316.8,139.5L313.9,138.1L311.0,137.7Z"/><path d="M316.5,141.0L321.1,138.9"/><path d="M305.9,149.4L310.7,149.3L315.4,149.6L319.9,150.9L324.3,149.2L327.8,146.0L331.9,144.4L331.6,143.9L327.2,145.0L323.6,147.4L319.4,148.5L315.4,146.9L311.3,145.4L307.2,145.5Z"/><path d="M319.7,149.7L325.3,146.4"/><path d="M302.3,159.9L306.5,159.8L310.5,160.7L314.1,162.0L318.0,161.2L321.5,159.2L325.3,158.6L325.0,158.0L321.2,158.0L317.8,159.4L314.1,159.6L310.9,157.5L307.5,156.1L304.1,155.7Z"/><path d="M314.1,160.8L320.2,157.5"/><path d="M300.3,168.5L305.0,167.8L309.7,168.7L313.6,171.3L318.3,171.8L323.1,171.4L327.3,173.5L327.5,172.9L323.5,170.2L318.9,169.9L314.3,168.9L310.5,165.9L306.2,163.8L301.6,163.8Z"/><path d="M297.6,177.5L300.0,177.1L302.4,177.3L304.6,177.9L306.8,177.0L308.8,175.7L311.0,175.3L310.8,174.8L308.5,174.6L306.5,175.3L304.4,175.2L302.5,174.2L300.6,173.6L298.6,173.7Z"/><path d="M294.2,188.3L298.9,187.8L303.0,189.9L305.6,193.5L309.3,196.4L313.3,199.3L314.4,203.9L315.0,203.8L314.4,198.9L311.0,195.4L307.3,192.0L304.8,187.5L300.6,184.6L295.6,184.2Z"/><path d="M303.9,188.7L310.0,185.7"/><path d="M291.4,198.5L296.7,198.0L301.7,198.9L306.3,200.6L311.1,199.2L315.3,196.5L319.9,195.3L319.6,194.8L314.8,195.3L310.7,197.5L306.1,198.2L301.9,196.1L297.5,194.5L293.2,193.9Z"/><path d="M301.8,197.5L304.0,202.0"/><path d="M291.0,206.1L293.2,204.8L295.7,204.4L297.9,204.1L299.9,202.6L301.4,200.8L303.4,199.7L303.1,199.2L300.8,199.7L299.1,201.0L297.0,201.7L294.7,201.1L292.6,201.2L290.7,201.8Z"/><path d="M297.5,202.9L301.5,198.2"/><path d="M289.2,213.8L292.5,212.8L295.5,214.0L297.6,216.5L300.7,218.0L303.8,219.7L305.0,222.8L305.6,222.6L304.8,219.1L302.1,216.9L299.4,214.5L297.1,211.5L293.8,209.8L290.1,209.7Z"/><path d="M296.3,212.8L299.8,218.0"/><path d="M286.2,223.5L290.9,224.5L294.9,226.7L298.6,229.1L303.2,229.2L307.6,228.1L312.0,228.7L311.9,228.2L307.6,226.9L303.4,227.5L299.1,226.8L296.1,223.5L292.5,221.4L288.5,220.2Z"/><path d="M298.9,227.9L306.2,227.6"/><path d="M283.6,234.6L287.7,232.6L292.2,232.3L296.4,233.3L300.9,232.3L305.1,230.6L309.5,231.2L309.5,230.6L305.1,229.3L300.9,230.5L296.4,230.7L292.1,228.9L287.6,228.6L283.4,230.0Z"/><path d="M285.0,247.4L287.7,245.7L290.7,245.3L293.6,246.2L296.6,245.4L299.5,244.3L302.5,244.8L302.6,244.2L299.6,243.0L296.7,243.6L293.6,243.5L290.7,242.4L287.5,242.0L284.7,242.8Z"/><path d="M290.7,243.9L295.8,250.6"/><path d="M287.2,255.5L290.0,252.8L292.8,250.4L295.9,248.5L297.2,245.2L297.3,241.5L298.3,238.2L297.7,238.2L296.1,241.3L295.5,244.5L293.9,247.2L290.8,248.4L287.8,249.5L285.5,251.5Z"/><path d="M288.5,264.6L292.9,262.5L297.3,261.3L301.8,260.9L305.3,257.9L307.5,253.9L310.8,251.0L310.3,250.7L306.6,253.1L304.1,256.4L300.6,258.8L296.3,258.6L292.1,258.6L288.4,259.8Z"/><path d="M292.4,273.4L295.8,270.1L300.2,268.4L304.9,268.3L309.3,266.4L313.5,263.9L318.3,264.1L318.2,263.5L313.4,262.7L309.0,264.5L304.3,265.8L299.3,265.2L294.5,266.3L290.8,269.6Z"/><path d="M297.6,284.0L299.7,280.2L303.4,278.4L307.5,278.7L311.6,277.5L315.8,276.3L319.8,277.9L320.0,277.4L316.2,275.1L311.8,275.7L307.4,276.3L302.8,275.7L298.3,276.9L295.0,280.0Z"/><path d="M302.6,293.1L304.4,288.7L307.6,285.5L311.4,283.2L313.5,279.2L314.5,274.8L317.2,271.3L316.7,271.1L313.4,274.1L311.9,278.1L309.4,281.6L305.5,283.6L302.1,286.2L299.5,289.5Z"/><path d="M312.7,278.6L312.4,271.4"/><path d="M306.4,299.7L309.2,295.9L312.5,292.5L316.4,290.0L318.2,285.7L318.6,281.0L320.6,277.0L320.0,276.9L317.4,280.6L316.4,284.8L314.2,288.6L310.3,290.5L306.5,292.7L304.0,296.0Z"/><path d="M317.3,285.3L323.1,286.8"/><path d="M314.1,307.9L315.5,304.1L317.6,300.9L319.9,298.1L320.0,294.3L318.8,290.8L318.8,287.3L318.2,287.5L317.6,290.9L318.1,294.2L317.4,297.4L314.8,299.6L312.5,301.9L310.7,304.4Z"/><path d="M318.7,297.8L326.0,297.4"/><path d="M322.3,314.3L323.2,311.2L325.6,309.2L328.6,308.7L331.3,307.0L334.1,305.1L337.3,305.6L337.4,305.0L334.1,304.0L331.0,305.0L327.8,306.2L324.2,306.6L321.1,308.3L319.2,311.2Z"/><path d="M324.9,307.9L324.2,301.3"/><path d="M330.0,317.4L329.4,313.7L330.4,310.1L332.7,307.3L333.9,303.7L334.7,299.8L337.5,297.3L337.1,296.9L333.8,299.1L332.3,302.6L330.7,306.1L327.7,308.9L325.8,312.5L326.1,316.5Z"/><path d="M329.0,309.5L324.0,303.7"/><path d="M339.1,321.4L339.1,318.9L339.7,316.3L341.0,314.2L341.5,311.6L341.6,308.9L343.1,306.7L342.5,306.4L340.5,308.3L339.9,310.8L338.8,313.2L336.7,315.1L335.2,317.4L335.3,320.2Z"/><path d="M348.5,321.8L347.7,319.4L347.2,316.9L347.1,314.5L345.5,312.5L343.4,311.1L342.1,309.3L341.7,309.8L342.5,312.0L343.9,313.5L344.6,315.5L344.2,317.7L344.0,319.8L344.6,321.7Z"/><path d="M357.0,316.7L354.1,314.7L352.4,311.6L352.2,308.2L351.0,304.8L349.3,301.4L350.1,297.9L349.5,297.7L348.0,301.3L348.9,304.9L349.8,308.6L349.3,312.6L350.4,316.4L353.4,318.9Z"/><path d="M349.9,304.8L350.5,299.0"/><path d="M361.7,318.1L362.9,313.9L366.4,311.4L370.4,310.3L374.2,308.0L378.0,305.6L382.4,306.2L382.5,305.7L378.0,304.4L373.8,306.1L369.6,307.9L364.7,308.4L360.8,311.3L358.8,315.5Z"/><path d="M374.0,307.0L382.2,305.0"/><path d="M368.0,323.5L368.2,320.9L369.6,318.9L371.7,317.8L373.1,315.6L374.5,313.5L376.8,312.5L376.6,312.0L373.9,312.4L372.2,314.2L370.1,315.8L367.6,316.9L365.6,318.7L364.5,321.0Z"/><path d="M381.8,324.6L380.2,321.6L379.8,318.4L380.8,315.4L379.9,312.2L378.6,309.1L379.0,306.0L378.4,306.0L377.3,309.1L378.0,312.2L378.0,315.4L376.9,318.4L376.2,321.6L376.9,324.6Z"/><path d="M392.0,322.9L390.2,319.4L389.9,315.4L391.6,311.9L391.8,307.9L391.6,303.7L393.9,300.4L393.4,300.1L390.6,303.2L390.0,307.2L389.3,311.3L387.2,315.0L386.2,319.2L387.7,323.2Z"/><path d="M403.9,317.6L400.2,314.1L397.9,309.8L396.6,305.2L393.2,301.6L388.8,299.1L386.2,295.1L385.8,295.5L387.9,299.9L391.5,302.9L394.6,306.5L395.1,311.4L396.8,315.9L399.7,319.4Z"/><path d="M411.0,312.4L407.5,310.1L405.2,306.9L403.4,303.4L400.0,301.4L396.2,300.3L393.2,297.9L393.0,298.4L395.5,301.3L399.0,302.8L401.8,305.2L403.0,308.8L404.9,312.1L407.3,314.6Z"/><path d="M399.5,302.1L390.6,300.5"/><path d="M417.1,306.9L413.1,304.9L410.2,302.1L407.6,299.3L403.7,298.4L399.7,298.9L396.0,298.3L396.0,298.9L399.6,300.2L403.2,300.2L406.6,301.4L408.5,304.6L410.7,307.4L413.1,309.7Z"/><path d="M403.4,299.3L405.0,292.6"/><path d="M422.1,300.8L418.0,299.5L414.6,297.2L412.0,294.1L408.1,293.0L404.0,292.8L400.5,291.1L400.3,291.7L403.6,293.9L407.4,294.6L410.9,296.2L413.1,299.5L415.8,302.3L418.9,304.2Z"/><path d="M427.9,294.2L426.4,293.3L425.2,291.8L425.1,289.9L424.4,288.0L423.5,286.0L424.2,284.1L423.6,283.8L422.4,285.7L422.4,287.8L422.6,290.1L422.2,292.6L422.7,295.1L424.7,296.5Z"/><path d="M434.4,284.5L429.9,282.6L426.4,279.2L424.2,275.0L420.4,271.8L416.2,269.1L414.1,264.7L413.6,265.0L415.2,269.8L419.1,272.8L422.4,276.4L424.1,281.3L427.1,285.3L431.6,287.4Z"/><path d="M439.2,275.1L436.2,275.0L433.7,273.7L431.5,272.0L428.6,271.6L425.7,271.7L423.2,270.5L423.0,271.1L425.3,272.8L427.9,273.4L430.4,274.6L432.1,276.9L434.4,278.4L436.9,279.2Z"/><path d="M442.7,265.7L439.7,266.4L436.9,265.6L434.5,263.9L431.5,263.4L428.4,262.9L426.1,260.9L425.7,261.4L427.7,263.9L430.6,264.9L433.4,266.3L435.6,268.6L438.5,270.0L441.7,270.0Z"/><path d="M446.0,255.5L443.7,256.5L441.5,256.2L439.4,255.8L437.2,256.2L435.1,257.1L432.9,257.0L433.0,257.6L435.1,258.3L437.2,258.0L439.3,258.0L441.2,259.4L443.3,259.8L445.3,259.9Z"/><path d="M439.4,256.9L434.8,252.0"/><path d="M447.4,247.6L443.0,249.9L438.3,251.0L433.8,251.6L430.2,254.6L427.8,258.7L424.3,261.5L424.8,261.8L428.7,259.5L431.4,256.1L435.0,253.6L439.5,254.1L443.8,253.7L447.6,252.4Z"/><path d="M449.4,236.3L446.6,237.6L443.8,237.2L441.5,235.8L438.6,235.1L435.6,234.9L433.4,233.0L433.0,233.4L434.9,235.9L437.7,236.9L440.6,237.9L442.9,240.1L445.9,241.2L448.9,241.1Z"/><path d="M438.2,236.0L432.2,229.4"/><path d="M449.5,224.1L446.6,225.0L443.8,225.5L441.1,225.9L438.9,227.7L437.4,230.0L435.3,231.7L435.8,232.1L438.2,230.9L439.9,229.1L442.1,228.0L444.7,228.7L447.1,228.9L449.3,228.3Z"/><path d="M439.4,228.4L433.3,221.0"/><path d="M448.6,216.0L444.6,218.5L440.1,218.6L435.9,216.7L431.3,216.6L426.4,216.8L422.7,214.1L422.3,214.6L425.9,217.8L430.6,218.5L435.3,219.4L439.7,221.6L444.6,222.1L449.1,220.1Z"/><path d="M435.6,218.0L429.5,211.9"/><path d="M446.0,203.8L443.9,206.3L441.1,207.5L438.0,207.7L435.3,209.5L432.8,211.6L429.7,212.0L429.9,212.6L433.1,212.8L435.9,211.4L438.9,210.3L442.2,210.4L445.3,209.4L447.7,207.4Z"/><path d="M441.6,208.9L434.0,207.5"/><path d="M443.6,194.1L442.5,196.3L440.5,197.1L438.5,197.3L436.5,198.1L434.5,199.3L432.3,199.1L432.2,199.7L434.5,200.6L436.6,200.1L438.9,199.6L441.4,200.2L443.7,199.5L445.7,198.5Z"/><path d="M442.3,182.8L438.6,185.7L434.5,187.1L430.2,187.4L426.6,190.0L423.7,193.3L419.8,195.0L420.1,195.5L424.3,194.4L427.5,191.7L431.2,189.7L435.6,190.0L439.7,189.4L443.3,187.6Z"/><path d="M441.1,173.0L437.1,175.0L432.8,174.7L429.1,172.6L424.7,171.7L420.1,171.1L417.0,167.9L416.6,168.3L419.3,172.1L423.7,173.4L428.1,174.9L432.0,177.9L436.6,179.1L441.2,177.9Z"/><path d="M424.2,172.6L420.5,178.4"/><path d="M437.8,162.5L435.9,164.9L433.4,165.9L430.9,166.7L428.9,168.5L427.5,170.9L425.4,172.5L425.8,172.9L428.3,171.9L430.0,170.1L432.1,168.6L434.7,168.6L437.2,167.9L439.3,167.2Z"/><path d="M429.4,169.3L425.3,166.1"/><path d="M435.1,154.6L433.4,156.9L431.4,158.7L429.1,160.0L427.7,162.3L427.0,164.9L425.5,166.9L426.0,167.2L428.0,165.5L429.1,163.4L430.7,161.6L433.2,161.0L435.6,160.1L437.3,158.7Z"/><path d="M428.4,162.8L421.7,159.6"/><path d="M432.4,146.7L428.8,149.7L424.4,151.1L419.8,150.4L415.1,151.5L410.4,152.7L405.9,151.1L405.7,151.7L410.1,154.0L414.9,153.2L419.8,152.7L424.7,154.1L429.8,153.7L433.7,150.4Z"/><path d="M427.4,138.1L426.2,139.7L424.4,140.6L422.5,140.3L420.4,140.7L418.3,141.1L416.4,140.1L416.1,140.6L417.8,142.3L420.0,142.5L422.3,142.7L424.6,143.6L427.0,143.8L429.1,142.6Z"/><path d="M420.2,141.6L416.8,150.9"/><path d="M418.0,130.5L417.6,133.9L415.8,136.8L413.1,138.8L411.3,141.9L409.5,145.0L406.2,146.5L406.5,147.0L410.1,146.1L412.3,143.3L415.0,140.7L418.4,139.0L421.0,136.1L421.4,132.3Z"/><path d="M414.0,139.8L417.9,146.7"/><path d="M410.3,124.5L409.8,127.7L407.8,129.9L405.7,131.9L404.5,134.6L403.9,137.6L402.2,139.8L402.7,140.1L405.0,138.2L406.1,135.6L407.6,133.2L410.5,132.0L412.4,129.9L414.0,127.7Z"/><path d="M406.7,132.5L400.3,133.9"/><path d="M399.7,119.7L399.9,123.8L398.3,127.5L395.4,130.2L394.0,134.1L392.9,138.2L389.8,140.9L390.2,141.3L393.9,139.1L395.6,135.4L397.8,131.8L401.0,129.0L403.3,125.3L403.5,121.1Z"/><path d="M389.8,116.1L390.5,120.3L390.6,124.3L390.1,128.1L392.1,131.5L395.2,133.9L397.2,137.0L397.6,136.5L396.1,133.1L393.7,130.6L392.5,127.3L393.5,123.9L394.5,120.6L394.6,117.4Z"/><path d="M391.3,127.7L393.8,133.1"/><path d="M381.2,113.7L381.4,116.9L380.1,119.5L378.4,121.7L377.5,124.6L377.0,127.6L375.2,129.9L375.7,130.3L378.0,128.3L379.0,125.5L380.3,122.9L383.1,121.1L384.6,118.5L385.4,115.7Z"/><path d="M379.4,122.3L383.1,129.3"/><path d="M370.0,113.4L371.7,116.0L372.2,118.8L373.0,121.5L375.0,123.5L377.6,124.8L379.4,126.7L379.7,126.2L378.4,123.9L376.4,122.3L375.1,120.2L375.4,117.5L374.9,115.1L374.3,112.9Z"/><path d="M374.0,120.8L368.1,127.2"/><path d="M361.1,112.8L362.5,115.9L362.8,119.0L362.5,122.0L363.8,124.8L365.8,127.2L366.7,129.9L367.2,129.6L366.9,126.7L365.5,124.2L364.7,121.5L365.7,118.7L366.3,115.9L366.1,113.3Z"/><path d="M363.6,121.7L367.6,125.9"/></g><g stroke="#7a7a7a" stroke-width="8" fill="none" stroke-linecap="round"><path d="M362,114V150"/><path d="M352,134Q362,124 378,134"/></g><g stroke="#262626" stroke-width="2.5" fill="none" stroke-linecap="round"><path d="M362,114V152"/><path d="M352,134Q362,124 378,134"/><path d="M355,145Q365,138 375,146"/></g><path d="M366,268V322" stroke="#7a7a7a" stroke-width="8"/><path d="M366,272V322" stroke="#2a2a2a" stroke-width="2.2"/><path d="M352,290Q366,282 382,292" stroke="#3a3a3a" stroke-width="2" fill="none"/><rect x="280" y="110" width="175" height="220" filter="url(#nza)"/><path d="M351.0,160.0C352.8,157.3 357.2,156.8 360.0,159.0C362.8,161.2 366.7,163.7 368.0,173.0C369.3,182.3 368.2,203.8 368.0,215.0C367.8,226.2 367.7,233.3 367.0,240.0C366.3,246.7 366.0,251.3 364.0,255.0C362.0,258.7 359.3,260.7 355.0,262.0C350.7,263.3 341.5,264.2 338.0,263.0C334.5,261.8 333.7,258.8 334.0,255.0C334.3,251.2 337.0,244.8 340.0,240.0C343.0,235.2 348.5,230.0 352.0,226.0C355.5,222.0 359.8,219.0 361.0,216.0C362.2,213.0 360.5,211.5 359.0,208.0C357.5,204.5 353.7,200.5 352.0,195.0C350.3,189.5 349.2,180.8 349.0,175.0C348.8,169.2 349.2,162.7 351.0,160.0Z" fill="#1c1c1c" stroke="#8a8a8a" stroke-width="2"/><path d="M374.0,172.6C376.8,168.4 384.4,165.7 387.8,164.8C391.2,163.9 393.5,165.7 394.7,167.4C395.9,169.1 395.3,172.1 395.0,175.0C394.7,177.9 394.4,180.2 393.0,184.7C391.6,189.2 388.8,197.1 386.9,202.0C385.0,206.9 381.8,209.4 381.7,214.3C381.6,219.2 384.1,226.1 386.0,231.6C387.9,237.1 391.6,242.4 393.0,247.3C394.4,252.2 395.3,258.2 394.7,261.2C394.1,264.2 391.5,265.5 389.5,265.5C387.5,265.5 385.1,263.2 382.5,261.0C379.9,258.8 375.8,257.7 373.9,252.5C372.0,247.3 371.5,240.4 371.0,230.0C370.5,219.6 370.5,199.6 371.0,190.0C371.5,180.4 371.2,176.8 374.0,172.6Z" fill="#1c1c1c" stroke="#8a8a8a" stroke-width="2"/></g></g><g filter="url(#b1a)"><g clip-path="url(#csaga)"><path d="M660.6,132.0C661.8,127.2 664.9,123.1 669.0,120.0C673.1,116.9 679.7,116.2 685.5,113.5C691.3,110.8 696.9,107.0 704.0,103.6C711.1,100.2 719.3,95.4 728.0,93.0C736.7,90.6 745.8,89.2 756.4,89.0C767.0,88.8 781.2,89.8 791.8,91.8C802.4,93.8 812.1,97.3 820.0,101.3C827.9,105.2 833.5,109.2 839.0,115.5C844.5,121.8 849.3,131.1 853.3,139.0C857.3,146.9 860.4,155.6 862.8,162.7C865.2,169.8 867.5,175.0 867.5,181.7C867.5,188.4 865.5,197.5 862.8,203.0C860.0,208.5 855.7,212.6 851.0,214.8C846.3,217.0 838.4,212.8 834.4,216.0C830.4,219.2 830.6,229.3 827.0,234.0C823.4,238.7 818.9,241.9 813.0,244.0C807.1,246.1 798.6,246.7 791.8,246.7C785.0,246.7 777.1,248.2 772.0,244.0C766.9,239.8 764.0,228.2 761.0,221.8C758.0,215.4 757.5,208.8 754.0,205.3C750.5,201.8 744.1,200.6 739.8,200.6C735.5,200.6 732.7,204.5 728.0,205.3C723.3,206.1 715.4,207.7 711.5,205.3C707.6,202.9 706.8,194.9 704.4,191.0C702.0,187.1 701.3,184.4 697.0,181.7C692.7,179.0 683.5,177.4 678.4,174.6C673.3,171.8 669.3,169.3 666.5,165.0C663.7,160.7 662.8,154.1 661.8,148.6C660.8,143.1 659.4,136.8 660.6,132.0Z" fill="#acacac"/><path d="M655,150 Q662,118 700,104 Q740,86 790,90 Q835,98 855,135 Q868,165 866,200" stroke="#3c3c3c" stroke-width="26" fill="none" opacity="0.45" filter="url(#b2a)"/><path d="M660.6,132.0C661.8,127.2 664.9,123.1 669.0,120.0C673.1,116.9 679.7,116.2 685.5,113.5C691.3,110.8 696.9,107.0 704.0,103.6C711.1,100.2 719.3,95.4 728.0,93.0C736.7,90.6 745.8,89.2 756.4,89.0C767.0,88.8 781.2,89.8 791.8,91.8C802.4,93.8 812.1,97.3 820.0,101.3C827.9,105.2 833.5,109.2 839.0,115.5C844.5,121.8 849.3,131.1 853.3,139.0C857.3,146.9 860.4,155.6 862.8,162.7C865.2,169.8 867.5,175.0 867.5,181.7C867.5,188.4 865.5,197.5 862.8,203.0C860.0,208.5 855.7,212.6 851.0,214.8C846.3,217.0 838.4,212.8 834.4,216.0C830.4,219.2 830.6,229.3 827.0,234.0C823.4,238.7 818.9,241.9 813.0,244.0C807.1,246.1 798.6,246.7 791.8,246.7C785.0,246.7 777.1,248.2 772.0,244.0C766.9,239.8 764.0,228.2 761.0,221.8C758.0,215.4 757.5,208.8 754.0,205.3C750.5,201.8 744.1,200.6 739.8,200.6C735.5,200.6 732.7,204.5 728.0,205.3C723.3,206.1 715.4,207.7 711.5,205.3C707.6,202.9 706.8,194.9 704.4,191.0C702.0,187.1 701.3,184.4 697.0,181.7C692.7,179.0 683.5,177.4 678.4,174.6C673.3,171.8 669.3,169.3 666.5,165.0C663.7,160.7 662.8,154.1 661.8,148.6C660.8,143.1 659.4,136.8 660.6,132.0Z" fill="none" stroke="#505050" stroke-width="9"/><g stroke="#666666" stroke-linecap="round" stroke-linejoin="round" fill="none"><path d="M661.2,124.6L664.9,127.0L667.2,130.8L668.5,135.1L671.3,138.6L673.9,142.2L674.2,146.7" stroke-width="6.9"/><path d="M671.3,138.6L676.4,138.7" stroke-width="4.9"/><path d="M670.2,116.4L671.7,119.1L671.7,122.1L671.0,125.1L671.4,128.2L671.6,131.3L670.2,134.0" stroke-width="6.2"/><path d="M671.7,122.1L679.6,128.0" stroke-width="4.9"/><path d="M678.6,113.4L681.5,116.4L682.4,120.4L682.1,124.5L683.1,128.6L683.5,132.7L681.6,136.3" stroke-width="5.8"/><path d="M683.1,128.6L691.4,130.7" stroke-width="4.9"/><path d="M687.7,109.6L690.3,111.6L691.6,114.6L692.3,117.9L694.1,120.6L695.9,123.4L696.0,126.7" stroke-width="6.7"/><path d="M694.6,105.7L696.5,108.5L697.2,111.8L697.4,115.1L699.1,118.0L701.0,120.8L701.4,124.1" stroke-width="7.0"/><path d="M702.9,101.4L705.2,104.1L705.9,107.6L705.7,111.2L706.8,114.6L707.7,118.0L706.6,121.4" stroke-width="6.0"/><path d="M706.8,114.6L712.8,117.4" stroke-width="4.9"/><path d="M711.1,97.3L713.1,98.7L714.3,101.0L715.1,103.4L716.6,105.4L718.1,107.4L718.4,110.0" stroke-width="7.3"/><path d="M718.6,93.7L721.5,95.7L722.9,98.9L723.3,102.3L724.8,105.4L725.9,108.7L725.0,112.0" stroke-width="7.8"/><path d="M723.3,102.3L723.4,111.5" stroke-width="4.9"/><path d="M728.3,90.3L729.2,93.8L728.2,97.2L726.4,100.2L725.7,103.7L724.7,107.1L722.0,109.4" stroke-width="6.0"/><path d="M725.7,103.7L731.2,108.8" stroke-width="4.9"/><path d="M736.9,88.4L738.4,90.5L738.6,93.0L738.3,95.6L738.9,98.1L739.3,100.6L738.3,103.0" stroke-width="6.6"/><path d="M746.5,87.0L747.3,90.6L746.4,94.1L744.8,97.4L744.6,101.0L744.2,104.6L742.0,107.5" stroke-width="7.5"/><path d="M744.6,101.0L738.6,106.7" stroke-width="4.9"/><path d="M755.2,86.5L757.0,90.7L756.5,95.2L754.8,99.4L754.7,104.0L754.1,108.5L751.2,112.0" stroke-width="7.9"/><path d="M766.7,86.6L767.2,90.8L765.7,94.7L763.4,98.2L762.5,102.2L761.4,106.3L758.4,109.2" stroke-width="7.4"/><path d="M776.7,87.3L777.3,89.9L776.7,92.6L775.6,95.2L775.6,97.9L775.5,100.7L774.0,103.0" stroke-width="6.0"/><path d="M776.7,92.6L773.3,96.5" stroke-width="4.9"/><path d="M784.5,88.1L784.8,91.4L783.7,94.6L782.0,97.5L781.7,100.8L781.3,104.2L779.4,106.9" stroke-width="7.9"/><path d="M783.7,94.6L777.9,99.8" stroke-width="4.9"/><path d="M794.5,89.8L793.7,93.6L791.2,96.5L788.0,98.8L785.7,101.9L783.2,104.9L779.5,106.1" stroke-width="8.3"/><path d="M803.5,92.1L802.7,95.3L801.2,98.2L799.7,101.1L800.3,104.3L801.4,107.4L801.6,110.7" stroke-width="6.8"/><path d="M799.7,101.1L792.9,101.5" stroke-width="4.9"/><path d="M813.7,95.7L813.0,100.4L810.7,104.6L808.3,108.7L808.2,113.5L808.6,118.2L807.3,122.8" stroke-width="6.9"/><path d="M808.2,113.5L803.5,115.7" stroke-width="4.9"/><path d="M825.1,101.2L824.3,104.5L822.3,107.2L819.9,109.5L818.7,112.7L817.4,115.8L814.9,118.1" stroke-width="7.0"/><path d="M832.1,105.7L829.5,109.5L825.3,111.5L820.8,112.4L816.7,114.6L812.4,116.3L807.8,115.4" stroke-width="6.6"/><path d="M840.1,113.0L839.5,115.6L837.8,117.7L835.8,119.6L834.8,122.0L833.8,124.5L831.7,126.3" stroke-width="7.5"/><path d="M847.1,122.5L843.4,125.2L838.9,126.3L834.3,126.8L830.4,129.3L826.6,131.9L822.0,132.6" stroke-width="7.8"/><path d="M852.6,132.1L850.3,134.9L847.3,136.8L844.3,138.8L842.7,142.0L841.6,145.4L839.4,148.2" stroke-width="7.7"/><path d="M847.3,136.8L846.7,141.9" stroke-width="4.9"/><path d="M857.4,141.7L852.9,143.7L847.9,143.5L843.2,142.2L838.2,142.8L833.3,143.1L828.8,141.0" stroke-width="6.4"/><path d="M861.6,151.9L858.6,154.5L855.0,156.0L851.3,157.5L849.0,160.7L847.1,164.2L844.1,166.9" stroke-width="7.7"/><path d="M864.4,159.8L861.8,162.1L858.5,163.1L855.0,163.5L852.0,165.2L849.0,166.9L845.5,167.0" stroke-width="7.0"/><path d="M867.1,167.5L864.2,170.3L860.4,171.6L856.5,172.3L853.2,174.6L850.0,176.8L846.0,177.4" stroke-width="6.1"/><path d="M869.8,177.9L867.3,178.7L864.8,178.8L862.2,178.9L860.1,180.3L858.3,182.1L856.0,183.3" stroke-width="5.7"/><path d="M869.3,189.7L866.6,189.3L864.4,187.8L862.5,185.8L860.0,184.7L857.5,183.5L856.0,181.2" stroke-width="6.6"/><path d="M862.5,185.8L860.9,179.1" stroke-width="4.9"/><path d="M867.6,197.4L864.3,197.8L861.2,196.7L858.3,195.1L855.1,194.8L851.8,194.4L849.1,192.5" stroke-width="5.7"/><path d="M861.2,196.7L853.4,202.5" stroke-width="4.9"/><path d="M862.6,208.2L859.4,207.3L856.8,205.4L854.3,203.3L851.1,202.6L847.9,202.3L845.0,200.8" stroke-width="8.0"/><path d="M853.9,216.1L850.7,214.2L848.8,210.9L847.7,207.2L845.5,204.1L843.6,200.8L843.7,197.0" stroke-width="5.8"/><path d="M847.7,207.2L848.8,201.5" stroke-width="4.9"/><path d="M843.0,217.6L842.3,214.5L842.7,211.3L843.2,208.1L842.1,205.2L840.6,202.3L840.2,199.1" stroke-width="7.6"/><path d="M731.6,206.8L730.5,204.7L730.6,202.3L731.3,199.9L731.2,197.5L731.4,195.1L732.8,193.1" stroke-width="7.5"/><path d="M722.8,208.7L720.0,205.2L719.3,200.9L719.7,196.5L718.6,192.2L717.8,187.8L719.6,183.8" stroke-width="6.1"/><path d="M719.7,196.5L711.1,191.4" stroke-width="4.9"/><path d="M711.8,208.2L712.3,205.7L713.9,203.7L715.8,202.1L716.9,199.8L718.0,197.5L720.1,196.1" stroke-width="7.7"/><path d="M705.3,200.4L709.4,197.5L714.1,195.9L718.9,194.3L722.0,190.4L724.6,186.1L728.4,182.9" stroke-width="7.6"/><path d="M700.9,189.9L703.3,186.5L706.8,184.4L710.6,182.8L713.3,179.7L715.9,176.5L719.6,174.8" stroke-width="6.7"/><path d="M693.3,182.6L694.4,179.7L696.3,177.3L698.2,174.9L698.6,171.8L698.5,168.7L699.3,165.7" stroke-width="5.9"/><path d="M686.4,180.3L686.1,177.1L686.7,174.0L687.4,170.9L686.2,167.9L684.7,165.1L684.2,161.9" stroke-width="8.3"/><path d="M676.2,176.2L677.6,173.6L679.6,171.3L681.6,169.0L681.9,166.0L681.7,163.0L682.3,160.1" stroke-width="8.4"/><path d="M681.9,166.0L681.5,160.3" stroke-width="4.9"/><path d="M668.0,170.6L669.4,167.4L671.9,164.9L674.5,162.7L675.7,159.4L676.7,156.0L678.8,153.3" stroke-width="6.9"/><path d="M671.9,164.9L672.4,155.7" stroke-width="4.9"/><path d="M661.6,160.0L663.5,157.7L666.2,156.8L669.1,156.6L671.8,155.6L674.6,154.8L677.3,155.8" stroke-width="7.0"/><path d="M659.2,148.5L662.4,147.6L665.7,148.4L668.6,149.9L671.9,150.3L675.1,151.1L677.5,153.4" stroke-width="6.7"/><path d="M668.6,149.9L672.6,144.9" stroke-width="4.9"/><path d="M657.7,137.3L662.1,136.5L666.4,137.6L670.6,139.1L675.0,138.7L679.4,138.2L683.7,139.6" stroke-width="7.3"/></g><g fill="#222222" stroke="#222222" stroke-width="0.6" stroke-linejoin="round"><path d="M659.2,126.4L663.5,128.1L665.8,131.7L667.2,135.8L670.4,139.0L673.2,142.4L673.9,146.7L674.5,146.6L674.5,142.0L672.3,138.2L669.8,134.4L668.6,129.9L666.4,125.9L663.2,122.9Z"/><path d="M671.3,138.6L676.4,138.7"/><path d="M668.1,116.8L669.5,119.3L670.2,122.2L669.6,125.1L670.5,128.1L671.1,131.1L670.0,133.9L670.5,134.1L672.2,131.4L672.4,128.3L672.4,125.2L673.2,122.1L673.9,118.8L672.3,115.9Z"/><path d="M671.7,122.1L679.6,128.0"/><path d="M676.4,114.6L679.3,117.1L680.6,120.7L680.8,124.6L682.1,128.5L682.9,132.5L681.3,136.2L681.8,136.4L684.1,132.8L684.0,128.7L683.4,124.5L684.2,120.0L683.7,115.6L680.9,112.2Z"/><path d="M683.1,128.6L691.4,130.7"/><path d="M685.9,110.8L688.5,112.7L690.2,115.4L691.1,118.4L693.1,120.9L695.2,123.6L695.7,126.7L696.3,126.6L696.5,123.2L695.2,120.2L693.5,117.4L693.0,113.9L692.0,110.6L689.5,108.3Z"/><path d="M692.2,106.5L694.5,109.2L695.4,112.4L696.3,115.5L698.3,118.3L700.3,121.0L701.2,124.2L701.7,123.9L701.6,120.5L700.0,117.6L698.6,114.7L698.9,111.2L698.5,107.8L697.0,105.0Z"/><path d="M700.8,102.3L703.3,104.7L704.2,108.0L704.2,111.4L705.9,114.6L707.0,118.0L706.3,121.4L706.9,121.5L708.3,118.1L707.8,114.5L707.2,111.0L707.5,107.2L707.0,103.5L705.0,100.4Z"/><path d="M706.8,114.6L712.8,117.4"/><path d="M708.9,99.0L711.6,99.8L713.0,101.7L713.7,104.1L715.7,105.8L717.5,107.7L718.2,110.1L718.7,109.9L718.7,107.2L717.6,105.0L716.4,102.7L715.6,100.2L714.7,97.6L713.2,95.6Z"/><path d="M717.0,95.0L719.7,96.7L721.2,99.6L722.1,102.6L723.8,105.5L725.2,108.7L724.7,112.0L725.3,112.1L726.6,108.7L725.8,105.3L724.5,102.0L724.6,98.2L723.2,94.7L720.3,92.4Z"/><path d="M723.3,102.3L723.4,111.5"/><path d="M725.6,90.2L727.2,93.5L726.6,96.7L725.1,99.7L724.9,103.2L724.2,106.7L721.8,109.2L722.2,109.6L725.2,107.5L726.6,104.2L727.7,100.8L729.8,97.6L731.2,94.1L731.0,90.4Z"/><path d="M725.7,103.7L731.2,108.8"/><path d="M734.4,89.2L736.4,90.9L736.8,93.3L736.9,95.7L737.8,98.0L738.6,100.5L738.0,103.0L738.6,103.1L739.9,100.7L739.9,98.2L739.7,95.5L740.4,92.8L740.3,90.1L739.4,87.6Z"/><path d="M744.3,86.9L745.1,90.3L744.7,93.8L743.5,97.0L743.7,100.7L743.6,104.3L741.8,107.4L742.3,107.7L744.8,104.8L745.4,101.3L746.2,97.7L748.1,94.4L749.6,90.9L748.8,87.2Z"/><path d="M744.6,101.0L738.6,106.7"/><path d="M752.6,86.8L754.9,90.7L754.6,95.0L753.4,99.1L753.7,103.7L753.5,108.2L750.9,111.8L751.4,112.1L754.7,108.8L755.6,104.3L756.3,99.8L758.4,95.4L759.2,90.7L757.8,86.2Z"/><path d="M764.5,86.3L765.0,90.2L764.0,94.1L762.1,97.6L761.6,101.8L760.8,105.9L758.1,109.0L758.6,109.4L761.9,106.6L763.3,102.7L764.7,98.7L767.3,95.2L769.3,91.3L768.8,87.0Z"/><path d="M774.5,87.1L775.2,89.7L775.0,92.4L774.4,94.9L774.6,97.7L774.9,100.5L773.8,102.9L774.3,103.1L776.1,100.9L776.5,98.2L776.8,95.4L778.5,92.9L779.5,90.2L778.9,87.4Z"/><path d="M776.7,92.6L773.3,96.5"/><path d="M782.3,87.7L782.6,90.9L782.2,94.2L780.7,97.1L780.8,100.5L780.7,103.9L779.2,106.8L779.7,107.1L781.9,104.4L782.6,101.1L783.3,97.9L785.1,95.0L787.0,91.9L786.7,88.5Z"/><path d="M783.7,94.6L777.9,99.8"/><path d="M792.4,88.7L791.9,92.4L789.8,95.4L787.1,97.8L785.2,101.2L782.9,104.3L779.4,105.8L779.7,106.4L783.6,105.5L786.3,102.7L788.9,99.7L792.5,97.7L795.5,94.8L796.5,90.9Z"/><path d="M801.6,91.0L800.7,94.5L799.5,97.8L798.5,101.1L799.2,104.5L800.7,107.6L801.3,110.8L801.8,110.5L802.0,107.2L801.3,104.2L801.0,101.2L802.9,98.5L804.6,96.0L805.3,93.2Z"/><path d="M799.7,101.1L792.9,101.5"/><path d="M811.3,94.5L811.0,99.7L809.1,104.2L807.0,108.5L807.1,113.4L808.0,118.2L807.0,122.8L807.6,122.8L809.3,118.3L809.3,113.6L809.5,109.0L812.3,105.1L814.9,101.1L816.1,96.9Z"/><path d="M808.2,113.5L803.5,115.7"/><path d="M823.1,100.1L822.6,103.4L821.0,106.4L818.8,108.8L817.8,112.1L816.9,115.4L814.7,117.9L815.2,118.2L818.0,116.2L819.6,113.3L821.0,110.2L823.6,107.9L826.1,105.5L827.0,102.2Z"/><path d="M830.7,104.1L828.5,108.0L824.7,110.1L820.3,111.0L816.5,113.6L812.4,115.6L807.9,115.1L807.8,115.7L812.4,117.0L816.9,115.6L821.2,113.7L826.0,113.0L830.5,111.1L833.4,107.3Z"/><path d="M838.0,111.7L837.9,114.7L836.3,116.8L834.8,118.9L834.0,121.5L833.2,124.1L831.5,126.1L832.0,126.4L834.3,124.9L835.6,122.6L836.9,120.3L839.3,118.7L841.1,116.6L842.3,114.3Z"/><path d="M846.3,120.1L842.7,123.2L838.3,124.6L833.9,125.6L830.0,128.3L826.4,131.3L821.9,132.3L822.2,132.9L826.9,132.5L830.8,130.3L834.8,128.1L839.6,128.1L844.2,127.3L848.0,124.8Z"/><path d="M851.1,130.0L848.8,133.1L845.9,135.5L843.2,137.9L841.8,141.5L841.0,145.1L839.1,148.1L839.6,148.3L842.1,145.7L843.5,142.5L845.3,139.6L848.7,138.1L851.8,136.6L854.0,134.2Z"/><path d="M847.3,136.8L846.7,141.9"/><path d="M857.1,139.6L852.7,141.5L847.9,141.9L843.2,140.8L838.4,141.7L833.4,142.5L828.9,140.7L828.8,141.3L833.2,143.8L838.1,143.9L843.1,143.6L847.9,145.0L853.0,146.0L857.7,143.8Z"/><path d="M860.6,149.6L857.7,152.9L854.0,154.8L850.4,156.6L848.3,160.1L846.6,163.9L843.9,166.7L844.4,167.0L847.6,164.5L849.7,161.3L852.2,158.5L855.9,157.3L859.5,156.0L862.6,154.2Z"/><path d="M863.4,157.6L860.9,160.0L857.9,161.5L854.6,162.3L851.7,164.2L848.8,166.3L845.4,166.7L845.6,167.3L849.2,167.5L852.3,166.2L855.4,164.6L859.1,164.6L862.7,164.2L865.5,161.9Z"/><path d="M866.1,165.5L863.3,168.3L859.7,170.0L856.0,171.2L852.9,173.7L849.7,176.3L845.9,177.1L846.1,177.7L850.2,177.4L853.6,175.4L857.0,173.4L861.2,173.1L865.2,172.2L868.1,169.5Z"/><path d="M869.7,175.8L867.0,176.6L864.3,177.2L861.6,177.5L859.6,179.5L857.9,181.6L855.8,183.1L856.2,183.5L858.7,182.6L860.6,181.2L862.8,180.2L865.2,180.3L867.7,180.8L869.8,180.1Z"/><path d="M870.2,187.7L867.5,187.7L865.4,186.2L863.3,184.7L860.6,183.8L857.9,183.0L856.2,181.0L855.8,181.4L857.1,183.9L859.3,185.5L861.7,186.9L863.4,189.4L865.7,191.0L868.4,191.8Z"/><path d="M862.5,185.8L860.9,179.1"/><path d="M868.0,194.7L864.7,195.9L861.6,195.3L858.8,193.7L855.4,193.9L852.0,193.8L849.3,192.2L849.0,192.7L851.6,194.9L854.8,195.7L857.9,196.6L860.8,198.2L863.9,199.7L867.2,200.0Z"/><path d="M861.2,196.7L853.4,202.5"/><path d="M864.0,206.0L860.6,205.3L857.5,203.9L854.8,202.0L851.4,201.7L848.0,201.7L845.0,200.5L844.9,201.1L847.7,202.9L850.8,203.5L853.8,204.5L856.1,206.8L858.3,209.3L861.1,210.5Z"/><path d="M855.8,214.4L852.4,212.9L850.1,210.1L849.0,206.6L846.4,203.8L844.2,200.7L844.0,197.0L843.4,197.1L842.9,201.0L844.6,204.4L846.4,207.8L847.5,211.6L848.9,215.4L852.1,217.8Z"/><path d="M847.7,207.2L848.8,201.5"/><path d="M845.7,217.8L844.1,214.5L844.5,211.1L844.6,207.9L843.1,204.9L841.2,202.1L840.5,199.0L840.0,199.3L840.0,202.5L841.1,205.4L841.9,208.4L840.9,211.5L840.5,214.5L840.3,217.4Z"/><path d="M734.0,206.4L732.7,204.5L732.4,202.3L732.6,200.1L732.2,197.8L731.9,195.3L733.0,193.3L732.5,193.0L730.8,194.9L730.2,197.2L730.0,199.7L728.8,202.2L728.2,204.8L729.2,207.3Z"/><path d="M725.0,207.7L722.1,204.6L721.1,200.6L721.1,196.4L719.5,192.2L718.5,187.9L719.9,183.8L719.3,183.7L717.2,187.7L717.6,192.2L718.2,196.6L717.5,201.2L718.0,205.8L720.6,209.6Z"/><path d="M719.7,196.5L711.1,191.4"/><path d="M713.8,209.3L714.0,206.7L715.3,204.7L717.0,202.9L717.7,200.4L718.5,197.9L720.3,196.3L719.9,195.8L717.6,197.1L716.1,199.1L714.6,201.2L712.5,202.8L710.6,204.7L709.7,207.0Z"/><path d="M706.1,202.7L710.4,199.5L715.0,197.2L719.7,195.3L722.7,191.0L725.1,186.5L728.7,183.1L728.2,182.8L724.1,185.7L721.3,189.8L718.0,193.3L713.2,194.5L708.4,195.5L704.6,198.2Z"/><path d="M702.2,191.6L704.6,188.2L707.9,185.9L711.5,183.9L713.9,180.5L716.3,177.0L719.8,175.1L719.5,174.6L715.5,176.1L712.6,178.8L709.7,181.6L705.7,183.0L701.9,184.8L699.5,188.1Z"/><path d="M694.9,183.9L696.0,180.7L697.9,178.0L699.6,175.3L699.5,172.0L699.1,168.7L699.6,165.7L699.0,165.8L697.8,168.7L697.7,171.7L696.9,174.5L694.7,176.6L692.8,178.8L691.6,181.3Z"/><path d="M688.8,180.8L688.1,177.3L688.2,173.9L688.7,170.6L687.3,167.6L685.3,164.8L684.4,161.8L683.9,162.1L684.2,165.3L685.2,168.2L686.0,171.1L685.2,174.1L684.2,177.0L684.1,179.8Z"/><path d="M677.9,177.9L679.1,174.6L681.0,172.0L682.8,169.4L682.8,166.1L682.3,163.0L682.6,160.0L682.0,160.1L681.0,163.0L681.0,165.9L680.3,168.7L678.2,170.6L676.1,172.5L674.5,174.5Z"/><path d="M681.9,166.0L681.5,160.3"/><path d="M669.8,172.2L670.9,168.6L673.3,165.9L675.6,163.3L676.5,159.8L677.3,156.3L679.1,153.4L678.6,153.2L676.1,155.7L674.9,159.0L673.4,162.0L670.4,164.0L667.9,166.3L666.2,169.1Z"/><path d="M671.9,164.9L672.4,155.7"/><path d="M662.9,161.8L664.4,159.7L666.7,158.3L669.3,157.9L671.8,156.5L674.5,155.5L677.2,156.1L677.4,155.5L674.6,154.2L671.7,154.6L668.8,155.3L665.7,155.2L662.5,155.8L660.4,158.1Z"/><path d="M659.2,151.0L662.2,149.9L665.3,149.9L668.2,151.2L671.5,151.2L674.8,151.6L677.3,153.6L677.7,153.1L675.4,150.5L672.3,149.5L669.0,148.6L666.0,146.9L662.7,145.4L659.3,146.0Z"/><path d="M668.6,149.9L672.6,144.9"/><path d="M657.4,139.6L661.8,138.6L666.2,139.1L670.4,140.4L674.9,139.8L679.4,138.8L683.6,139.9L683.7,139.3L679.5,137.6L675.1,137.7L670.7,137.9L666.6,136.1L662.3,134.5L657.9,134.9Z"/></g><ellipse cx="798" cy="224" rx="36" ry="22" fill="#8a8a8a" filter="url(#b2a)"/><g stroke="#6a6a6a" stroke-width="1.2" fill="none"><path d="M805.0,224.6L830.8,226.4"/><path d="M804.4,226.2L828.6,232.9"/><path d="M803.3,227.7L823.9,238.7"/><path d="M801.7,228.8L817.1,243.4"/><path d="M799.7,229.6L808.7,246.5"/><path d="M797.6,230.0L799.4,247.9"/><path d="M795.3,229.9L789.9,247.5"/><path d="M793.2,229.3L781.0,245.2"/><path d="M791.4,228.3L773.4,241.2"/><path d="M790.1,227.0L767.5,236.0"/><path d="M789.2,225.4L764.0,229.7"/></g><path d="M702,192 Q720,186 735,190 T765,194 Q790,198 808,196 T856,208" stroke="#6a6a6a" stroke-width="7" fill="none"/><path d="M702,192 Q720,186 735,190 T765,194 Q790,198 808,196 T856,208" stroke="#303030" stroke-width="2.4" fill="none"/><path d="M748,180 Q770,172 790,178 T832,184" stroke="#6e6e6e" stroke-width="5" fill="none"/><path d="M748,180 Q770,172 790,178 T832,184" stroke="#383838" stroke-width="1.8" fill="none"/><ellipse cx="742" cy="172" rx="20" ry="10" fill="#8a8a8a" filter="url(#b2a)"/><ellipse cx="728" cy="192" rx="28" ry="11" fill="#6a6a6a" filter="url(#b2a)"/><ellipse cx="690" cy="140" rx="22" ry="20" fill="#7a7a7a" opacity="0.5" filter="url(#b2a)"/><g stroke="#3a3a3a" stroke-width="1.8" fill="none"><path d="M712,195Q725,188 745,193"/><path d="M760,182Q770,178 778,186"/><path d="M735,202Q750,198 760,204"/><path d="M815,182q6,-4 10,2"/><path d="M838,176q5,3 3,9"/></g><ellipse cx="775" cy="212" rx="85" ry="34" fill="#303030" opacity="0.35" filter="url(#b2a)"/><path d="M725,206 Q745,198 765,212" stroke="#1a1a1a" stroke-width="5" fill="none"/><rect x="655" y="85" width="220" height="170" filter="url(#nza)"/><path d="M779.0,147.0C780.7,142.8 787.8,142.2 792.0,142.0C796.2,141.8 801.2,143.2 804.0,146.0C806.8,148.8 809.0,154.8 809.0,159.0C809.0,163.2 807.0,168.3 804.0,171.0C801.0,173.7 794.7,175.7 791.0,175.0C787.3,174.3 784.0,171.7 782.0,167.0C780.0,162.3 777.3,151.2 779.0,147.0Z" fill="#141414"/></g></g><g filter="url(#b1a)"><g clip-path="url(#ccora)"><path d="M751.2,440.7C753.5,441.2 756.0,442.8 757.3,445.3C758.6,447.9 757.9,456.0 758.9,456.0C759.9,456.0 761.7,447.6 763.5,445.3C765.3,443.0 767.1,441.7 769.6,442.2C772.1,442.7 774.7,444.3 778.8,448.4C782.9,452.5 788.9,461.3 794.0,466.7C799.1,472.1 805.8,476.9 809.4,480.5C813.0,484.1 814.7,484.6 815.5,488.2C816.3,491.8 815.0,497.4 814.0,502.0C813.0,506.6 812.2,512.4 809.4,515.7C806.6,519.0 801.6,520.2 797.0,521.8C792.4,523.3 785.1,523.5 781.8,525.0C778.5,526.5 779.2,530.5 777.2,531.0C775.2,531.5 772.7,528.8 769.6,528.0C766.5,527.2 764.5,526.9 758.9,526.4C753.3,525.9 742.4,526.0 736.0,525.0C729.6,524.0 725.2,521.8 720.6,520.3C716.0,518.8 712.0,518.2 708.4,515.7C704.8,513.2 701.0,509.1 699.2,505.0C697.4,500.9 697.2,496.3 697.7,491.2C698.2,486.1 699.7,479.2 702.2,474.4C704.8,469.5 708.1,466.2 713.0,462.1C717.9,458.0 726.2,453.2 731.3,449.9C736.4,446.6 740.3,443.7 743.6,442.2C746.9,440.7 748.9,440.2 751.2,440.7Z" fill="#b0b0b0"/><path d="M751.2,440.7C753.5,441.2 756.0,442.8 757.3,445.3C758.6,447.9 757.9,456.0 758.9,456.0C759.9,456.0 761.7,447.6 763.5,445.3C765.3,443.0 767.1,441.7 769.6,442.2C772.1,442.7 774.7,444.3 778.8,448.4C782.9,452.5 788.9,461.3 794.0,466.7C799.1,472.1 805.8,476.9 809.4,480.5C813.0,484.1 814.7,484.6 815.5,488.2C816.3,491.8 815.0,497.4 814.0,502.0C813.0,506.6 812.2,512.4 809.4,515.7C806.6,519.0 801.6,520.2 797.0,521.8C792.4,523.3 785.1,523.5 781.8,525.0C778.5,526.5 779.2,530.5 777.2,531.0C775.2,531.5 772.7,528.8 769.6,528.0C766.5,527.2 764.5,526.9 758.9,526.4C753.3,525.9 742.4,526.0 736.0,525.0C729.6,524.0 725.2,521.8 720.6,520.3C716.0,518.8 712.0,518.2 708.4,515.7C704.8,513.2 701.0,509.1 699.2,505.0C697.4,500.9 697.2,496.3 697.7,491.2C698.2,486.1 699.7,479.2 702.2,474.4C704.8,469.5 708.1,466.2 713.0,462.1C717.9,458.0 726.2,453.2 731.3,449.9C736.4,446.6 740.3,443.7 743.6,442.2C746.9,440.7 748.9,440.2 751.2,440.7Z" fill="none" stroke="#666666" stroke-width="6"/><g stroke="#686868" stroke-linecap="round" stroke-linejoin="round" fill="none"><path d="M754.7,439.4L753.2,441.5L752.5,444.1L750.8,446.1L748.5,447.5L747.0,449.6L745.7,451.9" stroke-width="11.3"/><path d="M748.5,447.5L749.3,453.2" stroke-width="7.0"/><path d="M760.5,449.0L758.0,449.9L755.8,451.5L753.1,451.8L750.5,451.0L747.8,451.2L745.1,451.6" stroke-width="11.7"/><path d="M753.1,451.8L746.2,448.0" stroke-width="7.0"/><path d="M758.1,452.2L760.0,452.8L761.9,452.3L764.0,452.1L766.0,452.2L767.6,451.1L768.8,449.4" stroke-width="10.3"/><path d="M764.1,441.1L765.6,442.9L767.4,444.3L768.1,446.5L767.9,448.7L768.3,451.0L768.7,453.2" stroke-width="10.3"/><path d="M767.9,448.7L777.8,448.7" stroke-width="7.0"/><path d="M775.0,441.9L773.8,443.5L773.3,445.4L772.0,446.9L770.2,447.9L769.0,449.4L767.9,451.1" stroke-width="8.5"/><path d="M781.1,447.2L779.0,448.9L777.7,451.2L775.5,452.8L773.0,453.6L771.1,455.4L769.4,457.6" stroke-width="11.8"/><path d="M787.8,455.3L785.7,456.5L783.9,458.0L781.6,458.3L779.4,457.5L777.0,457.2L774.7,457.0" stroke-width="11.5"/><path d="M792.9,461.7L789.1,463.6L786.6,467.1L783.2,469.7L779.4,471.5L777.1,475.1L775.9,479.2" stroke-width="11.2"/><path d="M797.7,466.8L795.6,468.6L794.8,471.1L793.3,473.3L791.6,475.3L791.3,478.0L791.9,480.6" stroke-width="10.4"/><path d="M803.7,472.2L801.7,474.0L800.8,476.5L799.2,478.6L797.2,480.3L796.3,482.8L796.1,485.4" stroke-width="8.4"/><path d="M809.0,476.7L807.1,479.7L806.6,483.1L804.8,486.1L802.2,488.4L800.9,491.6L800.2,495.1" stroke-width="11.8"/><path d="M817.1,485.2L813.3,485.7L810.4,488.1L806.9,489.7L803.3,491.0L801.1,494.1L800.1,497.8" stroke-width="9.3"/><path d="M818.0,494.2L814.0,493.9L810.2,494.7L806.4,493.5L803.5,490.7L799.9,489.1L796.2,487.7" stroke-width="10.5"/><path d="M803.5,490.7L797.8,486.5" stroke-width="7.0"/><path d="M816.2,503.5L813.6,502.2L810.7,501.9L808.2,500.4L806.3,498.1L803.7,496.7L800.9,495.7" stroke-width="11.0"/><path d="M814.3,511.7L810.9,509.4L807.1,508.1L804.5,505.0L803.5,501.1L801.3,497.7L798.9,494.4" stroke-width="11.5"/><path d="M807.1,508.1L801.7,509.5" stroke-width="7.0"/><path d="M808.2,520.0L806.5,518.4L804.3,517.6L802.7,516.0L801.6,513.9L799.8,512.5L797.8,511.5" stroke-width="8.2"/><path d="M804.3,517.6L795.4,517.2" stroke-width="7.0"/><path d="M799.3,523.7L799.0,519.9L796.7,516.9L794.9,513.5L793.6,509.9L790.3,508.0L786.5,507.4" stroke-width="9.9"/><path d="M788.0,526.1L787.4,524.4L786.0,523.2L784.9,521.8L784.0,520.2L782.4,519.4L780.6,519.1" stroke-width="9.4"/><path d="M782.8,527.3L780.8,525.5L778.3,524.7L776.2,523.2L774.4,521.3L771.9,520.5L769.3,520.3" stroke-width="10.4"/><path d="M774.3,533.0L776.0,529.6L776.2,525.8L777.7,522.3L780.1,519.4L780.8,515.6L780.7,511.8" stroke-width="10.1"/><path d="M767.0,530.0L767.6,527.2L767.5,524.4L768.9,522.0L771.1,520.4L772.8,518.1L774.4,515.8" stroke-width="11.3"/><path d="M760.2,529.0L761.1,525.4L760.9,521.6L762.4,518.1L765.2,515.6L766.8,512.1L768.1,508.6" stroke-width="8.4"/><path d="M762.4,518.1L757.9,513.1" stroke-width="7.0"/><path d="M749.6,528.5L749.4,526.7L748.5,525.3L748.2,523.6L748.4,521.8L747.8,520.2L746.9,518.7" stroke-width="9.0"/><path d="M739.0,527.9L739.6,524.8L739.3,521.7L740.7,518.8L743.2,516.9L745.0,514.3L746.6,511.6" stroke-width="9.0"/><path d="M731.5,526.6L733.2,524.0L733.6,520.8L735.0,518.0L737.0,515.6L737.7,512.6L737.6,509.4" stroke-width="11.7"/><path d="M720.6,523.0L722.2,520.7L722.4,518.0L723.3,515.4L724.7,513.0L724.4,510.3L723.3,507.8" stroke-width="11.0"/><path d="M724.7,513.0L733.9,512.7" stroke-width="7.0"/><path d="M713.8,520.9L715.5,517.5L716.2,513.9L718.7,511.1L722.2,509.6L725.0,507.1L727.7,504.6" stroke-width="8.8"/><path d="M704.9,516.1L707.3,514.4L708.8,511.9L711.1,510.1L713.8,508.9L715.7,506.6L716.9,503.9" stroke-width="12.0"/><path d="M711.1,510.1L712.0,504.0" stroke-width="7.0"/><path d="M699.1,509.9L702.3,508.3L705.2,506.1L708.7,505.7L712.0,507.1L715.6,507.5L719.2,507.8" stroke-width="11.6"/><path d="M705.2,506.1L710.5,507.0" stroke-width="7.0"/><path d="M695.6,501.8L697.5,501.2L699.2,500.2L701.1,500.2L702.9,501.1L704.8,501.5L706.8,501.8" stroke-width="8.3"/><path d="M695.2,491.0L698.2,490.7L700.7,489.2L703.6,488.5L706.6,488.4L709.1,486.9L711.2,484.8" stroke-width="10.8"/><path d="M697.2,480.5L699.8,481.6L702.7,481.9L705.1,483.4L706.8,485.7L709.3,487.1L712.0,488.3" stroke-width="10.7"/><path d="M700.5,472.3L702.4,473.9L704.6,474.8L706.2,476.7L706.9,479.1L708.4,481.0L710.0,482.8" stroke-width="10.2"/><path d="M705.2,465.9L707.7,468.2L711.0,469.1L713.8,471.0L716.2,473.4L719.5,474.3L722.9,474.2" stroke-width="10.3"/><path d="M711.0,469.1L711.9,474.3" stroke-width="7.0"/><path d="M712.5,459.3L714.5,461.4L717.1,462.8L718.8,465.2L719.5,468.1L721.2,470.5L723.1,472.7" stroke-width="12.0"/><path d="M719.5,468.1L727.3,467.2" stroke-width="7.0"/><path d="M718.6,455.0L719.4,456.8L720.8,458.2L721.5,460.0L721.6,462.0L722.5,463.7L723.7,465.3" stroke-width="10.2"/><path d="M720.8,458.2L727.5,459.3" stroke-width="7.0"/><path d="M728.1,449.0L730.1,452.3L733.4,454.5L735.7,457.7L737.1,461.3L740.1,463.8L743.5,465.7" stroke-width="11.6"/><path d="M734.8,444.6L735.7,446.5L737.6,447.7L739.1,449.2L740.4,451.0L742.5,451.6L744.7,451.6" stroke-width="11.3"/><path d="M740.6,440.9L741.7,442.6L743.3,443.7L744.2,445.5L744.4,447.4L745.3,449.2L746.5,450.8" stroke-width="10.0"/><path d="M744.2,445.5L743.5,452.2" stroke-width="7.0"/></g><g fill="#222222" stroke="#222222" stroke-width="0.6" stroke-linejoin="round"><path d="M753.0,438.3L751.8,440.6L751.2,443.1L749.9,445.4L747.9,446.9L746.5,449.1L745.5,451.7L745.9,452.2L747.4,450.1L749.2,448.1L751.7,446.9L753.9,445.1L754.5,442.5L756.4,440.4Z"/><path d="M748.5,447.5L749.3,453.2"/><path d="M759.8,447.1L757.4,447.8L755.6,450.1L753.0,450.5L750.6,450.0L747.9,450.6L745.2,451.3L745.1,451.9L747.7,451.8L750.5,452.0L753.2,453.1L756.0,452.8L758.6,451.9L761.3,450.8Z"/><path d="M753.1,451.8L746.2,448.0"/><path d="M757.5,454.3L759.8,454.6L762.1,453.9L764.3,453.4L766.4,453.1L768.0,451.6L769.0,449.6L768.6,449.2L767.3,450.6L765.5,451.3L763.6,450.8L761.8,450.6L760.1,451.0L758.6,450.0Z"/><path d="M762.7,442.4L764.0,443.8L765.9,444.9L766.9,446.7L766.9,448.8L767.7,450.9L768.4,453.1L769.0,453.3L768.9,451.0L768.8,448.7L769.4,446.2L768.8,443.7L767.1,442.0L765.6,439.8Z"/><path d="M767.9,448.7L777.8,448.7"/><path d="M773.2,440.7L772.4,442.4L772.2,444.5L771.0,446.0L769.6,447.2L768.6,449.0L767.7,450.9L768.1,451.4L769.4,449.9L770.8,448.5L773.0,447.8L774.4,446.3L775.3,444.6L776.9,443.1Z"/><path d="M779.5,445.4L777.9,447.5L776.8,450.0L774.9,451.9L772.5,452.9L770.7,455.0L769.3,457.3L769.6,457.8L771.4,455.9L773.5,454.3L776.2,453.6L778.6,452.3L780.2,450.2L782.7,449.1Z"/><path d="M786.7,453.5L785.1,454.8L783.7,456.6L781.6,456.9L779.6,456.6L777.3,456.6L774.8,456.8L774.5,457.2L776.8,457.8L779.2,458.3L781.6,459.6L784.2,459.4L786.4,458.2L788.9,457.1Z"/><path d="M791.8,459.7L788.0,462.0L785.5,465.7L782.4,468.8L778.7,470.9L776.6,474.8L775.6,479.0L776.1,479.3L777.6,475.4L780.1,472.1L784.1,470.5L787.7,468.4L790.2,465.2L794.0,463.7Z"/><path d="M796.1,465.2L794.2,467.4L793.5,470.3L792.1,472.8L790.6,475.1L790.7,477.9L791.6,480.6L792.2,480.6L791.9,478.1L792.5,475.6L794.6,473.8L796.1,471.8L797.0,469.7L799.2,468.5Z"/><path d="M802.1,470.6L800.4,472.9L799.6,475.6L798.1,477.9L796.3,479.8L795.7,482.5L795.8,485.3L796.4,485.5L796.8,483.0L798.1,480.7L800.3,479.2L802.0,477.3L803.1,475.1L805.3,473.8Z"/><path d="M807.0,475.6L805.6,478.8L805.3,482.4L803.6,485.5L801.3,487.9L800.4,491.4L799.9,494.9L800.5,495.2L801.4,491.9L803.0,488.9L805.9,486.7L807.9,483.8L808.7,480.5L811.0,477.8Z"/><path d="M816.8,482.9L812.8,484.0L809.6,486.7L806.2,488.8L802.6,490.3L800.6,493.8L799.9,497.7L800.4,497.9L801.6,494.4L804.0,491.6L807.7,490.7L811.1,489.5L813.9,487.3L817.5,487.5Z"/><path d="M818.0,492.2L814.3,492.0L810.6,493.2L806.9,492.3L804.0,489.9L800.3,488.6L796.4,487.5L795.9,487.9L799.5,489.6L803.0,491.5L805.9,494.6L809.7,496.3L813.8,495.9L818.0,496.2Z"/><path d="M803.5,490.7L797.8,486.5"/><path d="M817.1,501.5L814.4,500.5L811.5,500.4L808.9,499.3L806.8,497.4L804.1,496.3L801.1,495.5L800.7,496.0L803.3,497.2L805.8,498.8L807.5,501.5L809.8,503.4L812.8,503.9L815.4,505.5Z"/><path d="M815.6,509.6L812.0,508.1L808.2,507.1L805.5,504.4L804.4,500.6L801.9,497.5L799.2,494.4L798.6,494.5L800.7,497.9L802.6,501.5L803.6,505.6L806.0,509.1L809.9,510.7L813.0,513.8Z"/><path d="M807.1,508.1L801.7,509.5"/><path d="M809.4,518.5L807.9,516.9L805.3,516.5L803.5,515.1L802.4,513.2L800.2,512.1L798.0,511.3L797.5,511.7L799.4,513.0L800.9,514.6L801.9,516.8L803.4,518.6L805.1,520.0L806.9,521.5Z"/><path d="M804.3,517.6L795.4,517.2"/><path d="M801.6,523.4L801.0,519.2L797.9,516.2L795.8,512.7L794.1,509.2L790.5,507.4L786.6,507.1L786.4,507.7L790.0,508.5L793.0,510.6L794.0,514.2L795.5,517.6L797.1,520.5L797.1,523.9Z"/><path d="M789.8,525.3L789.2,523.3L787.3,522.1L785.6,520.9L784.5,519.4L782.7,518.8L780.7,518.8L780.5,519.4L782.1,519.9L783.5,520.9L784.1,522.6L784.7,524.3L785.6,525.4L786.2,526.8Z"/><path d="M784.1,525.8L782.0,523.9L779.2,523.3L776.8,522.2L774.8,520.5L772.1,519.9L769.4,520.0L769.2,520.6L771.7,521.0L774.1,522.0L775.6,524.3L777.4,526.1L779.7,527.0L781.5,528.8Z"/><path d="M776.2,533.9L777.8,530.4L777.7,526.4L778.8,522.8L781.0,519.7L781.3,515.8L781.0,511.9L780.4,511.8L780.2,515.5L779.1,519.1L776.5,521.9L774.6,525.3L774.3,528.9L772.4,532.2Z"/><path d="M769.4,530.4L769.3,527.8L769.0,525.2L769.9,522.7L771.8,521.0L773.2,518.6L774.6,516.1L774.3,515.6L772.4,517.6L770.5,519.7L767.8,521.2L766.0,523.7L765.9,526.7L764.6,529.6Z"/><path d="M762.4,529.5L762.7,525.8L762.3,522.2L763.4,518.7L765.9,516.0L767.3,512.5L768.3,508.8L767.9,508.4L766.3,511.7L764.4,515.1L761.4,517.6L759.4,521.0L759.5,524.9L758.0,528.6Z"/><path d="M762.4,518.1L757.9,513.1"/><path d="M751.9,528.0L751.1,526.4L749.9,525.0L749.3,523.3L749.4,521.6L748.4,520.1L747.2,518.6L746.6,518.8L747.2,520.4L747.4,522.1L747.1,523.8L747.0,525.6L747.6,527.1L747.3,528.9Z"/><path d="M741.0,528.1L741.2,525.2L740.9,522.4L741.8,519.5L743.9,517.5L745.4,514.8L746.8,511.9L746.5,511.4L744.5,513.8L742.5,516.3L739.6,518.2L737.7,520.9L738.0,524.3L737.0,527.6Z"/><path d="M733.2,527.6L735.0,524.9L735.1,521.5L736.3,518.5L737.9,515.9L738.3,512.7L737.9,509.5L737.3,509.3L737.1,512.4L736.2,515.4L733.7,517.5L732.0,520.1L731.3,523.0L729.7,525.6Z"/><path d="M722.5,524.1L723.9,521.5L724.0,518.5L724.7,515.6L725.6,513.0L725.0,510.2L723.6,507.7L723.0,507.9L723.7,510.4L723.7,513.0L722.0,515.2L720.9,517.5L720.5,519.9L718.8,521.8Z"/><path d="M724.7,513.0L733.9,512.7"/><path d="M715.9,521.8L717.1,518.5L717.6,515.0L719.6,512.1L722.7,510.4L725.2,507.7L727.8,504.8L727.6,504.3L724.7,506.6L721.7,508.9L717.8,510.1L714.9,512.8L713.8,516.5L711.8,520.0Z"/><path d="M706.3,517.9L708.5,516.0L709.8,513.0L712.0,511.0L714.5,509.6L716.1,507.0L717.2,504.1L716.7,503.7L715.2,506.1L713.1,508.2L710.3,509.1L707.9,510.8L706.0,512.9L703.5,514.3Z"/><path d="M711.1,510.1L712.0,504.0"/><path d="M700.3,512.0L702.9,510.0L705.3,507.5L708.7,506.9L711.8,507.9L715.3,508.0L719.0,508.1L719.3,507.6L715.9,506.9L712.2,506.2L708.8,504.6L705.0,504.7L701.8,506.6L698.0,507.8Z"/><path d="M705.2,506.1L710.5,507.0"/><path d="M696.2,503.6L697.8,503.0L699.2,501.8L701.0,501.4L702.6,501.9L704.6,502.0L706.6,502.0L707.0,501.6L705.1,500.9L703.1,500.3L701.3,499.0L699.1,498.5L697.1,499.3L694.9,499.9Z"/><path d="M695.5,493.4L698.5,492.4L701.1,490.6L704.0,489.6L707.0,489.3L709.4,487.4L711.3,485.0L711.0,484.5L708.8,486.4L706.2,487.6L703.2,487.3L700.3,487.7L697.8,489.1L694.9,488.6Z"/><path d="M696.3,482.7L698.9,483.5L702.0,483.1L704.3,484.6L706.3,486.4L708.9,487.6L711.7,488.5L712.2,488.1L709.7,486.7L707.4,485.0L705.9,482.3L703.4,480.7L700.7,479.8L698.1,478.2Z"/><path d="M699.1,474.1L701.0,475.3L703.6,475.8L705.2,477.4L706.0,479.6L707.8,481.3L709.8,482.9L710.3,482.7L708.9,480.7L707.8,478.6L707.2,476.0L705.7,473.9L703.7,472.4L701.9,470.5Z"/><path d="M703.9,467.4L706.6,469.7L710.1,470.6L713.3,472.2L715.9,474.2L719.3,474.8L722.8,474.5L723.0,474.0L719.7,473.7L716.5,472.6L714.4,469.8L711.9,467.7L708.8,466.7L706.5,464.4Z"/><path d="M711.0,469.1L711.9,474.3"/><path d="M711.0,460.9L713.0,462.8L715.7,463.9L717.8,465.9L718.6,468.6L720.7,470.7L722.9,472.8L723.4,472.6L721.7,470.2L720.4,467.6L719.8,464.6L718.5,461.8L716.1,460.0L714.0,457.7Z"/><path d="M719.5,468.1L727.3,467.2"/><path d="M716.5,456.0L717.7,457.5L719.2,458.9L720.4,460.4L720.7,462.3L721.9,463.9L723.4,465.4L723.9,465.2L723.1,463.5L722.5,461.6L722.6,459.6L722.4,457.5L721.1,456.0L720.7,453.9Z"/><path d="M720.8,458.2L727.5,459.3"/><path d="M726.1,450.3L728.7,453.4L732.0,455.6L734.8,458.4L736.4,462.0L739.6,464.3L743.3,465.9L743.7,465.4L740.5,463.4L737.8,460.7L736.6,456.9L734.7,453.4L731.5,451.3L730.0,447.7Z"/><path d="M732.7,445.7L734.4,447.6L736.6,448.7L738.4,450.3L740.0,451.8L742.3,452.3L744.6,451.9L744.7,451.3L742.7,451.0L740.8,450.2L739.8,448.2L738.6,446.6L737.1,445.5L736.8,443.5Z"/><path d="M739.0,442.1L740.1,443.6L742.0,444.4L742.9,446.1L743.6,447.8L744.7,449.4L746.2,450.8L746.8,450.7L745.9,449.0L745.1,447.1L745.4,444.9L744.5,443.1L743.3,441.5L742.2,439.7Z"/><path d="M744.2,445.5L743.5,452.2"/></g><path d="M758.9,452 L759,527" stroke="#2a2a2a" stroke-width="2.5"/><rect x="690" y="435" width="130" height="100" filter="url(#nza)"/></g></g><g stroke="#4848d0" stroke-width="2" fill="none"><path d="M342,144.9H524M342,144.9H207M342,144.9V362M342,144.9V47" stroke-dasharray="8 8"/><path d="M334,144.9H350M342,136.9V152.9" stroke="#5050e0"/><path d="M689.7,155.9H909M689.7,155.9H592M689.7,155.9V362M689.7,155.9V47" stroke-dasharray="8 8"/><path d="M681.7,155.9H697.7M689.7,147.9V163.9" stroke="#5050e0"/><path d="M727,496.4H909M727,496.4H592M727,496.4V702M727,496.4V388" stroke-dasharray="8 8"/><path d="M719,496.4H735M727,488.4V504.4" stroke="#5050e0"/></g><g stroke="#4848d0" stroke-width="1.6"><path d="M375.4,486V658"/><path d="M323,544.6H494" stroke-width="2"/><path d="M369,539.5L379.3,548"/></g></svg>
<div class="t" style="left:189.5px;top:52.18px;font-size:11.6px;line-height:11.6px;font-weight:400;color:#3cb400;font-family:'Liberation Sans', sans-serif;letter-spacing:0.75px">norm_minmax</div>
<div class="t" style="left:574.5px;top:52.18px;font-size:11.6px;line-height:11.6px;font-weight:400;color:#3cb400;font-family:'Liberation Sans', sans-serif;letter-spacing:0.75px">norm_minmax</div>
<div class="t" style="left:574.5px;top:393.18px;font-size:11.6px;line-height:11.6px;font-weight:400;color:#3cb400;font-family:'Liberation Sans', sans-serif;letter-spacing:0.75px">norm_minmax</div>
<div class="t" style="left:358.5px;top:49.87px;font-size:14px;line-height:14px;font-weight:700;color:#f0b400;font-family:'Liberation Serif', serif;transform:scaleX(1.12);transform-origin:0 0">A</div>
<div class="t" style="left:358.5px;top:345.28px;font-size:14px;line-height:14px;font-weight:700;color:#f0b400;font-family:'Liberation Serif', serif;transform:scaleX(1.12);transform-origin:0 0">P</div>
<div class="t" style="left:188.0px;top:197.58px;font-size:14px;line-height:14px;font-weight:700;color:#f0b400;font-family:'Liberation Serif', serif;transform:scaleX(1.12);transform-origin:0 0">R</div>
<div class="t" style="left:528.0px;top:197.58px;font-size:14px;line-height:14px;font-weight:700;color:#f0b400;font-family:'Liberation Serif', serif;transform:scaleX(1.12);transform-origin:0 0">L</div>
<div class="t" style="left:743.5px;top:49.87px;font-size:14px;line-height:14px;font-weight:700;color:#f0b400;font-family:'Liberation Serif', serif;transform:scaleX(1.12);transform-origin:0 0">S</div>
<div class="t" style="left:744.0px;top:345.28px;font-size:14px;line-height:14px;font-weight:700;color:#f0b400;font-family:'Liberation Serif', serif;transform:scaleX(1.12);transform-origin:0 0">I</div>
<div class="t" style="left:573.0px;top:197.58px;font-size:14px;line-height:14px;font-weight:700;color:#f0b400;font-family:'Liberation Serif', serif;transform:scaleX(1.12);transform-origin:0 0">A</div>
<div class="t" style="left:913.0px;top:197.58px;font-size:14px;line-height:14px;font-weight:700;color:#f0b400;font-family:'Liberation Serif', serif;transform:scaleX(1.12);transform-origin:0 0">P</div>
<div class="t" style="left:743.5px;top:390.88px;font-size:14px;line-height:14px;font-weight:700;color:#f0b400;font-family:'Liberation Serif', serif;transform:scaleX(1.12);transform-origin:0 0">S</div>
<div class="t" style="left:744.0px;top:685.57px;font-size:14px;line-height:14px;font-weight:700;color:#f0b400;font-family:'Liberation Serif', serif;transform:scaleX(1.12);transform-origin:0 0">I</div>
<div class="t" style="left:573.0px;top:537.57px;font-size:14px;line-height:14px;font-weight:700;color:#f0b400;font-family:'Liberation Serif', serif;transform:scaleX(1.12);transform-origin:0 0">R</div>
<div class="t" style="left:913.0px;top:537.57px;font-size:14px;line-height:14px;font-weight:700;color:#f0b400;font-family:'Liberation Serif', serif;transform:scaleX(1.12);transform-origin:0 0">L</div>
<div class="r" style="left:415px;top:351.0px;width:125.5px;height:2.6000000000000227px;background:#3cb400"></div>
<div class="r" style="left:415px;top:346.8px;width:2px;height:11.0px;background:#3cb400"></div>
<div class="r" style="left:538.5px;top:346.8px;width:2.0px;height:11.0px;background:#3cb400"></div>
<div class="t" style="left:456px;top:336.39px;font-size:12.3px;line-height:12.3px;font-weight:400;color:#3cb400;font-family:'Liberation Sans', sans-serif;">10 cm</div>
<div class="r" style="left:800px;top:351.0px;width:125.5px;height:2.6000000000000227px;background:#3cb400"></div>
<div class="r" style="left:800px;top:346.8px;width:2px;height:11.0px;background:#3cb400"></div>
<div class="r" style="left:923.5px;top:346.8px;width:2.0px;height:11.0px;background:#3cb400"></div>
<div class="t" style="left:841px;top:336.39px;font-size:12.3px;line-height:12.3px;font-weight:400;color:#3cb400;font-family:'Liberation Sans', sans-serif;">10 cm</div>
<div class="r" style="left:800px;top:691.0px;width:125.5px;height:2.599999999999909px;background:#3cb400"></div>
<div class="r" style="left:800px;top:686.8px;width:2px;height:11.0px;background:#3cb400"></div>
<div class="r" style="left:923.5px;top:686.8px;width:2.0px;height:11.0px;background:#3cb400"></div>
<div class="t" style="left:841px;top:676.39px;font-size:12.3px;line-height:12.3px;font-weight:400;color:#3cb400;font-family:'Liberation Sans', sans-serif;">10 cm</div>
<div class="r" style="left:549px;top:50px;width:13px;height:13px;background:#fff;border:1px solid #666;border-top:2px solid #555;border-right:1.5px solid #666;border-bottom:1.5px solid #666;box-sizing:border-box"></div>
<div class="t" style="left:551.7px;top:51.69px;font-size:11px;line-height:11px;font-weight:400;color:#444;font-family:'Liberation Sans', sans-serif;">A</div>
<svg class="r" style="left:550.5px;top:73px" width="11" height="10" viewBox="0 0 11 10"><path d="M1 3h2.3l1-1.5h2.4l1 1.5H10v6H1z" fill="none" stroke="#111" stroke-width="1.2" stroke-linejoin="round"/><circle cx="5.5" cy="5.9" r="1.6" fill="none" stroke="#333" stroke-width="1.2"/></svg>
<div class="r" style="left:549px;top:91px;width:14px;height:271px;background:#e8e8e8;border-left:1px solid #dadada;box-sizing:border-box"></div>
<div class="r" style="left:550px;top:91px;width:13px;height:13px;background:#f7f7f7"></div>
<svg class="r" style="left:552px;top:95px" width="8" height="5"><path d="M0 4.5L4 0.5L8 4.5z" fill="#555"/></svg>
<div class="r" style="left:550px;top:345px;width:13px;height:17px;background:#f7f7f7"></div>
<svg class="r" style="left:552px;top:351px" width="8" height="5"><path d="M0 0.5L4 4.5L8 0.5z" fill="#555"/></svg>
<div class="r" style="left:550px;top:179.7px;width:13px;height:26.30000000000001px;background:linear-gradient(90deg,#f4f4f4,#fdfdfd);border-top:1px solid #cfcfcf;border-bottom:1px solid #cfcfcf;box-sizing:border-box"></div>
<div class="r" style="left:934px;top:50px;width:13px;height:13px;background:#fff;border:1px solid #666;border-top:2px solid #555;border-right:1.5px solid #666;border-bottom:1.5px solid #666;box-sizing:border-box"></div>
<div class="t" style="left:936.7px;top:51.69px;font-size:11px;line-height:11px;font-weight:400;color:#444;font-family:'Liberation Sans', sans-serif;">S</div>
<svg class="r" style="left:935.5px;top:73px" width="11" height="10" viewBox="0 0 11 10"><path d="M1 3h2.3l1-1.5h2.4l1 1.5H10v6H1z" fill="none" stroke="#111" stroke-width="1.2" stroke-linejoin="round"/><circle cx="5.5" cy="5.9" r="1.6" fill="none" stroke="#333" stroke-width="1.2"/></svg>
<div class="r" style="left:934px;top:91px;width:14px;height:271px;background:#e8e8e8;border-left:1px solid #dadada;box-sizing:border-box"></div>
<div class="r" style="left:935px;top:91px;width:13px;height:13px;background:#f7f7f7"></div>
<svg class="r" style="left:937px;top:95px" width="8" height="5"><path d="M0 4.5L4 0.5L8 4.5z" fill="#555"/></svg>
<div class="r" style="left:935px;top:345px;width:13px;height:17px;background:#f7f7f7"></div>
<svg class="r" style="left:937px;top:351px" width="8" height="5"><path d="M0 0.5L4 4.5L8 0.5z" fill="#555"/></svg>
<div class="r" style="left:935px;top:197.5px;width:13px;height:26.69999999999999px;background:linear-gradient(90deg,#f4f4f4,#fdfdfd);border-top:1px solid #cfcfcf;border-bottom:1px solid #cfcfcf;box-sizing:border-box"></div>
<div class="r" style="left:934px;top:391px;width:13px;height:13px;background:#fff;border:1px solid #666;border-top:2px solid #555;border-right:1.5px solid #666;border-bottom:1.5px solid #666;box-sizing:border-box"></div>
<div class="t" style="left:936.7px;top:392.69px;font-size:11px;line-height:11px;font-weight:400;color:#444;font-family:'Liberation Sans', sans-serif;">C</div>
<svg class="r" style="left:935.5px;top:414px" width="11" height="10" viewBox="0 0 11 10"><path d="M1 3h2.3l1-1.5h2.4l1 1.5H10v6H1z" fill="none" stroke="#111" stroke-width="1.2" stroke-linejoin="round"/><circle cx="5.5" cy="5.9" r="1.6" fill="none" stroke="#333" stroke-width="1.2"/></svg>
<div class="r" style="left:934px;top:432px;width:14px;height:271px;background:#e8e8e8;border-left:1px solid #dadada;box-sizing:border-box"></div>
<div class="r" style="left:935px;top:432px;width:13px;height:13px;background:#f7f7f7"></div>
<svg class="r" style="left:937px;top:436px" width="8" height="5"><path d="M0 4.5L4 0.5L8 4.5z" fill="#555"/></svg>
<div class="r" style="left:935px;top:686px;width:13px;height:17px;background:#f7f7f7"></div>
<svg class="r" style="left:937px;top:692px" width="8" height="5"><path d="M0 0.5L4 4.5L8 0.5z" fill="#555"/></svg>
<div class="r" style="left:935px;top:595.4px;width:13px;height:26.600000000000023px;background:linear-gradient(90deg,#f4f4f4,#fdfdfd);border-top:1px solid #cfcfcf;border-bottom:1px solid #cfcfcf;box-sizing:border-box"></div>
<div class="r" style="left:408.5px;top:364.5px;width:70.0px;height:19.5px;background:linear-gradient(#fdfdfd,#efefef);border:1px solid #adadad;border-radius:3px;box-sizing:border-box"></div>
<div class="t" style="left:415.0px;top:366.92px;font-size:12.5px;line-height:12.5px;font-weight:400;color:#000;font-family:'Liberation Sans', sans-serif;">zoom to fit</div>
<div class="t" style="left:508.5px;top:367.34px;font-size:12px;line-height:12px;font-weight:400;color:#000;font-family:'Liberation Sans', sans-serif;">89 of 256</div>
<div class="r" style="left:793.5px;top:364.5px;width:70.0px;height:19.5px;background:linear-gradient(#fdfdfd,#efefef);border:1px solid #adadad;border-radius:3px;box-sizing:border-box"></div>
<div class="t" style="left:800.0px;top:366.92px;font-size:12.5px;line-height:12.5px;font-weight:400;color:#000;font-family:'Liberation Sans', sans-serif;">zoom to fit</div>
<div class="t" style="left:887.5px;top:367.34px;font-size:12px;line-height:12px;font-weight:400;color:#000;font-family:'Liberation Sans', sans-serif;">110 of 256</div>
<div class="r" style="left:793.5px;top:704.8px;width:70.0px;height:19.5px;background:linear-gradient(#fdfdfd,#efefef);border:1px solid #adadad;border-radius:3px;box-sizing:border-box"></div>
<div class="t" style="left:800.0px;top:707.22px;font-size:12.5px;line-height:12.5px;font-weight:400;color:#000;font-family:'Liberation Sans', sans-serif;">zoom to fit</div>
<div class="t" style="left:887.5px;top:707.64px;font-size:12px;line-height:12px;font-weight:400;color:#000;font-family:'Liberation Sans', sans-serif;">177 of 256</div>
<div class="r" style="left:194px;top:704.5px;width:50px;height:25.5px;background:linear-gradient(#fdfdfd,#efefef);border:1px solid #adadad;border-radius:3px;box-sizing:border-box"></div>
<div class="t" style="left:201px;top:707.42px;font-size:12.5px;line-height:12.5px;font-weight:400;color:#000;font-family:'Liberation Sans', sans-serif;">update</div>
<svg class="r" style="left:0;top:0" width="960" height="730" viewBox="0 0 960 730"><g fill="none" stroke="#d40000" stroke-linecap="round"><path d="M3.5,0.3H11" stroke-width="2.2"/><path d="M9,0.5Q12,2 11.2,5L9.2,9.5L13.3,11.5" stroke-width="1.9"/><path d="M12,0.8Q15.5,4 18.3,11" stroke-width="2.4" stroke="#c00000"/></g><g fill="none" stroke="#707070" stroke-width="1"><rect x="166.5" y="47.5" width="10" height="10" rx="2.2"/><rect x="171" y="49.8" width="3.5" height="3.5" rx="0.8"/><rect x="168.8" y="51.8" width="3.5" height="3.5" rx="0.8" fill="#f0f0f0"/></g><g transform="translate(17,101)"><g stroke="#5a5a5a" stroke-width="1.5"><path d="M-9,0H-4.5M-2,0H2.5M6.5,0H12.8"/><path d="M0,-9V-4M0,6.3V12"/></g><circle cx="0" cy="0" r="1" fill="#5a5a5a"/><path d="M2.8,2.5L3.8,10.5L5.7,8.6L7.8,11.3L9.3,10.1L7.3,7.5L10.2,6.8Z" fill="#bfc8d4" stroke="#1e2a2a" stroke-width="1.1" stroke-linejoin="round"/></g><g transform="translate(50.2,100.4)" fill="none" stroke="#1e2a2a"><circle cx="0" cy="0" r="4.6" stroke-width="1.5"/><path d="M-2.2,-1.5A2.5,2.5 0 0 1 0.5,-2.8" stroke-width="0.9"/><path d="M-3.3,3.3L-11.5,9" stroke-width="3.2" stroke-linecap="round"/><path d="M-3.6,3.6L-11.2,8.8" stroke="#d0d6d6" stroke-width="1.0" stroke-linecap="round"/></g><g stroke="#1a1a1a" fill="none" stroke-width="1.1"><path d="M71.9,94.7L79.9,97.6L80.6,106.3L75.9,111.8L64.8,106.1L71.2,102.1Z"/></g><g fill="#111"><circle cx="71.9" cy="94.7" r="1.6"/><circle cx="79.9" cy="97.6" r="1.6"/><circle cx="80.6" cy="106.3" r="1.6"/><circle cx="75.9" cy="111.8" r="1.6"/><circle cx="64.8" cy="106.1" r="1.6"/><circle cx="71.2" cy="102.1" r="1.6"/></g><g stroke-linecap="round"><path d="M96.5,105.5L104.5,97" stroke="#2a2a2a" stroke-width="4"/><path d="M97.5,104.5L103.5,98" stroke="#f2f2f2" stroke-width="1.4"/><path d="M104,97.5L107.5,94.5" stroke="#888" stroke-width="3"/><path d="M91,110L96,104.5L98.5,107Z" fill="#111" stroke="#111" stroke-width="1.4" stroke-linejoin="round"/></g><g fill="none" stroke-linecap="round"><path d="M131.5,99Q131,95.5 126.5,95.5Q121.5,96 121.5,99.5Q122,103 126.5,103.5Q131,104.5 130.5,108Q129.5,110.5 125.5,110.5Q122,110.5 120.5,108.5" stroke="#1e2a2a" stroke-width="2.6"/><path d="M131.5,99Q131,95.5 126.5,95.5Q121.5,96 121.5,99.5Q122,103 126.5,103.5Q131,104.5 130.5,108Q129.5,110.5 125.5,110.5Q122,110.5 120.5,108.5" stroke="#cfdcdc" stroke-width="0.8"/><path d="M126.3,93.5V112" stroke="#1e2a2a" stroke-width="2.8"/><path d="M126.3,94.5V111" stroke="#d8e2e2" stroke-width="0.9"/><path d="M131,98.5L133.5,99.5" stroke="#1e2a2a" stroke-width="1.8"/></g><g stroke="#1e2a2a" stroke-width="1.1" fill="#111"><path d="M153.6,94.5L147.6,111" fill="none"/><path d="M151,93.2L156.6,95M144.1,111L150.5,113.2" fill="none" stroke-width="1.3"/><circle cx="153" cy="97" r="1.1"/><circle cx="150.3" cy="102.5" r="1.5"/><circle cx="148.6" cy="108.5" r="1.1"/></g><text x="152.5" y="110" font-family="Liberation Sans" font-weight="700" font-size="7" fill="#1e2a2a">Ab</text><g fill="#858585"><path d="M9.9,133.1L16.8,128V131Q25,131 25.5,141.4Q23,135.5 16.8,135.5V138Z"/><path d="M51.9,133.1L45.3,128V131Q37,131 36.1,141.4Q39,135.5 45.3,135.5V138Z"/></g><g stroke="#000" stroke-width="1.4" stroke-linejoin="round"><path d="M70.5,139.5L79,142.5L86,136.5L77.5,133.5Z" fill="#fff"/><path d="M70.5,135.5L79,138.5L86,132.5L77.5,129.5Z" fill="#fff"/><path d="M70.5,131L79,134L86,128L77.5,125.5Z" fill="#000"/></g><rect x="109.5" y="132.5" width="9" height="9" fill="#fff" stroke="#000" stroke-width="1.2"/><rect x="106.8" y="129.5" width="8.7" height="8.7" fill="#f00" stroke="#000" stroke-width="1.3"/><path d="M120.1,137.3H126.8L123.4,141.2Z" fill="#555"/><path d="M144,127.2C149,127 152,130 151.4,134C151,136.5 148.5,137 148.8,139.5C149,142 146,143.3 143,142.6C139.5,141.8 137.4,138.5 137.4,135C137.4,130.5 140,127.3 144,127.2Z" fill="#000"/><g fill="#fff"><circle cx="144.6" cy="129.8" r="1.1"/><circle cx="148.3" cy="131.6" r="1.1"/><circle cx="140.8" cy="131.8" r="1.1"/><circle cx="140.4" cy="136" r="1.1"/><circle cx="144.8" cy="139.7" r="1.1"/></g><g transform="translate(18,199.9)"><g stroke="#5a5a5a" stroke-width="1.5"><path d="M-9,0H-4.5M-2,0H2.5M6.5,0H12.8"/><path d="M0,-9V-4M0,6.3V12"/></g><circle cx="0" cy="0" r="1" fill="#5a5a5a"/><path d="M2.8,2.5L3.8,10.5L5.7,8.6L7.8,11.3L9.3,10.1L7.3,7.5L10.2,6.8Z" fill="#bfc8d4" stroke="#1e2a2a" stroke-width="1.1" stroke-linejoin="round"/></g><g transform="translate(54,199.6)" fill="none" stroke="#1e2a2a"><circle cx="0" cy="0" r="4.6" stroke-width="1.5"/><path d="M-2.2,-1.5A2.5,2.5 0 0 1 0.5,-2.8" stroke-width="0.9"/><path d="M-3.3,3.3L-11.5,9" stroke-width="3.2" stroke-linecap="round"/><path d="M-3.6,3.6L-11.2,8.8" stroke="#d0d6d6" stroke-width="1.0" stroke-linecap="round"/></g><rect x="72.4" y="196.4" width="10.5" height="10.5" rx="1" fill="#505050"/><g fill="#fff"><rect x="73.6" y="198.8" width="3.8" height="3.3"/><rect x="78.2" y="198.8" width="3.5" height="3.3"/><rect x="73.6" y="202.8" width="3.8" height="3"/><rect x="78.2" y="202.8" width="3.5" height="3"/></g><g fill="none" stroke="#3a78c8" stroke-width="1"><path d="M100,202A8,8 0 1 1 114,202" opacity="0.5"/><path d="M101.8,201A6.2,6.2 0 1 1 112.2,201" opacity="0.8"/><path d="M103.6,200A4.4,4.4 0 1 1 110.4,200"/></g><circle cx="106.6" cy="197.3" r="2.2" fill="#fff" stroke="#555" stroke-width="0.9"/><path d="M105.5,199.5L99,211.2H114L107.7,199.5M101,207L110,209M112,207L103,209" fill="none" stroke="#666" stroke-width="1"/><g stroke="#000" stroke-width="1.3"><path d="M20.3,690V712M10,701.5H29.5"/></g><path d="M15,697Q26,694 26.5,701Q26.5,708 17,708.5" fill="none" stroke="#1e2a2a" stroke-width="2"/><path d="M13,696.5h4" stroke="#111" stroke-width="2.5"/><path d="M13.5,708.5L18,705.5V711Z" fill="#1e2a2a"/><g stroke="#666" stroke-width="1.4"><path d="M38,699H44M49.5,699H60M47,690V695M47,703V711"/></g><path d="M40,706L51,693" stroke="#222" stroke-width="0.8" stroke-dasharray="2 1.5"/><path d="M49.5,701.5L50.8,710L52.6,708.2L54.6,710.8L56,709.7L54,707.1L57,706.5Z" fill="#bfc8d4" stroke="#1e2a2a" stroke-width="1" stroke-linejoin="round"/><g fill="none" stroke="#1e2a2a" stroke-width="1.3" stroke-linejoin="round"><path d="M73,697L80,694L86.5,707L75,711L68.5,704Z"/><path d="M76,702L80.5,700L82.5,704.5L77.5,706Z"/><path d="M79,695L80.5,692M81,693L89,696L86,699"/></g><g fill="none" stroke="#1e2a2a" stroke-width="1.3" stroke-linejoin="round"><path d="M97.5,711Q105,710 110.5,701L113,697L109.5,695L105,702Z"/><path d="M110.5,696L114.5,692.5M112,698L116,694.5"/><path d="M104.5,707L106,705"/></g><g><rect x="476.4" y="707.5" width="4.8" height="4.5" fill="#707070"/><rect x="476.4" y="712" width="4.8" height="4" fill="#a0a0a0"/><rect x="476.4" y="716" width="4.8" height="4" fill="#d0d0d0"/><text x="469" y="711" font-family="Liberation Sans" font-size="4" fill="#888">2,8</text><text x="470" y="719" font-family="Liberation Sans" font-size="4" fill="#888">1,6</text></g><rect x="492.5" y="707.7" width="12" height="13" fill="#fff" stroke="#444" stroke-width="1"/><rect x="492.5" y="707.5" width="12" height="2" fill="#555"/><text x="493.3" y="717.5" font-family="Liberation Sans" font-size="8.5" fill="#666">3D</text><g fill="none" stroke="#000" stroke-width="1.3"><path d="M518.7,711.5h2.3l1-1.6h2.4l1,1.6h2v5.7h-8.7z" stroke-linejoin="round"/><circle cx="522.9" cy="714" r="1.6"/></g><path d="M541.7,711.8L547,716.5L552.3,711.8" fill="none" stroke="#4a4f63" stroke-width="2"/></svg>
</div>
</div>
<div class="r" style="left:955px;top:0;width:1px;height:719px;background:#777"></div>
</body></html>
